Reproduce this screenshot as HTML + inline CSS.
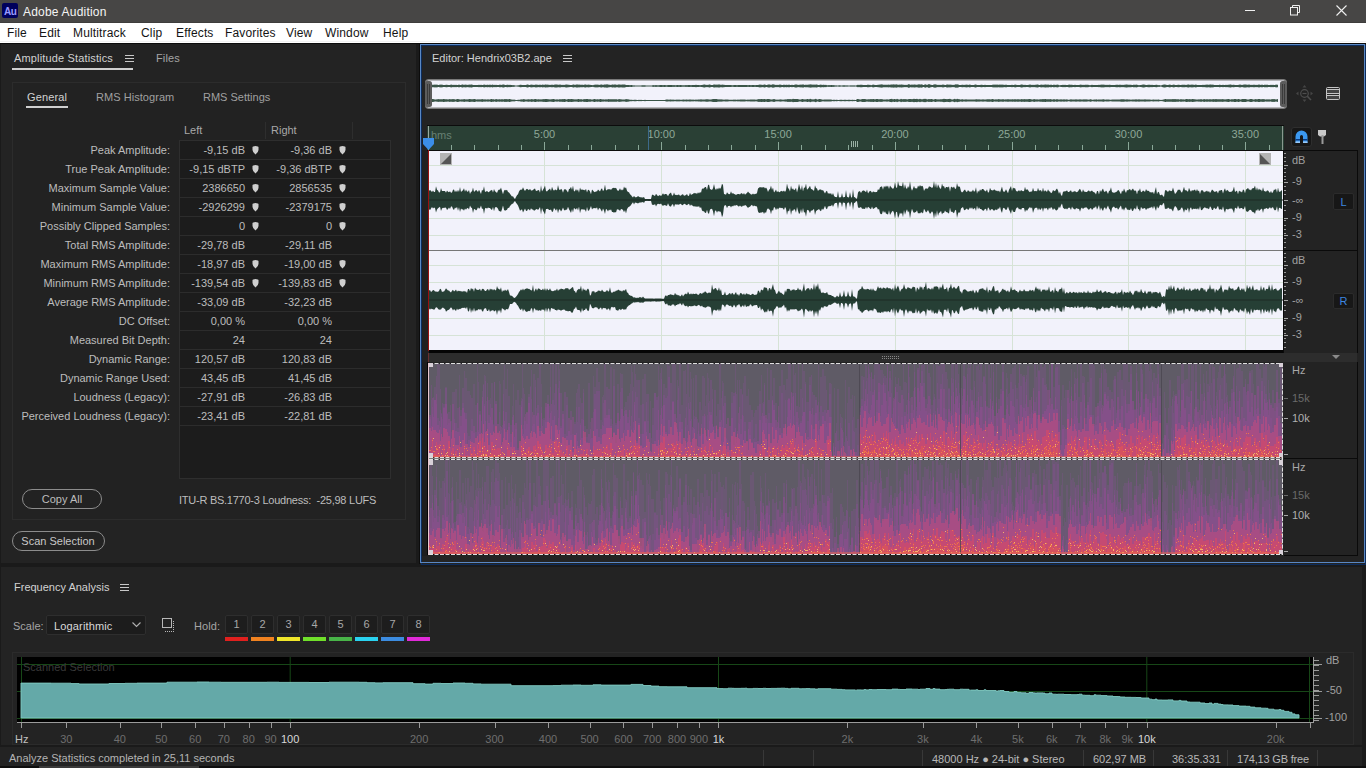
<!DOCTYPE html>
<html><head><meta charset="utf-8">
<style>
*{margin:0;padding:0;box-sizing:border-box}
html,body{width:1366px;height:768px;overflow:hidden;background:#1a1a1a;font-family:"Liberation Sans",sans-serif;position:relative}
.a{position:absolute;white-space:pre}
svg{position:absolute;display:block}
</style></head><body>
<div class="a" style="left:0px;top:0px;width:1366px;height:23px;background:#474645"></div>
<div class="a" style="left:0px;top:22px;width:1366px;height:1px;background:#3e3d3c"></div>
<div class="a" style="left:2px;top:3px;width:16px;height:15px;background:#00005b;border-radius:2px"></div>
<div class="a" style="left:4px;top:6px;font-size:10px;line-height:12px;color:#9a9aff;font-weight:bold;letter-spacing:-0.5px">Au</div>
<div class="a" style="left:23px;top:5px;font-size:12px;line-height:14px;color:#f4f4f4;letter-spacing:0.2px">Adobe Audition</div>
<div class="a" style="left:1245px;top:10px;width:10px;height:1px;background:#f0f0f0"></div>
<svg style="left:1290px;top:5px" width="11" height="11"><path d="M2.5 2.5V0.5H9.5V7.5H7.5" fill="none" stroke="#f0f0f0" stroke-width="1"/><rect x="0.5" y="2.5" width="7" height="7.5" fill="none" stroke="#f0f0f0" stroke-width="1"/></svg>
<svg style="left:1336px;top:5px" width="11" height="11"><path d="M0.5 0.5L10.5 10.5M10.5 0.5L0.5 10.5" stroke="#f0f0f0" stroke-width="1.1"/></svg>
<div class="a" style="left:0px;top:23px;width:1366px;height:20px;background:#ffffff"></div>
<div class="a" style="left:0px;top:41px;width:1366px;height:1px;background:#f2f2f2"></div>
<div class="a" style="left:7px;top:26px;font-size:12px;line-height:14px;color:#141414;letter-spacing:0.15px">File</div>
<div class="a" style="left:39px;top:26px;font-size:12px;line-height:14px;color:#141414;letter-spacing:0.15px">Edit</div>
<div class="a" style="left:73px;top:26px;font-size:12px;line-height:14px;color:#141414;letter-spacing:0.15px">Multitrack</div>
<div class="a" style="left:141px;top:26px;font-size:12px;line-height:14px;color:#141414;letter-spacing:0.15px">Clip</div>
<div class="a" style="left:176px;top:26px;font-size:12px;line-height:14px;color:#141414;letter-spacing:0.15px">Effects</div>
<div class="a" style="left:225px;top:26px;font-size:12px;line-height:14px;color:#141414;letter-spacing:0.15px">Favorites</div>
<div class="a" style="left:286px;top:26px;font-size:12px;line-height:14px;color:#141414;letter-spacing:0.15px">View</div>
<div class="a" style="left:325px;top:26px;font-size:12px;line-height:14px;color:#141414;letter-spacing:0.15px">Window</div>
<div class="a" style="left:383px;top:26px;font-size:12px;line-height:14px;color:#141414;letter-spacing:0.15px">Help</div>
<div class="a" style="left:1px;top:44px;width:415px;height:519px;background:#232323"></div>
<div class="a" style="left:14px;top:52px;font-size:11px;line-height:13px;color:#d2d2d2;letter-spacing:0.15px">Amplitude Statistics</div>
<div class="a" style="left:125px;top:55px;width:9px;height:1px;background:#c8c8c8"></div>
<div class="a" style="left:125px;top:58px;width:9px;height:1px;background:#c8c8c8"></div>
<div class="a" style="left:125px;top:61px;width:9px;height:1px;background:#c8c8c8"></div>
<div class="a" style="left:12px;top:68px;width:121px;height:2px;background:#cfcfcf"></div>
<div class="a" style="left:156px;top:52px;font-size:11px;line-height:13px;color:#a5a5a5;letter-spacing:0.15px">Files</div>
<div class="a" style="left:12px;top:82px;width:394px;height:438px;border:1px solid #2c2c2c;background:#222222"></div>
<div class="a" style="left:27px;top:91px;font-size:11px;line-height:13px;color:#d2d2d2;letter-spacing:0.15px">General</div>
<div class="a" style="left:26px;top:106px;width:42px;height:2px;background:#cfcfcf"></div>
<div class="a" style="left:96px;top:91px;font-size:11px;line-height:13px;color:#a0a0a0;letter-spacing:0.05px">RMS Histogram</div>
<div class="a" style="left:203px;top:91px;font-size:11px;line-height:13px;color:#a0a0a0;">RMS Settings</div>
<div class="a" style="left:184px;top:124px;font-size:11px;line-height:13px;color:#a8a8a8;">Left</div>
<div class="a" style="left:271px;top:124px;font-size:11px;line-height:13px;color:#a8a8a8;">Right</div>
<div class="a" style="left:265px;top:122px;width:1px;height:17px;background:#2e2e2e"></div>
<div class="a" style="left:352px;top:122px;width:1px;height:17px;background:#2e2e2e"></div>
<div class="a" style="left:179px;top:140px;width:212px;height:339px;background:#1c1c1c;border:1px solid #2e2e2e"></div>
<div class="a" style="left:-130px;width:300px;text-align:right;top:144px;font-size:11px;line-height:13px;color:#bdbdbd;">Peak Amplitude:</div>
<div class="a" style="left:-55px;width:300px;text-align:right;top:144px;font-size:11px;line-height:13px;color:#bdbdbd;">-9,15 dB</div>
<div class="a" style="left:32px;width:300px;text-align:right;top:144px;font-size:11px;line-height:13px;color:#bdbdbd;">-9,36 dB</div>
<svg style="left:252px;top:146px" width="7" height="9"><path d="M0.5 1.5Q0.5 0 3.5 0Q6.5 0 6.5 1.5L6.5 4Q6.5 6 3.5 8.5Q0.5 6 0.5 4Z" fill="#cfcfcf"/></svg>
<svg style="left:339px;top:146px" width="7" height="9"><path d="M0.5 1.5Q0.5 0 3.5 0Q6.5 0 6.5 1.5L6.5 4Q6.5 6 3.5 8.5Q0.5 6 0.5 4Z" fill="#cfcfcf"/></svg>
<div class="a" style="left:180px;top:159px;width:210px;height:1px;background:#2c2c2c"></div>
<div class="a" style="left:-130px;width:300px;text-align:right;top:163px;font-size:11px;line-height:13px;color:#bdbdbd;">True Peak Amplitude:</div>
<div class="a" style="left:-55px;width:300px;text-align:right;top:163px;font-size:11px;line-height:13px;color:#bdbdbd;">-9,15 dBTP</div>
<div class="a" style="left:32px;width:300px;text-align:right;top:163px;font-size:11px;line-height:13px;color:#bdbdbd;">-9,36 dBTP</div>
<svg style="left:252px;top:165px" width="7" height="9"><path d="M0.5 1.5Q0.5 0 3.5 0Q6.5 0 6.5 1.5L6.5 4Q6.5 6 3.5 8.5Q0.5 6 0.5 4Z" fill="#cfcfcf"/></svg>
<svg style="left:339px;top:165px" width="7" height="9"><path d="M0.5 1.5Q0.5 0 3.5 0Q6.5 0 6.5 1.5L6.5 4Q6.5 6 3.5 8.5Q0.5 6 0.5 4Z" fill="#cfcfcf"/></svg>
<div class="a" style="left:180px;top:178px;width:210px;height:1px;background:#2c2c2c"></div>
<div class="a" style="left:-130px;width:300px;text-align:right;top:182px;font-size:11px;line-height:13px;color:#bdbdbd;">Maximum Sample Value:</div>
<div class="a" style="left:-55px;width:300px;text-align:right;top:182px;font-size:11px;line-height:13px;color:#bdbdbd;">2386650</div>
<div class="a" style="left:32px;width:300px;text-align:right;top:182px;font-size:11px;line-height:13px;color:#bdbdbd;">2856535</div>
<svg style="left:252px;top:184px" width="7" height="9"><path d="M0.5 1.5Q0.5 0 3.5 0Q6.5 0 6.5 1.5L6.5 4Q6.5 6 3.5 8.5Q0.5 6 0.5 4Z" fill="#cfcfcf"/></svg>
<svg style="left:339px;top:184px" width="7" height="9"><path d="M0.5 1.5Q0.5 0 3.5 0Q6.5 0 6.5 1.5L6.5 4Q6.5 6 3.5 8.5Q0.5 6 0.5 4Z" fill="#cfcfcf"/></svg>
<div class="a" style="left:180px;top:197px;width:210px;height:1px;background:#2c2c2c"></div>
<div class="a" style="left:-130px;width:300px;text-align:right;top:201px;font-size:11px;line-height:13px;color:#bdbdbd;">Minimum Sample Value:</div>
<div class="a" style="left:-55px;width:300px;text-align:right;top:201px;font-size:11px;line-height:13px;color:#bdbdbd;">-2926299</div>
<div class="a" style="left:32px;width:300px;text-align:right;top:201px;font-size:11px;line-height:13px;color:#bdbdbd;">-2379175</div>
<svg style="left:252px;top:203px" width="7" height="9"><path d="M0.5 1.5Q0.5 0 3.5 0Q6.5 0 6.5 1.5L6.5 4Q6.5 6 3.5 8.5Q0.5 6 0.5 4Z" fill="#cfcfcf"/></svg>
<svg style="left:339px;top:203px" width="7" height="9"><path d="M0.5 1.5Q0.5 0 3.5 0Q6.5 0 6.5 1.5L6.5 4Q6.5 6 3.5 8.5Q0.5 6 0.5 4Z" fill="#cfcfcf"/></svg>
<div class="a" style="left:180px;top:216px;width:210px;height:1px;background:#2c2c2c"></div>
<div class="a" style="left:-130px;width:300px;text-align:right;top:220px;font-size:11px;line-height:13px;color:#bdbdbd;">Possibly Clipped Samples:</div>
<div class="a" style="left:-55px;width:300px;text-align:right;top:220px;font-size:11px;line-height:13px;color:#bdbdbd;">0</div>
<div class="a" style="left:32px;width:300px;text-align:right;top:220px;font-size:11px;line-height:13px;color:#bdbdbd;">0</div>
<svg style="left:252px;top:222px" width="7" height="9"><path d="M0.5 1.5Q0.5 0 3.5 0Q6.5 0 6.5 1.5L6.5 4Q6.5 6 3.5 8.5Q0.5 6 0.5 4Z" fill="#cfcfcf"/></svg>
<svg style="left:339px;top:222px" width="7" height="9"><path d="M0.5 1.5Q0.5 0 3.5 0Q6.5 0 6.5 1.5L6.5 4Q6.5 6 3.5 8.5Q0.5 6 0.5 4Z" fill="#cfcfcf"/></svg>
<div class="a" style="left:180px;top:235px;width:210px;height:1px;background:#2c2c2c"></div>
<div class="a" style="left:-130px;width:300px;text-align:right;top:239px;font-size:11px;line-height:13px;color:#bdbdbd;">Total RMS Amplitude:</div>
<div class="a" style="left:-55px;width:300px;text-align:right;top:239px;font-size:11px;line-height:13px;color:#bdbdbd;">-29,78 dB</div>
<div class="a" style="left:32px;width:300px;text-align:right;top:239px;font-size:11px;line-height:13px;color:#bdbdbd;">-29,11 dB</div>
<div class="a" style="left:180px;top:254px;width:210px;height:1px;background:#2c2c2c"></div>
<div class="a" style="left:-130px;width:300px;text-align:right;top:258px;font-size:11px;line-height:13px;color:#bdbdbd;">Maximum RMS Amplitude:</div>
<div class="a" style="left:-55px;width:300px;text-align:right;top:258px;font-size:11px;line-height:13px;color:#bdbdbd;">-18,97 dB</div>
<div class="a" style="left:32px;width:300px;text-align:right;top:258px;font-size:11px;line-height:13px;color:#bdbdbd;">-19,00 dB</div>
<svg style="left:252px;top:260px" width="7" height="9"><path d="M0.5 1.5Q0.5 0 3.5 0Q6.5 0 6.5 1.5L6.5 4Q6.5 6 3.5 8.5Q0.5 6 0.5 4Z" fill="#cfcfcf"/></svg>
<svg style="left:339px;top:260px" width="7" height="9"><path d="M0.5 1.5Q0.5 0 3.5 0Q6.5 0 6.5 1.5L6.5 4Q6.5 6 3.5 8.5Q0.5 6 0.5 4Z" fill="#cfcfcf"/></svg>
<div class="a" style="left:180px;top:273px;width:210px;height:1px;background:#2c2c2c"></div>
<div class="a" style="left:-130px;width:300px;text-align:right;top:277px;font-size:11px;line-height:13px;color:#bdbdbd;">Minimum RMS Amplitude:</div>
<div class="a" style="left:-55px;width:300px;text-align:right;top:277px;font-size:11px;line-height:13px;color:#bdbdbd;">-139,54 dB</div>
<div class="a" style="left:32px;width:300px;text-align:right;top:277px;font-size:11px;line-height:13px;color:#bdbdbd;">-139,83 dB</div>
<svg style="left:252px;top:279px" width="7" height="9"><path d="M0.5 1.5Q0.5 0 3.5 0Q6.5 0 6.5 1.5L6.5 4Q6.5 6 3.5 8.5Q0.5 6 0.5 4Z" fill="#cfcfcf"/></svg>
<svg style="left:339px;top:279px" width="7" height="9"><path d="M0.5 1.5Q0.5 0 3.5 0Q6.5 0 6.5 1.5L6.5 4Q6.5 6 3.5 8.5Q0.5 6 0.5 4Z" fill="#cfcfcf"/></svg>
<div class="a" style="left:180px;top:292px;width:210px;height:1px;background:#2c2c2c"></div>
<div class="a" style="left:-130px;width:300px;text-align:right;top:296px;font-size:11px;line-height:13px;color:#bdbdbd;">Average RMS Amplitude:</div>
<div class="a" style="left:-55px;width:300px;text-align:right;top:296px;font-size:11px;line-height:13px;color:#bdbdbd;">-33,09 dB</div>
<div class="a" style="left:32px;width:300px;text-align:right;top:296px;font-size:11px;line-height:13px;color:#bdbdbd;">-32,23 dB</div>
<div class="a" style="left:180px;top:311px;width:210px;height:1px;background:#2c2c2c"></div>
<div class="a" style="left:-130px;width:300px;text-align:right;top:315px;font-size:11px;line-height:13px;color:#bdbdbd;">DC Offset:</div>
<div class="a" style="left:-55px;width:300px;text-align:right;top:315px;font-size:11px;line-height:13px;color:#bdbdbd;">0,00 %</div>
<div class="a" style="left:32px;width:300px;text-align:right;top:315px;font-size:11px;line-height:13px;color:#bdbdbd;">0,00 %</div>
<div class="a" style="left:180px;top:330px;width:210px;height:1px;background:#2c2c2c"></div>
<div class="a" style="left:-130px;width:300px;text-align:right;top:334px;font-size:11px;line-height:13px;color:#bdbdbd;">Measured Bit Depth:</div>
<div class="a" style="left:-55px;width:300px;text-align:right;top:334px;font-size:11px;line-height:13px;color:#bdbdbd;">24</div>
<div class="a" style="left:32px;width:300px;text-align:right;top:334px;font-size:11px;line-height:13px;color:#bdbdbd;">24</div>
<div class="a" style="left:180px;top:349px;width:210px;height:1px;background:#2c2c2c"></div>
<div class="a" style="left:-130px;width:300px;text-align:right;top:353px;font-size:11px;line-height:13px;color:#bdbdbd;">Dynamic Range:</div>
<div class="a" style="left:-55px;width:300px;text-align:right;top:353px;font-size:11px;line-height:13px;color:#bdbdbd;">120,57 dB</div>
<div class="a" style="left:32px;width:300px;text-align:right;top:353px;font-size:11px;line-height:13px;color:#bdbdbd;">120,83 dB</div>
<div class="a" style="left:180px;top:368px;width:210px;height:1px;background:#2c2c2c"></div>
<div class="a" style="left:-130px;width:300px;text-align:right;top:372px;font-size:11px;line-height:13px;color:#bdbdbd;">Dynamic Range Used:</div>
<div class="a" style="left:-55px;width:300px;text-align:right;top:372px;font-size:11px;line-height:13px;color:#bdbdbd;">43,45 dB</div>
<div class="a" style="left:32px;width:300px;text-align:right;top:372px;font-size:11px;line-height:13px;color:#bdbdbd;">41,45 dB</div>
<div class="a" style="left:180px;top:387px;width:210px;height:1px;background:#2c2c2c"></div>
<div class="a" style="left:-130px;width:300px;text-align:right;top:391px;font-size:11px;line-height:13px;color:#bdbdbd;">Loudness (Legacy):</div>
<div class="a" style="left:-55px;width:300px;text-align:right;top:391px;font-size:11px;line-height:13px;color:#bdbdbd;">-27,91 dB</div>
<div class="a" style="left:32px;width:300px;text-align:right;top:391px;font-size:11px;line-height:13px;color:#bdbdbd;">-26,83 dB</div>
<div class="a" style="left:180px;top:406px;width:210px;height:1px;background:#2c2c2c"></div>
<div class="a" style="left:-130px;width:300px;text-align:right;top:410px;font-size:11px;line-height:13px;color:#bdbdbd;">Perceived Loudness (Legacy):</div>
<div class="a" style="left:-55px;width:300px;text-align:right;top:410px;font-size:11px;line-height:13px;color:#bdbdbd;">-23,41 dB</div>
<div class="a" style="left:32px;width:300px;text-align:right;top:410px;font-size:11px;line-height:13px;color:#bdbdbd;">-22,81 dB</div>
<div class="a" style="left:180px;top:425px;width:210px;height:1px;background:#2c2c2c"></div>
<div class="a" style="left:22px;top:489px;width:80px;height:20px;border:1px solid #8c8c8c;border-radius:10px"></div>
<div class="a" style="left:-88px;width:300px;text-align:center;top:493px;font-size:11px;line-height:13px;color:#bdbdbd;">Copy All</div>
<div class="a" style="left:179px;top:494px;font-size:11px;line-height:13px;color:#bdbdbd;letter-spacing:-0.25px">ITU-R BS.1770-3 Loudness:  -25,98 LUFS</div>
<div class="a" style="left:12px;top:531px;width:93px;height:20px;border:1px solid #8c8c8c;border-radius:10px"></div>
<div class="a" style="left:-92px;width:300px;text-align:center;top:535px;font-size:11px;line-height:13px;color:#c8c8c8;">Scan Selection</div>
<div class="a" style="left:420px;top:44px;width:946px;height:521px;background:#232323"></div>
<div class="a" style="left:421px;top:45px;width:945px;height:520px;border:1px solid #0c2c5c"></div>
<div class="a" style="left:420px;top:44px;width:945px;height:519px;border:1px solid #5a88c4"></div>
<div class="a" style="left:419px;top:44px;width:1px;height:520px;background:#0c0c0c"></div>
<div class="a" style="left:0px;top:43px;width:1366px;height:1px;background:#0c0c0c"></div>
<div class="a" style="left:432px;top:52px;font-size:11px;line-height:13px;color:#d2d2d2;">Editor: Hendrix03B2.ape</div>
<div class="a" style="left:563px;top:55px;width:9px;height:1px;background:#c8c8c8"></div>
<div class="a" style="left:563px;top:58px;width:9px;height:1px;background:#c8c8c8"></div>
<div class="a" style="left:563px;top:61px;width:9px;height:1px;background:#c8c8c8"></div>
<div class="a" style="left:422px;top:150px;width:6px;height:212px;background:#202020"></div>
<svg style="left:429px;top:150px" width="854" height="201">
<rect x="0" y="0" width="854" height="201" fill="#f2f2fb"/>
<rect x="0" y="15" width="854" height="1" fill="#d6e3d6"/>
<rect x="0" y="32" width="854" height="1" fill="#d6e3d6"/>
<rect x="0" y="68" width="854" height="1" fill="#d6e3d6"/>
<rect x="0" y="85" width="854" height="1" fill="#d6e3d6"/>
<rect x="0" y="115" width="854" height="1" fill="#d6e3d6"/>
<rect x="0" y="132" width="854" height="1" fill="#d6e3d6"/>
<rect x="0" y="168" width="854" height="1" fill="#d6e3d6"/>
<rect x="0" y="185" width="854" height="1" fill="#d6e3d6"/>
<rect x="115" y="0" width="1" height="201" fill="#d6e3d6"/>
<rect x="232" y="0" width="1" height="201" fill="#d6e3d6"/>
<rect x="349" y="0" width="1" height="201" fill="#d6e3d6"/>
<rect x="466" y="0" width="1" height="201" fill="#d6e3d6"/>
<rect x="583" y="0" width="1" height="201" fill="#d6e3d6"/>
<rect x="699" y="0" width="1" height="201" fill="#d6e3d6"/>
<rect x="816" y="0" width="1" height="201" fill="#d6e3d6"/>
<path d="M0 50.0 L0.0 41.1 L1.0 39.8 L2.0 41.0 L3.0 41.9 L4.0 40.6 L5.0 42.1 L6.0 42.1 L7.0 36.3 L8.0 39.7 L9.0 40.6 L10.0 42.4 L11.0 42.2 L12.0 38.0 L13.0 41.1 L14.0 40.9 L15.0 41.0 L16.0 41.1 L17.0 42.7 L18.0 40.4 L19.0 41.7 L20.0 42.2 L21.0 41.3 L22.0 42.7 L23.0 42.4 L24.0 39.8 L25.0 39.6 L26.0 42.2 L27.0 40.2 L28.0 42.2 L29.0 39.7 L30.0 42.1 L31.0 36.9 L32.0 41.9 L33.0 41.1 L34.0 40.3 L35.0 38.2 L36.0 41.8 L37.0 39.6 L38.0 41.5 L39.0 41.8 L40.0 40.0 L41.0 43.9 L42.0 41.7 L43.0 41.5 L44.0 37.6 L45.0 41.7 L46.0 41.3 L47.0 39.7 L48.0 40.8 L49.0 41.9 L50.0 39.8 L51.0 41.7 L52.0 43.9 L53.0 39.7 L54.0 40.7 L55.0 36.3 L56.0 41.7 L57.0 41.7 L58.0 40.7 L59.0 41.9 L60.0 42.2 L61.0 40.8 L62.0 40.6 L63.0 39.8 L64.0 42.4 L65.0 39.0 L66.0 41.3 L67.0 42.0 L68.0 43.1 L69.0 40.4 L70.0 39.5 L71.0 39.8 L72.0 37.4 L73.0 41.0 L74.0 44.2 L75.0 40.8 L76.0 39.8 L77.0 40.4 L78.0 39.8 L79.0 42.0 L80.0 42.6 L81.0 43.8 L82.0 45.2 L83.0 46.4 L84.0 46.2 L85.0 48.0 L86.0 49.0 L87.0 46.9 L88.0 45.3 L89.0 44.2 L90.0 41.5 L91.0 40.1 L92.0 39.4 L93.0 39.7 L94.0 37.3 L95.0 39.5 L96.0 41.1 L97.0 39.5 L98.0 38.8 L99.0 39.5 L100.0 40.2 L101.0 38.7 L102.0 40.4 L103.0 40.6 L104.0 40.0 L105.0 38.9 L106.0 38.6 L107.0 41.1 L108.0 40.7 L109.0 40.3 L110.0 40.0 L111.0 42.7 L112.0 35.2 L113.0 41.5 L114.0 39.8 L115.0 38.0 L116.0 35.4 L117.0 40.9 L118.0 41.5 L119.0 40.2 L120.0 39.5 L121.0 38.6 L122.0 41.0 L123.0 36.7 L124.0 39.4 L125.0 40.7 L126.0 39.4 L127.0 39.7 L128.0 40.4 L129.0 35.0 L130.0 39.3 L131.0 40.2 L132.0 38.7 L133.0 39.8 L134.0 42.7 L135.0 39.5 L136.0 39.3 L137.0 39.6 L138.0 40.9 L139.0 42.6 L140.0 39.1 L141.0 38.7 L142.0 36.8 L143.0 39.9 L144.0 35.5 L145.0 41.4 L146.0 41.1 L147.0 39.1 L148.0 41.1 L149.0 39.3 L150.0 42.7 L151.0 37.6 L152.0 39.9 L153.0 39.3 L154.0 40.0 L155.0 39.8 L156.0 40.4 L157.0 38.8 L158.0 42.6 L159.0 39.8 L160.0 39.9 L161.0 41.4 L162.0 44.3 L163.0 39.6 L164.0 40.5 L165.0 41.8 L166.0 42.2 L167.0 41.2 L168.0 41.6 L169.0 39.6 L170.0 40.6 L171.0 41.4 L172.0 39.2 L173.0 38.3 L174.0 41.3 L175.0 39.7 L176.0 34.4 L177.0 40.4 L178.0 39.9 L179.0 39.0 L180.0 39.5 L181.0 39.0 L182.0 40.1 L183.0 38.6 L184.0 37.9 L185.0 37.8 L186.0 38.2 L187.0 37.7 L188.0 39.7 L189.0 41.1 L190.0 40.3 L191.0 38.3 L192.0 40.5 L193.0 39.3 L194.0 40.4 L195.0 36.5 L196.0 38.4 L197.0 37.2 L198.0 40.8 L199.0 42.0 L200.0 42.2 L201.0 44.2 L202.0 45.1 L203.0 46.6 L204.0 47.6 L205.0 45.7 L206.0 47.2 L207.0 47.3 L208.0 47.1 L209.0 46.0 L210.0 46.8 L211.0 47.2 L212.0 47.2 L213.0 47.5 L214.0 47.6 L215.0 46.9 L216.0 48.9 L217.0 49.1 L218.0 49.0 L219.0 49.0 L220.0 48.9 L221.0 49.0 L222.0 49.1 L223.0 44.7 L224.0 44.8 L225.0 45.4 L226.0 45.9 L227.0 43.8 L228.0 45.0 L229.0 46.3 L230.0 45.4 L231.0 45.0 L232.0 46.3 L233.0 44.8 L234.0 43.2 L235.0 44.7 L236.0 44.0 L237.0 43.9 L238.0 44.4 L239.0 46.3 L240.0 44.3 L241.0 43.2 L242.0 42.5 L243.0 45.5 L244.0 45.5 L245.0 42.5 L246.0 45.1 L247.0 44.8 L248.0 45.3 L249.0 44.8 L250.0 44.6 L251.0 45.7 L252.0 45.6 L253.0 44.5 L254.0 44.2 L255.0 45.7 L256.0 45.6 L257.0 45.0 L258.0 44.1 L259.0 45.9 L260.0 45.8 L261.0 42.8 L262.0 44.9 L263.0 44.3 L264.0 44.1 L265.0 42.8 L266.0 43.6 L267.0 43.1 L268.0 44.1 L269.0 42.2 L270.0 43.6 L271.0 41.9 L272.0 42.8 L273.0 38.4 L274.0 38.8 L275.0 38.2 L276.0 37.0 L277.0 37.1 L278.0 39.9 L279.0 35.2 L280.0 34.6 L281.0 38.9 L282.0 39.5 L283.0 40.1 L284.0 38.2 L285.0 34.1 L286.0 38.6 L287.0 40.1 L288.0 38.0 L289.0 39.5 L290.0 37.4 L291.0 38.9 L292.0 37.6 L293.0 33.8 L294.0 35.1 L295.0 43.9 L296.0 44.2 L297.0 44.7 L298.0 42.2 L299.0 43.4 L300.0 44.2 L301.0 44.1 L302.0 41.2 L303.0 43.7 L304.0 43.0 L305.0 43.9 L306.0 44.2 L307.0 44.9 L308.0 44.3 L309.0 44.1 L310.0 44.0 L311.0 44.4 L312.0 43.2 L313.0 43.2 L314.0 44.5 L315.0 43.1 L316.0 44.8 L317.0 43.7 L318.0 42.9 L319.0 41.6 L320.0 42.7 L321.0 43.4 L322.0 44.6 L323.0 44.5 L324.0 43.5 L325.0 44.4 L326.0 43.8 L327.0 44.0 L328.0 42.9 L329.0 38.6 L330.0 37.8 L331.0 37.1 L332.0 37.4 L333.0 37.3 L334.0 37.4 L335.0 37.0 L336.0 38.5 L337.0 37.5 L338.0 38.9 L339.0 41.9 L340.0 39.8 L341.0 38.9 L342.0 35.5 L343.0 40.0 L344.0 37.6 L345.0 42.6 L346.0 41.2 L347.0 39.5 L348.0 42.2 L349.0 40.9 L350.0 42.2 L351.0 42.0 L352.0 40.8 L353.0 41.3 L354.0 41.5 L355.0 40.4 L356.0 41.9 L357.0 40.2 L358.0 33.5 L359.0 38.0 L360.0 39.0 L361.0 41.6 L362.0 35.4 L363.0 39.5 L364.0 38.2 L365.0 40.2 L366.0 39.6 L367.0 37.7 L368.0 42.4 L369.0 38.8 L370.0 33.8 L371.0 37.7 L372.0 40.3 L373.0 35.1 L374.0 41.6 L375.0 37.6 L376.0 37.8 L377.0 33.6 L378.0 39.8 L379.0 38.7 L380.0 37.6 L381.0 35.7 L382.0 38.9 L383.0 39.2 L384.0 40.1 L385.0 40.9 L386.0 35.3 L387.0 37.9 L388.0 38.4 L389.0 40.9 L390.0 39.7 L391.0 39.4 L392.0 39.4 L393.0 40.5 L394.0 40.0 L395.0 41.8 L396.0 43.6 L397.0 41.4 L398.0 40.8 L399.0 43.8 L400.0 42.9 L401.0 44.0 L402.0 42.9 L403.0 45.3 L404.0 42.9 L405.0 45.8 L406.0 47.0 L407.0 46.9 L408.0 47.3 L409.0 41.0 L410.0 47.7 L411.0 47.0 L412.0 47.6 L413.0 43.0 L414.0 47.5 L415.0 47.1 L416.0 46.9 L417.0 40.0 L418.0 46.8 L419.0 47.3 L420.0 47.5 L421.0 42.0 L422.0 47.0 L423.0 47.8 L424.0 39.0 L425.0 47.1 L426.0 47.3 L427.0 48.6 L428.0 48.7 L429.0 42.4 L430.0 41.3 L431.0 41.3 L432.0 43.1 L433.0 41.2 L434.0 40.6 L435.0 40.4 L436.0 41.3 L437.0 42.3 L438.0 39.5 L439.0 43.4 L440.0 42.0 L441.0 40.8 L442.0 41.2 L443.0 42.8 L444.0 41.5 L445.0 41.8 L446.0 42.3 L447.0 42.1 L448.0 41.9 L449.0 39.0 L450.0 40.3 L451.0 37.3 L452.0 36.7 L453.0 36.2 L454.0 39.7 L455.0 35.8 L456.0 37.5 L457.0 35.6 L458.0 37.1 L459.0 35.6 L460.0 39.0 L461.0 35.6 L462.0 36.9 L463.0 38.0 L464.0 39.0 L465.0 37.5 L466.0 32.0 L467.0 37.2 L468.0 38.1 L469.0 31.0 L470.0 35.4 L471.0 35.8 L472.0 36.1 L473.0 36.3 L474.0 31.6 L475.0 38.8 L476.0 34.2 L477.0 38.1 L478.0 39.1 L479.0 36.1 L480.0 37.9 L481.0 31.2 L482.0 38.1 L483.0 40.8 L484.0 38.5 L485.0 35.7 L486.0 38.6 L487.0 38.0 L488.0 38.7 L489.0 35.4 L490.0 36.9 L491.0 34.9 L492.0 36.5 L493.0 35.8 L494.0 36.6 L495.0 40.9 L496.0 39.1 L497.0 38.2 L498.0 38.7 L499.0 38.5 L500.0 36.3 L501.0 36.8 L502.0 37.1 L503.0 38.3 L504.0 36.8 L505.0 31.0 L506.0 37.7 L507.0 32.8 L508.0 38.4 L509.0 34.2 L510.0 36.5 L511.0 38.4 L512.0 38.8 L513.0 33.5 L514.0 36.6 L515.0 35.9 L516.0 38.8 L517.0 37.0 L518.0 37.0 L519.0 37.5 L520.0 36.2 L521.0 41.7 L522.0 36.5 L523.0 37.2 L524.0 37.8 L525.0 36.5 L526.0 38.7 L527.0 38.7 L528.0 33.0 L529.0 36.8 L530.0 36.2 L531.0 37.3 L532.0 41.3 L533.0 42.4 L534.0 41.8 L535.0 40.3 L536.0 39.6 L537.0 41.6 L538.0 41.9 L539.0 40.1 L540.0 41.2 L541.0 41.7 L542.0 41.5 L543.0 41.5 L544.0 39.5 L545.0 41.8 L546.0 40.9 L547.0 37.3 L548.0 43.7 L549.0 40.6 L550.0 41.9 L551.0 39.3 L552.0 40.8 L553.0 38.9 L554.0 39.0 L555.0 39.8 L556.0 41.2 L557.0 41.3 L558.0 39.2 L559.0 42.8 L560.0 41.9 L561.0 37.8 L562.0 39.9 L563.0 40.2 L564.0 40.6 L565.0 39.5 L566.0 39.7 L567.0 41.0 L568.0 40.4 L569.0 41.4 L570.0 40.6 L571.0 42.6 L572.0 39.4 L573.0 36.6 L574.0 40.9 L575.0 41.9 L576.0 41.2 L577.0 39.2 L578.0 41.2 L579.0 43.3 L580.0 39.7 L581.0 37.9 L582.0 35.9 L583.0 41.0 L584.0 37.6 L585.0 38.5 L586.0 37.9 L587.0 40.7 L588.0 41.6 L589.0 41.2 L590.0 40.0 L591.0 41.4 L592.0 39.9 L593.0 40.8 L594.0 41.3 L595.0 41.0 L596.0 36.8 L597.0 40.3 L598.0 39.1 L599.0 40.0 L600.0 41.4 L601.0 42.3 L602.0 41.3 L603.0 41.7 L604.0 37.7 L605.0 41.0 L606.0 41.2 L607.0 40.8 L608.0 41.5 L609.0 37.8 L610.0 40.7 L611.0 40.3 L612.0 40.3 L613.0 41.9 L614.0 37.6 L615.0 41.8 L616.0 40.2 L617.0 41.0 L618.0 41.9 L619.0 39.3 L620.0 41.2 L621.0 41.4 L622.0 43.3 L623.0 42.5 L624.0 40.1 L625.0 40.8 L626.0 41.2 L627.0 39.4 L628.0 38.5 L629.0 40.5 L630.0 43.7 L631.0 41.4 L632.0 45.0 L633.0 46.0 L634.0 41.7 L635.0 41.5 L636.0 41.3 L637.0 41.3 L638.0 40.2 L639.0 41.9 L640.0 42.0 L641.0 40.9 L642.0 40.2 L643.0 42.4 L644.0 41.5 L645.0 41.8 L646.0 40.8 L647.0 42.2 L648.0 41.9 L649.0 41.4 L650.0 39.8 L651.0 38.7 L652.0 40.7 L653.0 42.4 L654.0 39.3 L655.0 41.4 L656.0 41.7 L657.0 42.1 L658.0 41.9 L659.0 40.7 L660.0 40.6 L661.0 41.7 L662.0 41.1 L663.0 40.6 L664.0 41.8 L665.0 42.2 L666.0 42.8 L667.0 44.4 L668.0 40.9 L669.0 41.1 L670.0 44.5 L671.0 40.0 L672.0 42.0 L673.0 40.1 L674.0 38.4 L675.0 41.5 L676.0 42.0 L677.0 40.5 L678.0 41.7 L679.0 43.9 L680.0 40.9 L681.0 40.6 L682.0 37.2 L683.0 42.1 L684.0 42.5 L685.0 42.7 L686.0 42.4 L687.0 42.1 L688.0 41.5 L689.0 39.9 L690.0 40.4 L691.0 42.6 L692.0 44.2 L693.0 40.5 L694.0 41.7 L695.0 38.4 L696.0 41.0 L697.0 43.0 L698.0 40.1 L699.0 40.5 L700.0 39.6 L701.0 39.0 L702.0 40.8 L703.0 39.4 L704.0 38.4 L705.0 40.6 L706.0 40.8 L707.0 40.6 L708.0 44.4 L709.0 40.2 L710.0 40.9 L711.0 38.3 L712.0 42.2 L713.0 41.8 L714.0 40.6 L715.0 41.1 L716.0 42.0 L717.0 39.0 L718.0 40.8 L719.0 40.8 L720.0 41.0 L721.0 42.5 L722.0 41.9 L723.0 42.8 L724.0 41.7 L725.0 44.2 L726.0 40.4 L727.0 37.0 L728.0 44.2 L729.0 41.7 L730.0 42.3 L731.0 45.3 L732.0 44.9 L733.0 44.5 L734.0 46.0 L735.0 47.0 L736.0 40.6 L737.0 40.0 L738.0 41.0 L739.0 42.1 L740.0 40.4 L741.0 40.5 L742.0 41.3 L743.0 40.7 L744.0 37.5 L745.0 41.1 L746.0 44.0 L747.0 42.9 L748.0 41.5 L749.0 39.6 L750.0 39.9 L751.0 39.6 L752.0 41.7 L753.0 42.7 L754.0 40.1 L755.0 36.7 L756.0 40.4 L757.0 40.1 L758.0 40.9 L759.0 41.8 L760.0 37.7 L761.0 40.2 L762.0 41.7 L763.0 40.0 L764.0 40.8 L765.0 40.1 L766.0 39.4 L767.0 41.4 L768.0 38.9 L769.0 41.3 L770.0 40.6 L771.0 43.9 L772.0 40.6 L773.0 40.3 L774.0 40.5 L775.0 42.4 L776.0 41.5 L777.0 41.6 L778.0 40.4 L779.0 42.0 L780.0 41.1 L781.0 43.1 L782.0 41.4 L783.0 39.6 L784.0 40.3 L785.0 41.5 L786.0 42.0 L787.0 41.2 L788.0 41.2 L789.0 43.6 L790.0 40.4 L791.0 40.7 L792.0 39.9 L793.0 40.0 L794.0 43.6 L795.0 40.3 L796.0 38.2 L797.0 41.6 L798.0 39.7 L799.0 40.4 L800.0 41.7 L801.0 42.0 L802.0 41.7 L803.0 41.4 L804.0 40.0 L805.0 36.6 L806.0 42.1 L807.0 41.3 L808.0 40.5 L809.0 44.3 L810.0 40.6 L811.0 41.4 L812.0 41.5 L813.0 42.4 L814.0 39.6 L815.0 40.0 L816.0 43.3 L817.0 39.6 L818.0 38.9 L819.0 37.7 L820.0 39.8 L821.0 39.6 L822.0 40.6 L823.0 38.6 L824.0 38.3 L825.0 38.0 L826.0 35.4 L827.0 40.6 L828.0 37.3 L829.0 40.5 L830.0 38.6 L831.0 40.1 L832.0 39.4 L833.0 41.6 L834.0 37.2 L835.0 41.1 L836.0 41.3 L837.0 41.8 L838.0 40.6 L839.0 40.6 L840.0 41.7 L841.0 43.0 L842.0 40.8 L843.0 43.2 L844.0 42.0 L845.0 39.5 L846.0 39.9 L847.0 38.6 L848.0 42.7 L849.0 37.5 L850.0 41.8 L851.0 41.7 L852.0 41.0 L853.0 40.0 L853.0 59.0 L852.0 58.8 L851.0 57.8 L850.0 58.1 L849.0 62.4 L848.0 56.3 L847.0 59.7 L846.0 60.6 L845.0 59.5 L844.0 57.3 L843.0 57.4 L842.0 58.8 L841.0 57.3 L840.0 58.0 L839.0 59.3 L838.0 58.3 L837.0 58.1 L836.0 59.2 L835.0 58.6 L834.0 63.1 L833.0 58.4 L832.0 59.2 L831.0 60.1 L830.0 61.2 L829.0 58.7 L828.0 60.9 L827.0 59.8 L826.0 64.0 L825.0 62.2 L824.0 62.3 L823.0 61.5 L822.0 59.9 L821.0 59.8 L820.0 60.6 L819.0 61.7 L818.0 61.8 L817.0 60.9 L816.0 55.9 L815.0 58.8 L814.0 59.4 L813.0 58.1 L812.0 58.1 L811.0 58.6 L810.0 58.6 L809.0 55.6 L808.0 58.9 L807.0 58.1 L806.0 57.7 L805.0 63.2 L804.0 60.6 L803.0 58.6 L802.0 58.8 L801.0 58.4 L800.0 58.9 L799.0 59.6 L798.0 59.2 L797.0 58.8 L796.0 62.7 L795.0 60.3 L794.0 56.3 L793.0 60.2 L792.0 59.1 L791.0 59.6 L790.0 59.4 L789.0 55.8 L788.0 57.6 L787.0 59.2 L786.0 58.6 L785.0 57.4 L784.0 60.0 L783.0 59.9 L782.0 57.6 L781.0 56.3 L780.0 59.2 L779.0 58.4 L778.0 58.2 L777.0 58.3 L776.0 57.3 L775.0 57.8 L774.0 58.8 L773.0 60.2 L772.0 60.1 L771.0 55.9 L770.0 60.1 L769.0 58.0 L768.0 59.6 L767.0 58.5 L766.0 59.1 L765.0 58.8 L764.0 58.7 L763.0 59.9 L762.0 57.3 L761.0 58.5 L760.0 62.9 L759.0 57.5 L758.0 59.8 L757.0 60.5 L756.0 59.0 L755.0 62.8 L754.0 59.6 L753.0 57.3 L752.0 58.2 L751.0 60.2 L750.0 60.0 L749.0 61.1 L748.0 58.2 L747.0 56.7 L746.0 56.1 L745.0 58.0 L744.0 61.5 L743.0 60.0 L742.0 58.4 L741.0 59.3 L740.0 58.2 L739.0 57.5 L738.0 58.9 L737.0 58.6 L736.0 59.3 L735.0 53.0 L734.0 53.4 L733.0 55.5 L732.0 54.9 L731.0 54.7 L730.0 57.2 L729.0 58.4 L728.0 55.9 L727.0 61.1 L726.0 58.3 L725.0 55.8 L724.0 58.9 L723.0 56.6 L722.0 57.8 L721.0 57.4 L720.0 58.3 L719.0 58.6 L718.0 58.5 L717.0 60.2 L716.0 57.9 L715.0 58.2 L714.0 58.8 L713.0 58.4 L712.0 56.7 L711.0 61.5 L710.0 59.3 L709.0 59.0 L708.0 55.0 L707.0 59.7 L706.0 58.3 L705.0 58.4 L704.0 61.0 L703.0 60.7 L702.0 58.1 L701.0 60.2 L700.0 59.7 L699.0 59.8 L698.0 59.4 L697.0 57.3 L696.0 58.0 L695.0 60.8 L694.0 58.3 L693.0 60.1 L692.0 55.5 L691.0 56.7 L690.0 58.4 L689.0 59.8 L688.0 57.6 L687.0 58.2 L686.0 57.9 L685.0 56.5 L684.0 56.9 L683.0 58.2 L682.0 62.8 L681.0 59.7 L680.0 58.4 L679.0 55.4 L678.0 57.6 L677.0 59.8 L676.0 57.3 L675.0 57.9 L674.0 61.0 L673.0 59.4 L672.0 57.5 L671.0 60.7 L670.0 54.9 L669.0 57.6 L668.0 59.7 L667.0 55.9 L666.0 57.8 L665.0 57.4 L664.0 58.8 L663.0 60.0 L662.0 58.0 L661.0 58.5 L660.0 59.8 L659.0 59.3 L658.0 57.8 L657.0 57.2 L656.0 57.7 L655.0 57.7 L654.0 59.3 L653.0 57.5 L652.0 58.5 L651.0 61.7 L650.0 58.8 L649.0 59.1 L648.0 58.2 L647.0 58.3 L646.0 59.7 L645.0 58.7 L644.0 58.4 L643.0 56.5 L642.0 60.0 L641.0 58.1 L640.0 57.4 L639.0 58.2 L638.0 59.5 L637.0 58.2 L636.0 59.3 L635.0 58.5 L634.0 57.7 L633.0 53.6 L632.0 55.3 L631.0 58.2 L630.0 56.5 L629.0 58.9 L628.0 60.3 L627.0 60.4 L626.0 59.2 L625.0 58.2 L624.0 60.2 L623.0 58.0 L622.0 57.0 L621.0 58.9 L620.0 57.5 L619.0 60.6 L618.0 58.5 L617.0 57.7 L616.0 58.9 L615.0 57.4 L614.0 62.1 L613.0 57.6 L612.0 59.3 L611.0 60.0 L610.0 57.9 L609.0 60.5 L608.0 57.5 L607.0 58.1 L606.0 57.7 L605.0 59.7 L604.0 62.9 L603.0 57.2 L602.0 58.4 L601.0 57.1 L600.0 58.0 L599.0 59.3 L598.0 60.9 L597.0 59.6 L596.0 62.3 L595.0 58.1 L594.0 58.0 L593.0 58.0 L592.0 59.9 L591.0 58.7 L590.0 59.4 L589.0 57.6 L588.0 57.5 L587.0 58.7 L586.0 62.0 L585.0 61.9 L584.0 61.6 L583.0 59.3 L582.0 64.0 L581.0 61.5 L580.0 59.6 L579.0 56.5 L578.0 58.9 L577.0 60.2 L576.0 58.9 L575.0 57.7 L574.0 58.2 L573.0 63.1 L572.0 60.7 L571.0 56.4 L570.0 58.9 L569.0 58.2 L568.0 60.2 L567.0 59.6 L566.0 59.7 L565.0 61.1 L564.0 59.7 L563.0 58.9 L562.0 59.6 L561.0 60.7 L560.0 58.4 L559.0 57.2 L558.0 61.4 L557.0 59.0 L556.0 58.8 L555.0 60.4 L554.0 60.8 L553.0 59.7 L552.0 59.0 L551.0 59.1 L550.0 57.2 L549.0 59.6 L548.0 55.4 L547.0 61.1 L546.0 57.9 L545.0 58.6 L544.0 59.4 L543.0 57.3 L542.0 58.9 L541.0 57.3 L540.0 59.2 L539.0 59.9 L538.0 58.5 L537.0 59.0 L536.0 60.2 L535.0 60.0 L534.0 57.1 L533.0 57.8 L532.0 58.4 L531.0 62.9 L530.0 62.1 L529.0 63.5 L528.0 68.1 L527.0 59.8 L526.0 60.5 L525.0 63.2 L524.0 62.6 L523.0 61.6 L522.0 62.0 L521.0 57.5 L520.0 63.7 L519.0 62.8 L518.0 62.3 L517.0 62.1 L516.0 60.5 L515.0 63.1 L514.0 62.7 L513.0 64.4 L512.0 60.8 L511.0 62.5 L510.0 62.7 L509.0 66.1 L508.0 60.3 L507.0 67.4 L506.0 62.6 L505.0 69.1 L504.0 62.8 L503.0 61.3 L502.0 62.8 L501.0 63.9 L500.0 62.1 L499.0 60.0 L498.0 61.6 L497.0 62.5 L496.0 60.5 L495.0 58.7 L494.0 63.6 L493.0 62.6 L492.0 62.3 L491.0 63.5 L490.0 62.9 L489.0 63.4 L488.0 60.2 L487.0 62.1 L486.0 62.2 L485.0 63.1 L484.0 61.6 L483.0 58.7 L482.0 62.4 L481.0 68.5 L480.0 61.0 L479.0 62.5 L478.0 59.3 L477.0 61.4 L476.0 64.8 L475.0 59.9 L474.0 67.2 L473.0 62.6 L472.0 64.3 L471.0 62.5 L470.0 65.7 L469.0 68.2 L468.0 61.8 L467.0 62.3 L466.0 68.7 L465.0 63.0 L464.0 60.8 L463.0 61.5 L462.0 63.3 L461.0 65.0 L460.0 60.3 L459.0 64.7 L458.0 63.8 L457.0 63.8 L456.0 61.3 L455.0 62.9 L454.0 60.5 L453.0 63.9 L452.0 64.2 L451.0 63.3 L450.0 58.8 L449.0 59.8 L448.0 57.4 L447.0 57.1 L446.0 57.8 L445.0 58.6 L444.0 58.9 L443.0 56.6 L442.0 59.2 L441.0 58.5 L440.0 57.6 L439.0 56.7 L438.0 59.1 L437.0 56.7 L436.0 59.1 L435.0 58.8 L434.0 58.8 L433.0 58.7 L432.0 56.9 L431.0 57.4 L430.0 58.0 L429.0 57.2 L428.0 51.2 L427.0 51.2 L426.0 52.7 L425.0 53.1 L424.0 60.3 L423.0 52.1 L422.0 52.7 L421.0 57.3 L420.0 52.5 L419.0 52.4 L418.0 53.4 L417.0 60.6 L416.0 52.7 L415.0 53.0 L414.0 52.3 L413.0 57.2 L412.0 52.5 L411.0 52.7 L410.0 52.3 L409.0 59.0 L408.0 52.8 L407.0 52.9 L406.0 53.1 L405.0 54.5 L404.0 57.1 L403.0 54.5 L402.0 56.2 L401.0 55.8 L400.0 56.6 L399.0 56.3 L398.0 59.3 L397.0 58.5 L396.0 55.7 L395.0 58.2 L394.0 60.0 L393.0 58.4 L392.0 61.2 L391.0 60.6 L390.0 59.1 L389.0 59.7 L388.0 60.2 L387.0 61.2 L386.0 64.9 L385.0 59.0 L384.0 59.7 L383.0 60.8 L382.0 60.6 L381.0 63.2 L380.0 61.1 L379.0 59.8 L378.0 60.3 L377.0 66.7 L376.0 61.9 L375.0 62.7 L374.0 57.9 L373.0 63.5 L372.0 59.1 L371.0 62.9 L370.0 63.9 L369.0 60.8 L368.0 56.9 L367.0 62.7 L366.0 59.7 L365.0 59.1 L364.0 61.1 L363.0 60.3 L362.0 65.0 L361.0 57.9 L360.0 61.5 L359.0 60.5 L358.0 65.0 L357.0 58.5 L356.0 57.1 L355.0 59.9 L354.0 58.6 L353.0 57.7 L352.0 58.3 L351.0 57.5 L350.0 58.0 L349.0 59.5 L348.0 58.0 L347.0 60.3 L346.0 57.8 L345.0 56.9 L344.0 61.1 L343.0 59.7 L342.0 64.2 L341.0 60.0 L340.0 59.3 L339.0 58.3 L338.0 59.5 L337.0 62.9 L336.0 62.1 L335.0 63.9 L334.0 61.8 L333.0 62.4 L332.0 62.4 L331.0 62.8 L330.0 63.1 L329.0 61.5 L328.0 56.5 L327.0 56.3 L326.0 56.0 L325.0 55.6 L324.0 56.6 L323.0 54.7 L322.0 55.5 L321.0 56.7 L320.0 57.1 L319.0 58.1 L318.0 56.8 L317.0 55.6 L316.0 55.1 L315.0 55.9 L314.0 55.4 L313.0 56.8 L312.0 56.4 L311.0 55.5 L310.0 56.4 L309.0 56.2 L308.0 55.0 L307.0 55.2 L306.0 55.8 L305.0 55.2 L304.0 56.6 L303.0 55.7 L302.0 57.6 L301.0 55.7 L300.0 56.1 L299.0 56.1 L298.0 58.2 L297.0 55.4 L296.0 55.1 L295.0 56.4 L294.0 64.7 L293.0 67.2 L292.0 62.6 L291.0 61.3 L290.0 61.7 L289.0 60.8 L288.0 62.8 L287.0 60.4 L286.0 60.8 L285.0 66.3 L284.0 61.3 L283.0 58.7 L282.0 59.0 L281.0 59.6 L280.0 63.8 L279.0 63.2 L278.0 59.8 L277.0 63.0 L276.0 62.7 L275.0 61.2 L274.0 61.2 L273.0 60.6 L272.0 56.9 L271.0 58.3 L270.0 56.1 L269.0 56.9 L268.0 56.3 L267.0 57.0 L266.0 56.0 L265.0 56.7 L264.0 55.8 L263.0 55.6 L262.0 54.6 L261.0 56.1 L260.0 53.7 L259.0 54.2 L258.0 55.2 L257.0 54.8 L256.0 54.0 L255.0 53.8 L254.0 55.1 L253.0 55.2 L252.0 53.9 L251.0 53.7 L250.0 54.7 L249.0 54.6 L248.0 54.5 L247.0 54.5 L246.0 54.2 L245.0 57.2 L244.0 54.2 L243.0 54.5 L242.0 56.4 L241.0 56.4 L240.0 55.4 L239.0 53.2 L238.0 56.0 L237.0 55.5 L236.0 55.3 L235.0 55.0 L234.0 56.0 L233.0 55.1 L232.0 53.5 L231.0 54.3 L230.0 54.0 L229.0 53.8 L228.0 54.6 L227.0 56.4 L226.0 54.0 L225.0 54.9 L224.0 54.7 L223.0 54.8 L222.0 50.8 L221.0 51.1 L220.0 51.1 L219.0 51.0 L218.0 50.8 L217.0 50.9 L216.0 51.1 L215.0 53.1 L214.0 52.1 L213.0 52.2 L212.0 52.4 L211.0 52.5 L210.0 52.7 L209.0 53.5 L208.0 52.9 L207.0 52.8 L206.0 52.5 L205.0 54.6 L204.0 52.3 L203.0 53.5 L202.0 55.1 L201.0 56.2 L200.0 56.7 L199.0 57.4 L198.0 59.2 L197.0 63.6 L196.0 60.1 L195.0 62.3 L194.0 60.1 L193.0 59.3 L192.0 59.0 L191.0 60.9 L190.0 59.7 L189.0 59.5 L188.0 59.2 L187.0 62.6 L186.0 62.0 L185.0 62.7 L184.0 61.9 L183.0 62.1 L182.0 59.2 L181.0 60.4 L180.0 59.5 L179.0 61.4 L178.0 59.7 L177.0 58.8 L176.0 63.9 L175.0 60.5 L174.0 58.6 L173.0 61.8 L172.0 60.1 L171.0 58.2 L170.0 58.3 L169.0 60.6 L168.0 57.2 L167.0 58.4 L166.0 58.0 L165.0 58.2 L164.0 58.3 L163.0 59.4 L162.0 56.0 L161.0 58.6 L160.0 60.6 L159.0 60.7 L158.0 57.1 L157.0 61.9 L156.0 59.8 L155.0 59.4 L154.0 59.4 L153.0 59.3 L152.0 59.5 L151.0 63.2 L150.0 56.4 L149.0 60.5 L148.0 57.8 L147.0 59.5 L146.0 58.9 L145.0 57.8 L144.0 62.5 L143.0 59.0 L142.0 63.1 L141.0 61.1 L140.0 59.3 L139.0 56.7 L138.0 59.7 L137.0 59.4 L136.0 60.5 L135.0 59.9 L134.0 57.5 L133.0 60.1 L132.0 61.6 L131.0 59.6 L130.0 59.5 L129.0 63.3 L128.0 58.4 L127.0 60.7 L126.0 59.3 L125.0 57.9 L124.0 61.4 L123.0 61.9 L122.0 59.5 L121.0 59.9 L120.0 60.0 L119.0 58.8 L118.0 58.9 L117.0 59.1 L116.0 64.6 L115.0 62.4 L114.0 60.7 L113.0 57.9 L112.0 64.6 L111.0 56.9 L110.0 58.7 L109.0 60.1 L108.0 59.1 L107.0 59.3 L106.0 60.2 L105.0 60.8 L104.0 59.5 L103.0 59.6 L102.0 58.3 L101.0 60.5 L100.0 59.4 L99.0 59.1 L98.0 61.0 L97.0 60.7 L96.0 58.5 L95.0 60.5 L94.0 62.5 L93.0 59.3 L92.0 59.9 L91.0 60.7 L90.0 57.9 L89.0 55.5 L88.0 54.1 L87.0 52.8 L86.0 50.9 L85.0 52.1 L84.0 53.8 L83.0 53.7 L82.0 55.1 L81.0 56.1 L80.0 57.9 L79.0 57.8 L78.0 59.7 L77.0 60.3 L76.0 60.8 L75.0 59.8 L74.0 55.6 L73.0 59.2 L72.0 61.9 L71.0 61.0 L70.0 61.2 L69.0 58.8 L68.0 57.4 L67.0 57.1 L66.0 57.5 L65.0 61.2 L64.0 57.0 L63.0 59.9 L62.0 59.3 L61.0 57.9 L60.0 58.0 L59.0 57.4 L58.0 58.8 L57.0 57.7 L56.0 58.5 L55.0 63.9 L54.0 58.5 L53.0 59.0 L52.0 55.6 L51.0 57.9 L50.0 58.8 L49.0 57.2 L48.0 59.5 L47.0 60.4 L46.0 59.3 L45.0 58.9 L44.0 63.0 L43.0 58.0 L42.0 57.4 L41.0 55.6 L40.0 59.6 L39.0 58.0 L38.0 58.3 L37.0 59.7 L36.0 58.6 L35.0 60.8 L34.0 59.3 L33.0 59.4 L32.0 58.4 L31.0 62.0 L30.0 57.2 L29.0 60.7 L28.0 56.7 L27.0 58.6 L26.0 57.6 L25.0 60.1 L24.0 59.1 L23.0 56.5 L22.0 56.6 L21.0 59.0 L20.0 57.5 L19.0 58.9 L18.0 59.9 L17.0 57.8 L16.0 57.6 L15.0 58.1 L14.0 57.7 L13.0 58.4 L12.0 61.1 L11.0 56.7 L10.0 57.5 L9.0 58.2 L8.0 59.5 L7.0 62.4 L6.0 58.1 L5.0 57.4 L4.0 58.5 L3.0 57.0 L2.0 58.6 L1.0 60.2 L0.0 58.9 Z" fill="#263f35"/>
<path d="M0 150.0 L0.0 140.6 L1.0 140.0 L2.0 142.0 L3.0 141.2 L4.0 139.9 L5.0 140.3 L6.0 141.5 L7.0 141.5 L8.0 141.8 L9.0 141.7 L10.0 140.9 L11.0 138.7 L12.0 139.2 L13.0 142.0 L14.0 141.6 L15.0 141.5 L16.0 140.0 L17.0 138.3 L18.0 139.4 L19.0 140.6 L20.0 140.5 L21.0 141.8 L22.0 142.6 L23.0 140.8 L24.0 139.8 L25.0 141.5 L26.0 140.8 L27.0 139.4 L28.0 141.8 L29.0 140.5 L30.0 141.2 L31.0 140.7 L32.0 141.5 L33.0 141.3 L34.0 141.7 L35.0 140.8 L36.0 141.7 L37.0 141.2 L38.0 142.9 L39.0 138.9 L40.0 139.0 L41.0 141.2 L42.0 137.7 L43.0 139.4 L44.0 138.5 L45.0 141.8 L46.0 137.5 L47.0 139.3 L48.0 139.8 L49.0 140.1 L50.0 139.8 L51.0 138.8 L52.0 141.2 L53.0 139.0 L54.0 138.8 L55.0 139.6 L56.0 141.1 L57.0 140.9 L58.0 139.5 L59.0 138.9 L60.0 140.9 L61.0 138.6 L62.0 139.7 L63.0 138.7 L64.0 140.4 L65.0 138.9 L66.0 139.9 L67.0 140.5 L68.0 135.9 L69.0 138.8 L70.0 138.8 L71.0 140.0 L72.0 137.2 L73.0 142.3 L74.0 139.9 L75.0 141.2 L76.0 139.4 L77.0 140.8 L78.0 140.6 L79.0 139.1 L80.0 142.1 L81.0 145.5 L82.0 145.5 L83.0 145.9 L84.0 146.7 L85.0 148.1 L86.0 147.8 L87.0 146.7 L88.0 145.5 L89.0 144.1 L90.0 142.0 L91.0 140.7 L92.0 139.2 L93.0 140.4 L94.0 138.4 L95.0 140.4 L96.0 138.7 L97.0 139.0 L98.0 138.0 L99.0 139.0 L100.0 138.8 L101.0 139.6 L102.0 140.2 L103.0 140.5 L104.0 134.8 L105.0 142.1 L106.0 139.9 L107.0 138.2 L108.0 140.8 L109.0 138.4 L110.0 138.6 L111.0 139.2 L112.0 139.9 L113.0 139.9 L114.0 138.5 L115.0 140.5 L116.0 138.0 L117.0 141.0 L118.0 138.3 L119.0 140.0 L120.0 140.2 L121.0 138.3 L122.0 140.5 L123.0 141.1 L124.0 141.2 L125.0 140.7 L126.0 140.2 L127.0 140.6 L128.0 138.4 L129.0 140.9 L130.0 139.4 L131.0 139.5 L132.0 138.6 L133.0 139.1 L134.0 139.1 L135.0 139.8 L136.0 138.8 L137.0 138.1 L138.0 138.4 L139.0 138.0 L140.0 139.8 L141.0 139.2 L142.0 138.4 L143.0 137.6 L144.0 136.9 L145.0 140.8 L146.0 141.3 L147.0 143.3 L148.0 140.4 L149.0 139.6 L150.0 138.7 L151.0 139.4 L152.0 135.6 L153.0 141.7 L154.0 138.1 L155.0 140.2 L156.0 139.2 L157.0 141.2 L158.0 139.6 L159.0 138.5 L160.0 140.1 L161.0 145.8 L162.0 144.8 L163.0 140.9 L164.0 141.7 L165.0 140.7 L166.0 142.9 L167.0 141.7 L168.0 142.1 L169.0 140.6 L170.0 140.8 L171.0 140.8 L172.0 141.5 L173.0 139.6 L174.0 141.0 L175.0 141.9 L176.0 141.8 L177.0 141.4 L178.0 139.7 L179.0 141.5 L180.0 141.3 L181.0 137.3 L182.0 142.1 L183.0 143.0 L184.0 141.9 L185.0 141.6 L186.0 141.7 L187.0 140.6 L188.0 140.7 L189.0 139.7 L190.0 139.7 L191.0 141.1 L192.0 140.4 L193.0 141.7 L194.0 140.3 L195.0 140.5 L196.0 140.4 L197.0 138.7 L198.0 142.4 L199.0 142.8 L200.0 145.0 L201.0 145.2 L202.0 146.1 L203.0 145.8 L204.0 147.3 L205.0 147.5 L206.0 147.3 L207.0 148.2 L208.0 147.5 L209.0 148.0 L210.0 147.5 L211.0 147.1 L212.0 147.4 L213.0 147.7 L214.0 146.6 L215.0 147.8 L216.0 148.4 L217.0 148.6 L218.0 148.6 L219.0 148.6 L220.0 148.4 L221.0 148.5 L222.0 148.4 L223.0 148.6 L224.0 148.6 L225.0 148.8 L226.0 148.6 L227.0 148.4 L228.0 148.6 L229.0 148.5 L230.0 148.5 L231.0 148.4 L232.0 148.6 L233.0 148.8 L234.0 148.8 L235.0 148.7 L236.0 146.1 L237.0 145.3 L238.0 146.4 L239.0 144.9 L240.0 145.1 L241.0 144.4 L242.0 144.2 L243.0 145.0 L244.0 144.8 L245.0 145.5 L246.0 142.8 L247.0 144.8 L248.0 144.5 L249.0 145.6 L250.0 144.9 L251.0 146.5 L252.0 145.8 L253.0 144.2 L254.0 146.5 L255.0 145.1 L256.0 143.9 L257.0 143.6 L258.0 144.6 L259.0 141.6 L260.0 143.8 L261.0 144.5 L262.0 143.3 L263.0 144.4 L264.0 143.6 L265.0 144.1 L266.0 143.9 L267.0 143.5 L268.0 144.0 L269.0 144.9 L270.0 144.4 L271.0 143.1 L272.0 143.2 L273.0 144.1 L274.0 142.4 L275.0 142.7 L276.0 141.3 L277.0 142.0 L278.0 143.3 L279.0 143.2 L280.0 142.2 L281.0 143.0 L282.0 142.4 L283.0 134.3 L284.0 139.2 L285.0 139.4 L286.0 138.0 L287.0 138.2 L288.0 140.3 L289.0 140.4 L290.0 137.3 L291.0 141.5 L292.0 139.0 L293.0 145.1 L294.0 145.0 L295.0 144.4 L296.0 141.5 L297.0 145.2 L298.0 144.9 L299.0 144.8 L300.0 143.5 L301.0 143.0 L302.0 144.7 L303.0 142.7 L304.0 143.5 L305.0 145.1 L306.0 143.6 L307.0 142.0 L308.0 144.9 L309.0 143.9 L310.0 145.9 L311.0 143.5 L312.0 142.8 L313.0 143.9 L314.0 144.7 L315.0 143.2 L316.0 145.2 L317.0 143.5 L318.0 143.6 L319.0 144.5 L320.0 144.0 L321.0 145.0 L322.0 144.9 L323.0 144.0 L324.0 143.7 L325.0 144.7 L326.0 145.1 L327.0 144.6 L328.0 144.6 L329.0 140.6 L330.0 140.9 L331.0 143.3 L332.0 139.5 L333.0 140.0 L334.0 140.6 L335.0 137.0 L336.0 137.7 L337.0 137.5 L338.0 138.3 L339.0 141.5 L340.0 138.2 L341.0 137.9 L342.0 140.3 L343.0 137.2 L344.0 133.9 L345.0 139.2 L346.0 140.0 L347.0 143.4 L348.0 144.0 L349.0 142.1 L350.0 140.5 L351.0 142.8 L352.0 142.4 L353.0 143.5 L354.0 144.2 L355.0 144.9 L356.0 140.1 L357.0 142.4 L358.0 138.8 L359.0 139.1 L360.0 138.8 L361.0 139.4 L362.0 141.3 L363.0 139.6 L364.0 139.9 L365.0 138.9 L366.0 140.5 L367.0 140.1 L368.0 140.1 L369.0 137.6 L370.0 139.9 L371.0 139.2 L372.0 140.0 L373.0 141.8 L374.0 138.2 L375.0 133.3 L376.0 141.1 L377.0 139.7 L378.0 138.6 L379.0 138.3 L380.0 138.2 L381.0 140.5 L382.0 138.0 L383.0 138.6 L384.0 140.0 L385.0 133.2 L386.0 140.0 L387.0 135.0 L388.0 137.6 L389.0 132.9 L390.0 140.0 L391.0 138.1 L392.0 142.3 L393.0 143.3 L394.0 142.0 L395.0 143.2 L396.0 142.9 L397.0 143.2 L398.0 141.8 L399.0 144.4 L400.0 144.8 L401.0 145.0 L402.0 145.1 L403.0 146.0 L404.0 146.0 L405.0 147.1 L406.0 147.6 L407.0 147.1 L408.0 145.5 L409.0 146.7 L410.0 146.8 L411.0 142.0 L412.0 146.5 L413.0 146.7 L414.0 145.4 L415.0 140.0 L416.0 146.6 L417.0 146.5 L418.0 146.3 L419.0 141.0 L420.0 145.4 L421.0 146.7 L422.0 146.5 L423.0 139.0 L424.0 146.0 L425.0 146.7 L426.0 146.7 L427.0 148.6 L428.0 148.5 L429.0 140.7 L430.0 140.4 L431.0 138.7 L432.0 139.3 L433.0 135.7 L434.0 138.0 L435.0 139.6 L436.0 139.1 L437.0 139.8 L438.0 138.8 L439.0 139.0 L440.0 139.2 L441.0 140.3 L442.0 138.3 L443.0 140.8 L444.0 138.3 L445.0 140.5 L446.0 140.5 L447.0 141.2 L448.0 138.7 L449.0 136.1 L450.0 138.6 L451.0 137.7 L452.0 137.5 L453.0 139.3 L454.0 137.4 L455.0 137.8 L456.0 138.3 L457.0 138.7 L458.0 137.1 L459.0 138.1 L460.0 138.6 L461.0 137.9 L462.0 139.0 L463.0 139.8 L464.0 137.4 L465.0 141.2 L466.0 134.1 L467.0 139.4 L468.0 137.6 L469.0 135.6 L470.0 138.2 L471.0 142.0 L472.0 139.8 L473.0 138.8 L474.0 138.5 L475.0 133.9 L476.0 137.7 L477.0 139.5 L478.0 138.5 L479.0 136.8 L480.0 138.3 L481.0 137.7 L482.0 139.2 L483.0 138.0 L484.0 136.6 L485.0 137.3 L486.0 137.0 L487.0 142.2 L488.0 137.2 L489.0 138.5 L490.0 139.9 L491.0 135.9 L492.0 138.1 L493.0 136.6 L494.0 140.3 L495.0 136.9 L496.0 136.8 L497.0 131.8 L498.0 139.9 L499.0 137.8 L500.0 138.6 L501.0 138.7 L502.0 139.8 L503.0 137.4 L504.0 139.8 L505.0 136.3 L506.0 137.1 L507.0 136.1 L508.0 136.7 L509.0 136.7 L510.0 140.1 L511.0 136.3 L512.0 138.5 L513.0 136.6 L514.0 133.4 L515.0 139.5 L516.0 138.9 L517.0 139.1 L518.0 136.8 L519.0 142.2 L520.0 138.1 L521.0 137.5 L522.0 133.5 L523.0 138.7 L524.0 137.9 L525.0 136.6 L526.0 138.0 L527.0 139.0 L528.0 138.1 L529.0 136.3 L530.0 135.7 L531.0 141.4 L532.0 141.4 L533.0 143.8 L534.0 140.0 L535.0 139.5 L536.0 139.3 L537.0 140.0 L538.0 141.0 L539.0 141.7 L540.0 141.2 L541.0 141.2 L542.0 140.5 L543.0 141.8 L544.0 139.5 L545.0 141.8 L546.0 143.4 L547.0 139.8 L548.0 141.8 L549.0 143.1 L550.0 139.4 L551.0 139.3 L552.0 138.4 L553.0 138.7 L554.0 137.9 L555.0 140.1 L556.0 139.6 L557.0 140.9 L558.0 136.2 L559.0 142.9 L560.0 139.7 L561.0 140.0 L562.0 141.6 L563.0 139.3 L564.0 136.5 L565.0 136.0 L566.0 141.7 L567.0 140.5 L568.0 141.0 L569.0 139.7 L570.0 143.5 L571.0 142.1 L572.0 141.4 L573.0 139.4 L574.0 138.5 L575.0 140.2 L576.0 139.4 L577.0 141.2 L578.0 141.6 L579.0 139.9 L580.0 142.6 L581.0 141.0 L582.0 136.2 L583.0 139.9 L584.0 140.3 L585.0 139.5 L586.0 139.5 L587.0 141.0 L588.0 141.0 L589.0 142.8 L590.0 141.4 L591.0 139.5 L592.0 141.6 L593.0 140.7 L594.0 141.5 L595.0 139.1 L596.0 140.8 L597.0 141.6 L598.0 141.1 L599.0 141.6 L600.0 140.9 L601.0 139.4 L602.0 140.7 L603.0 140.5 L604.0 139.7 L605.0 142.0 L606.0 139.0 L607.0 136.2 L608.0 139.5 L609.0 137.9 L610.0 140.5 L611.0 138.2 L612.0 142.3 L613.0 140.5 L614.0 139.3 L615.0 140.1 L616.0 139.2 L617.0 141.2 L618.0 139.2 L619.0 140.8 L620.0 136.2 L621.0 141.3 L622.0 141.9 L623.0 140.6 L624.0 139.9 L625.0 143.3 L626.0 137.1 L627.0 140.9 L628.0 140.8 L629.0 142.5 L630.0 140.0 L631.0 138.8 L632.0 139.2 L633.0 137.0 L634.0 143.1 L635.0 138.0 L636.0 144.0 L637.0 142.8 L638.0 141.9 L639.0 143.4 L640.0 142.7 L641.0 141.4 L642.0 142.5 L643.0 143.3 L644.0 142.1 L645.0 141.8 L646.0 142.9 L647.0 142.3 L648.0 142.5 L649.0 143.5 L650.0 141.4 L651.0 143.1 L652.0 142.0 L653.0 142.7 L654.0 143.0 L655.0 141.1 L656.0 142.9 L657.0 142.2 L658.0 143.2 L659.0 140.3 L660.0 143.0 L661.0 142.2 L662.0 142.9 L663.0 143.3 L664.0 141.2 L665.0 142.8 L666.0 141.4 L667.0 142.3 L668.0 138.9 L669.0 141.7 L670.0 141.9 L671.0 141.1 L672.0 140.0 L673.0 142.8 L674.0 142.8 L675.0 142.0 L676.0 141.2 L677.0 141.2 L678.0 143.2 L679.0 141.9 L680.0 141.9 L681.0 142.2 L682.0 142.9 L683.0 143.3 L684.0 143.5 L685.0 143.4 L686.0 142.3 L687.0 141.6 L688.0 144.5 L689.0 142.0 L690.0 142.9 L691.0 142.6 L692.0 141.9 L693.0 139.0 L694.0 144.9 L695.0 141.4 L696.0 142.3 L697.0 143.0 L698.0 142.2 L699.0 142.3 L700.0 143.1 L701.0 140.5 L702.0 142.6 L703.0 143.4 L704.0 145.2 L705.0 142.9 L706.0 140.6 L707.0 141.6 L708.0 140.2 L709.0 142.7 L710.0 141.3 L711.0 142.8 L712.0 138.8 L713.0 141.5 L714.0 143.1 L715.0 143.0 L716.0 140.2 L717.0 143.1 L718.0 144.0 L719.0 141.6 L720.0 141.8 L721.0 141.4 L722.0 141.6 L723.0 144.0 L724.0 141.8 L725.0 142.7 L726.0 141.7 L727.0 142.3 L728.0 141.9 L729.0 143.4 L730.0 143.1 L731.0 141.4 L732.0 144.3 L733.0 147.2 L734.0 146.6 L735.0 145.7 L736.0 147.3 L737.0 139.7 L738.0 138.9 L739.0 140.3 L740.0 135.4 L741.0 139.8 L742.0 134.7 L743.0 139.4 L744.0 138.3 L745.0 135.6 L746.0 140.4 L747.0 140.9 L748.0 138.4 L749.0 137.3 L750.0 139.3 L751.0 139.9 L752.0 138.7 L753.0 138.3 L754.0 140.3 L755.0 136.0 L756.0 140.4 L757.0 139.9 L758.0 138.7 L759.0 140.7 L760.0 139.6 L761.0 138.0 L762.0 141.0 L763.0 140.5 L764.0 139.2 L765.0 139.9 L766.0 138.0 L767.0 139.9 L768.0 139.0 L769.0 138.5 L770.0 140.9 L771.0 140.1 L772.0 137.5 L773.0 138.6 L774.0 138.1 L775.0 140.7 L776.0 138.7 L777.0 142.3 L778.0 140.9 L779.0 138.3 L780.0 139.4 L781.0 134.2 L782.0 139.7 L783.0 138.3 L784.0 139.7 L785.0 137.9 L786.0 143.1 L787.0 138.9 L788.0 140.1 L789.0 140.9 L790.0 138.8 L791.0 138.4 L792.0 134.4 L793.0 138.6 L794.0 142.7 L795.0 140.6 L796.0 138.9 L797.0 140.3 L798.0 139.2 L799.0 140.7 L800.0 135.6 L801.0 138.2 L802.0 138.4 L803.0 139.0 L804.0 138.0 L805.0 140.7 L806.0 139.7 L807.0 139.7 L808.0 139.1 L809.0 136.8 L810.0 136.4 L811.0 140.6 L812.0 139.7 L813.0 138.0 L814.0 140.2 L815.0 137.9 L816.0 142.1 L817.0 141.2 L818.0 134.5 L819.0 138.7 L820.0 138.1 L821.0 136.0 L822.0 140.3 L823.0 138.0 L824.0 135.1 L825.0 140.5 L826.0 139.4 L827.0 139.9 L828.0 138.8 L829.0 140.7 L830.0 139.9 L831.0 140.7 L832.0 135.3 L833.0 140.5 L834.0 138.5 L835.0 136.7 L836.0 141.2 L837.0 138.9 L838.0 138.7 L839.0 139.2 L840.0 134.6 L841.0 138.1 L842.0 140.9 L843.0 134.1 L844.0 140.5 L845.0 139.0 L846.0 139.1 L847.0 138.2 L848.0 140.5 L849.0 140.4 L850.0 140.3 L851.0 138.7 L852.0 137.9 L853.0 138.4 L853.0 160.5 L852.0 160.6 L851.0 160.6 L850.0 158.6 L849.0 158.3 L848.0 158.9 L847.0 162.5 L846.0 161.3 L845.0 161.3 L844.0 158.5 L843.0 165.5 L842.0 158.4 L841.0 160.6 L840.0 163.5 L839.0 159.7 L838.0 162.1 L837.0 161.5 L836.0 159.1 L835.0 163.7 L834.0 160.3 L833.0 158.7 L832.0 164.7 L831.0 159.5 L830.0 160.5 L829.0 159.8 L828.0 159.7 L827.0 160.0 L826.0 160.6 L825.0 159.2 L824.0 163.3 L823.0 161.5 L822.0 158.4 L821.0 164.9 L820.0 162.5 L819.0 161.0 L818.0 164.2 L817.0 159.4 L816.0 157.7 L815.0 162.7 L814.0 160.3 L813.0 161.6 L812.0 159.7 L811.0 159.3 L810.0 162.9 L809.0 161.7 L808.0 160.0 L807.0 160.7 L806.0 158.8 L805.0 158.0 L804.0 161.9 L803.0 160.1 L802.0 161.3 L801.0 161.3 L800.0 163.4 L799.0 160.1 L798.0 159.6 L797.0 159.2 L796.0 160.0 L795.0 159.3 L794.0 156.7 L793.0 160.6 L792.0 166.0 L791.0 160.7 L790.0 160.9 L789.0 159.6 L788.0 158.6 L787.0 159.6 L786.0 156.2 L785.0 162.4 L784.0 160.2 L783.0 160.6 L782.0 159.6 L781.0 164.1 L780.0 160.1 L779.0 160.1 L778.0 159.2 L777.0 158.1 L776.0 162.1 L775.0 159.4 L774.0 162.8 L773.0 159.8 L772.0 161.5 L771.0 160.6 L770.0 159.4 L769.0 160.8 L768.0 161.8 L767.0 160.0 L766.0 162.4 L765.0 159.3 L764.0 159.7 L763.0 159.1 L762.0 158.0 L761.0 161.2 L760.0 161.2 L759.0 158.6 L758.0 159.6 L757.0 158.7 L756.0 158.5 L755.0 164.5 L754.0 159.0 L753.0 160.7 L752.0 159.9 L751.0 160.9 L750.0 160.1 L749.0 161.4 L748.0 160.0 L747.0 157.9 L746.0 158.5 L745.0 164.4 L744.0 160.3 L743.0 159.1 L742.0 164.7 L741.0 159.2 L740.0 165.7 L739.0 158.5 L738.0 160.8 L737.0 160.5 L736.0 152.6 L735.0 154.6 L734.0 153.3 L733.0 152.6 L732.0 155.4 L731.0 157.4 L730.0 156.5 L729.0 156.0 L728.0 158.5 L727.0 158.0 L726.0 158.0 L725.0 156.3 L724.0 157.5 L723.0 155.4 L722.0 157.6 L721.0 157.7 L720.0 158.6 L719.0 157.4 L718.0 155.2 L717.0 157.3 L716.0 159.6 L715.0 157.5 L714.0 156.5 L713.0 159.0 L712.0 161.2 L711.0 157.4 L710.0 158.8 L709.0 157.0 L708.0 158.5 L707.0 157.5 L706.0 159.9 L705.0 157.5 L704.0 155.1 L703.0 156.1 L702.0 157.4 L701.0 159.8 L700.0 156.9 L699.0 158.0 L698.0 157.5 L697.0 157.0 L696.0 157.8 L695.0 157.9 L694.0 155.4 L693.0 161.8 L692.0 157.1 L691.0 158.0 L690.0 157.6 L689.0 158.0 L688.0 154.7 L687.0 158.8 L686.0 156.7 L685.0 157.1 L684.0 156.5 L683.0 155.8 L682.0 156.3 L681.0 157.7 L680.0 157.9 L679.0 158.3 L678.0 157.3 L677.0 157.9 L676.0 157.4 L675.0 158.5 L674.0 156.2 L673.0 157.6 L672.0 158.7 L671.0 159.2 L670.0 158.4 L669.0 158.7 L668.0 160.8 L667.0 158.1 L666.0 157.7 L665.0 157.2 L664.0 158.1 L663.0 157.0 L662.0 157.3 L661.0 157.4 L660.0 156.8 L659.0 158.3 L658.0 155.8 L657.0 157.7 L656.0 156.9 L655.0 159.4 L654.0 157.0 L653.0 156.4 L652.0 157.5 L651.0 157.1 L650.0 158.3 L649.0 155.5 L648.0 157.8 L647.0 158.0 L646.0 156.1 L645.0 158.0 L644.0 157.4 L643.0 156.9 L642.0 156.9 L641.0 157.8 L640.0 157.0 L639.0 157.0 L638.0 157.1 L637.0 156.3 L636.0 155.9 L635.0 162.6 L634.0 156.7 L633.0 162.3 L632.0 161.3 L631.0 161.5 L630.0 158.7 L629.0 157.9 L628.0 158.3 L627.0 158.3 L626.0 163.4 L625.0 156.3 L624.0 160.5 L623.0 158.3 L622.0 158.6 L621.0 157.8 L620.0 162.2 L619.0 158.8 L618.0 160.0 L617.0 158.5 L616.0 161.4 L615.0 160.1 L614.0 159.1 L613.0 158.7 L612.0 157.5 L611.0 161.4 L610.0 159.7 L609.0 161.6 L608.0 159.1 L607.0 162.5 L606.0 161.5 L605.0 157.5 L604.0 160.6 L603.0 160.3 L602.0 159.3 L601.0 160.6 L600.0 159.0 L599.0 157.8 L598.0 159.5 L597.0 158.0 L596.0 159.7 L595.0 160.0 L594.0 159.0 L593.0 159.5 L592.0 158.4 L591.0 160.0 L590.0 157.6 L589.0 157.4 L588.0 158.4 L587.0 159.0 L586.0 159.2 L585.0 159.1 L584.0 158.6 L583.0 160.5 L582.0 162.3 L581.0 159.5 L580.0 156.9 L579.0 159.9 L578.0 157.8 L577.0 158.8 L576.0 159.2 L575.0 159.3 L574.0 162.2 L573.0 159.5 L572.0 158.6 L571.0 157.3 L570.0 156.0 L569.0 158.9 L568.0 157.7 L567.0 160.2 L566.0 158.7 L565.0 164.5 L564.0 164.0 L563.0 161.5 L562.0 157.5 L561.0 159.9 L560.0 159.9 L559.0 157.0 L558.0 164.7 L557.0 159.3 L556.0 161.1 L555.0 158.7 L554.0 162.1 L553.0 161.3 L552.0 161.8 L551.0 160.6 L550.0 161.0 L549.0 156.3 L548.0 158.7 L547.0 159.7 L546.0 156.6 L545.0 158.7 L544.0 160.6 L543.0 157.6 L542.0 158.6 L541.0 158.1 L540.0 158.8 L539.0 158.9 L538.0 159.5 L537.0 159.4 L536.0 160.0 L535.0 160.9 L534.0 159.2 L533.0 155.8 L532.0 157.3 L531.0 157.7 L530.0 163.9 L529.0 163.8 L528.0 161.8 L527.0 160.3 L526.0 162.8 L525.0 163.4 L524.0 160.7 L523.0 159.8 L522.0 167.7 L521.0 163.5 L520.0 162.6 L519.0 157.7 L518.0 162.2 L517.0 159.5 L516.0 160.1 L515.0 159.4 L514.0 167.6 L513.0 164.1 L512.0 161.8 L511.0 162.1 L510.0 159.0 L509.0 162.2 L508.0 164.2 L507.0 162.3 L506.0 163.3 L505.0 163.8 L504.0 160.0 L503.0 163.5 L502.0 159.3 L501.0 161.0 L500.0 160.1 L499.0 160.7 L498.0 158.6 L497.0 166.8 L496.0 161.6 L495.0 161.3 L494.0 160.5 L493.0 162.3 L492.0 162.6 L491.0 164.3 L490.0 160.3 L489.0 161.5 L488.0 163.7 L487.0 158.2 L486.0 163.2 L485.0 162.4 L484.0 163.5 L483.0 162.2 L482.0 160.6 L481.0 161.8 L480.0 160.4 L479.0 163.7 L478.0 161.0 L477.0 159.0 L476.0 160.9 L475.0 166.9 L474.0 160.4 L473.0 160.5 L472.0 160.3 L471.0 158.4 L470.0 161.0 L469.0 163.5 L468.0 161.7 L467.0 159.0 L466.0 166.7 L465.0 157.5 L464.0 163.5 L463.0 159.0 L462.0 159.7 L461.0 162.6 L460.0 161.8 L459.0 160.8 L458.0 162.6 L457.0 160.9 L456.0 161.9 L455.0 160.9 L454.0 163.1 L453.0 161.6 L452.0 162.7 L451.0 163.0 L450.0 162.1 L449.0 163.0 L448.0 161.8 L447.0 159.2 L446.0 159.3 L445.0 158.3 L444.0 161.6 L443.0 159.8 L442.0 160.7 L441.0 159.7 L440.0 161.4 L439.0 160.9 L438.0 159.6 L437.0 160.1 L436.0 159.9 L435.0 160.9 L434.0 162.0 L433.0 163.2 L432.0 161.3 L431.0 161.2 L430.0 158.9 L429.0 159.7 L428.0 151.6 L427.0 151.5 L426.0 153.5 L425.0 153.3 L424.0 154.0 L423.0 160.9 L422.0 153.4 L421.0 153.6 L420.0 154.3 L419.0 157.8 L418.0 153.8 L417.0 153.3 L416.0 153.3 L415.0 159.9 L414.0 154.2 L413.0 152.9 L412.0 153.0 L411.0 158.2 L410.0 153.4 L409.0 153.4 L408.0 153.9 L407.0 153.1 L406.0 152.5 L405.0 152.8 L404.0 153.4 L403.0 154.1 L402.0 154.8 L401.0 154.9 L400.0 154.5 L399.0 155.7 L398.0 157.0 L397.0 156.5 L396.0 156.3 L395.0 156.3 L394.0 158.4 L393.0 156.8 L392.0 158.0 L391.0 160.9 L390.0 159.3 L389.0 166.9 L388.0 160.6 L387.0 164.2 L386.0 160.7 L385.0 167.2 L384.0 160.5 L383.0 160.5 L382.0 162.1 L381.0 159.8 L380.0 161.9 L379.0 161.1 L378.0 160.2 L377.0 158.8 L376.0 159.4 L375.0 167.8 L374.0 160.8 L373.0 158.4 L372.0 159.4 L371.0 160.7 L370.0 160.6 L369.0 161.5 L368.0 159.8 L367.0 159.0 L366.0 159.2 L365.0 159.5 L364.0 159.2 L363.0 159.5 L362.0 159.2 L361.0 159.4 L360.0 161.5 L359.0 159.5 L358.0 162.1 L357.0 156.8 L356.0 158.6 L355.0 154.6 L354.0 156.1 L353.0 156.5 L352.0 158.0 L351.0 157.0 L350.0 158.3 L349.0 157.3 L348.0 155.7 L347.0 157.2 L346.0 158.9 L345.0 159.8 L344.0 166.8 L343.0 161.3 L342.0 160.4 L341.0 161.1 L340.0 161.6 L339.0 158.5 L338.0 162.4 L337.0 160.9 L336.0 162.8 L335.0 161.6 L334.0 159.5 L333.0 158.6 L332.0 160.8 L331.0 156.0 L330.0 158.1 L329.0 158.0 L328.0 155.0 L327.0 155.0 L326.0 155.3 L325.0 155.3 L324.0 155.9 L323.0 156.5 L322.0 154.5 L321.0 154.5 L320.0 156.4 L319.0 155.9 L318.0 156.4 L317.0 157.0 L316.0 154.2 L315.0 157.2 L314.0 155.3 L313.0 156.1 L312.0 157.5 L311.0 155.7 L310.0 153.7 L309.0 155.4 L308.0 154.9 L307.0 157.8 L306.0 156.2 L305.0 154.6 L304.0 156.7 L303.0 157.6 L302.0 155.5 L301.0 156.0 L300.0 155.7 L299.0 154.7 L298.0 154.6 L297.0 154.7 L296.0 157.6 L295.0 155.5 L294.0 154.7 L293.0 154.6 L292.0 161.2 L291.0 159.1 L290.0 161.4 L289.0 158.9 L288.0 160.4 L287.0 160.6 L286.0 160.3 L285.0 159.5 L284.0 161.2 L283.0 166.0 L282.0 158.1 L281.0 156.7 L280.0 156.7 L279.0 156.3 L278.0 156.8 L277.0 157.5 L276.0 157.7 L275.0 156.9 L274.0 157.3 L273.0 155.5 L272.0 156.5 L271.0 156.1 L270.0 154.8 L269.0 155.2 L268.0 156.1 L267.0 156.2 L266.0 155.4 L265.0 155.4 L264.0 156.2 L263.0 155.9 L262.0 156.4 L261.0 155.9 L260.0 156.0 L259.0 157.5 L258.0 155.4 L257.0 156.3 L256.0 156.0 L255.0 155.0 L254.0 153.0 L253.0 155.5 L252.0 154.3 L251.0 153.1 L250.0 154.4 L249.0 154.0 L248.0 155.0 L247.0 155.0 L246.0 156.6 L245.0 154.5 L244.0 154.6 L243.0 154.6 L242.0 155.9 L241.0 155.5 L240.0 155.3 L239.0 155.4 L238.0 153.2 L237.0 154.4 L236.0 153.8 L235.0 151.2 L234.0 151.1 L233.0 151.3 L232.0 151.2 L231.0 151.5 L230.0 151.4 L229.0 151.6 L228.0 151.4 L227.0 151.8 L226.0 151.3 L225.0 151.2 L224.0 151.4 L223.0 151.2 L222.0 151.7 L221.0 151.5 L220.0 151.4 L219.0 151.5 L218.0 151.5 L217.0 151.4 L216.0 151.5 L215.0 152.0 L214.0 152.9 L213.0 152.2 L212.0 152.7 L211.0 152.6 L210.0 152.4 L209.0 151.8 L208.0 152.5 L207.0 151.9 L206.0 152.8 L205.0 152.3 L204.0 152.5 L203.0 153.6 L202.0 153.8 L201.0 155.0 L200.0 155.2 L199.0 156.2 L198.0 157.2 L197.0 159.8 L196.0 159.1 L195.0 160.1 L194.0 158.9 L193.0 158.7 L192.0 160.3 L191.0 159.3 L190.0 159.2 L189.0 161.0 L188.0 159.9 L187.0 160.2 L186.0 157.0 L185.0 157.2 L184.0 157.4 L183.0 156.8 L182.0 157.5 L181.0 161.1 L180.0 158.7 L179.0 158.6 L178.0 160.2 L177.0 158.4 L176.0 158.0 L175.0 158.2 L174.0 157.8 L173.0 159.9 L172.0 157.5 L171.0 158.1 L170.0 159.4 L169.0 158.7 L168.0 157.3 L167.0 157.6 L166.0 157.0 L165.0 158.2 L164.0 158.2 L163.0 157.9 L162.0 155.5 L161.0 153.7 L160.0 160.2 L159.0 161.2 L158.0 159.8 L157.0 158.1 L156.0 160.1 L155.0 160.0 L154.0 161.5 L153.0 158.1 L152.0 163.1 L151.0 160.5 L150.0 160.0 L149.0 160.0 L148.0 159.6 L147.0 156.5 L146.0 158.6 L145.0 159.0 L144.0 161.7 L143.0 163.3 L142.0 161.7 L141.0 161.0 L140.0 160.9 L139.0 161.4 L138.0 160.8 L137.0 160.9 L136.0 160.3 L135.0 159.3 L134.0 160.1 L133.0 159.8 L132.0 161.0 L131.0 159.7 L130.0 159.9 L129.0 159.2 L128.0 160.7 L127.0 159.9 L126.0 160.1 L125.0 158.6 L124.0 159.2 L123.0 157.9 L122.0 158.3 L121.0 162.6 L120.0 158.4 L119.0 158.5 L118.0 162.3 L117.0 157.6 L116.0 162.0 L115.0 159.3 L114.0 160.3 L113.0 159.1 L112.0 160.9 L111.0 160.2 L110.0 160.3 L109.0 161.0 L108.0 159.4 L107.0 160.8 L106.0 158.8 L105.0 158.2 L104.0 163.3 L103.0 158.2 L102.0 158.4 L101.0 161.3 L100.0 160.7 L99.0 161.3 L98.0 161.7 L97.0 161.8 L96.0 160.5 L95.0 158.9 L94.0 161.7 L93.0 158.2 L92.0 160.1 L91.0 159.6 L90.0 157.8 L89.0 155.7 L88.0 154.8 L87.0 153.1 L86.0 152.2 L85.0 151.8 L84.0 152.9 L83.0 153.9 L82.0 154.0 L81.0 153.9 L80.0 157.3 L79.0 159.6 L78.0 159.0 L77.0 159.3 L76.0 160.8 L75.0 159.2 L74.0 159.3 L73.0 157.7 L72.0 163.5 L71.0 159.4 L70.0 161.8 L69.0 159.8 L68.0 164.9 L67.0 160.0 L66.0 160.9 L65.0 161.6 L64.0 159.8 L63.0 160.8 L62.0 160.4 L61.0 162.0 L60.0 158.9 L59.0 161.0 L58.0 161.1 L57.0 158.3 L56.0 158.3 L55.0 159.0 L54.0 161.8 L53.0 160.9 L52.0 158.8 L51.0 160.1 L50.0 159.1 L49.0 159.5 L48.0 160.7 L47.0 159.9 L46.0 161.8 L45.0 157.8 L44.0 162.0 L43.0 159.3 L42.0 162.9 L41.0 157.5 L40.0 161.2 L39.0 161.4 L38.0 156.8 L37.0 159.0 L36.0 157.6 L35.0 158.1 L34.0 157.7 L33.0 157.9 L32.0 158.6 L31.0 159.2 L30.0 158.8 L29.0 160.2 L28.0 158.5 L27.0 160.9 L26.0 159.9 L25.0 159.0 L24.0 160.4 L23.0 158.6 L22.0 157.2 L21.0 158.4 L20.0 159.8 L19.0 159.9 L18.0 160.8 L17.0 161.8 L16.0 159.1 L15.0 158.4 L14.0 157.5 L13.0 157.9 L12.0 159.6 L11.0 159.6 L10.0 159.7 L9.0 158.7 L8.0 157.6 L7.0 157.3 L6.0 158.8 L5.0 160.0 L4.0 158.9 L3.0 159.2 L2.0 158.4 L1.0 159.8 L0.0 158.6 Z" fill="#263f35"/>
<rect x="0" y="49.5" width="854" height="1" fill="#1d2a24"/>
<rect x="0" y="149.5" width="854" height="1" fill="#1d2a24"/>
<rect x="0" y="100" width="854" height="1" fill="#777"/>
</svg>
<svg style="left:440px;top:153px" width="12" height="12"><rect width="12" height="12" fill="#b4b4b4"/><path d="M1 11L11 1V11Z" fill="#555"/></svg>
<svg style="left:1259px;top:153px" width="12" height="12"><rect width="12" height="12" fill="#b4b4b4"/><path d="M1 1L11 11H1Z" fill="#555"/></svg>
<div class="a" style="left:429px;top:350px;width:855px;height:3px;background:#050505"></div>
<div class="a" style="left:1283px;top:150px;width:1px;height:203px;background:#0a0a0a"></div>
<div class="a" style="left:427px;top:125px;width:857px;height:26px;background:#2a4035;border-top:1px solid #0c0c0c;border-bottom:1px solid #0c0c0c"></div>
<svg style="left:427px;top:126px" width="857" height="24">
<rect x="1" y="16" width="1" height="8" fill="#8aa898"/>
<rect x="24" y="19" width="1" height="5" fill="#8aa898"/>
<rect x="47" y="19" width="1" height="5" fill="#8aa898"/>
<rect x="71" y="19" width="1" height="5" fill="#8aa898"/>
<rect x="94" y="19" width="1" height="5" fill="#8aa898"/>
<rect x="117" y="16" width="1" height="8" fill="#8aa898"/>
<rect x="141" y="19" width="1" height="5" fill="#8aa898"/>
<rect x="164" y="19" width="1" height="5" fill="#8aa898"/>
<rect x="188" y="19" width="1" height="5" fill="#8aa898"/>
<rect x="211" y="19" width="1" height="5" fill="#8aa898"/>
<rect x="234" y="16" width="1" height="8" fill="#8aa898"/>
<rect x="258" y="19" width="1" height="5" fill="#8aa898"/>
<rect x="281" y="19" width="1" height="5" fill="#8aa898"/>
<rect x="304" y="19" width="1" height="5" fill="#8aa898"/>
<rect x="328" y="19" width="1" height="5" fill="#8aa898"/>
<rect x="351" y="16" width="1" height="8" fill="#8aa898"/>
<rect x="374" y="19" width="1" height="5" fill="#8aa898"/>
<rect x="398" y="19" width="1" height="5" fill="#8aa898"/>
<rect x="421" y="19" width="1" height="5" fill="#8aa898"/>
<rect x="445" y="19" width="1" height="5" fill="#8aa898"/>
<rect x="468" y="16" width="1" height="8" fill="#8aa898"/>
<rect x="491" y="19" width="1" height="5" fill="#8aa898"/>
<rect x="515" y="19" width="1" height="5" fill="#8aa898"/>
<rect x="538" y="19" width="1" height="5" fill="#8aa898"/>
<rect x="561" y="19" width="1" height="5" fill="#8aa898"/>
<rect x="585" y="16" width="1" height="8" fill="#8aa898"/>
<rect x="608" y="19" width="1" height="5" fill="#8aa898"/>
<rect x="631" y="19" width="1" height="5" fill="#8aa898"/>
<rect x="655" y="19" width="1" height="5" fill="#8aa898"/>
<rect x="678" y="19" width="1" height="5" fill="#8aa898"/>
<rect x="701" y="16" width="1" height="8" fill="#8aa898"/>
<rect x="725" y="19" width="1" height="5" fill="#8aa898"/>
<rect x="748" y="19" width="1" height="5" fill="#8aa898"/>
<rect x="772" y="19" width="1" height="5" fill="#8aa898"/>
<rect x="795" y="19" width="1" height="5" fill="#8aa898"/>
<rect x="818" y="16" width="1" height="8" fill="#8aa898"/>
<rect x="842" y="19" width="1" height="5" fill="#8aa898"/>
</svg>
<div class="a" style="left:394.5px;width:300px;text-align:center;top:128px;font-size:11px;line-height:13px;color:#8ea898;">5:00</div>
<div class="a" style="left:511.29999999999995px;width:300px;text-align:center;top:128px;font-size:11px;line-height:13px;color:#8ea898;">10:00</div>
<div class="a" style="left:628.0999999999999px;width:300px;text-align:center;top:128px;font-size:11px;line-height:13px;color:#8ea898;">15:00</div>
<div class="a" style="left:744.9px;width:300px;text-align:center;top:128px;font-size:11px;line-height:13px;color:#8ea898;">20:00</div>
<div class="a" style="left:861.7px;width:300px;text-align:center;top:128px;font-size:11px;line-height:13px;color:#8ea898;">25:00</div>
<div class="a" style="left:978.5px;width:300px;text-align:center;top:128px;font-size:11px;line-height:13px;color:#8ea898;">30:00</div>
<div class="a" style="left:1095.3px;width:300px;text-align:center;top:128px;font-size:11px;line-height:13px;color:#8ea898;">35:00</div>
<div class="a" style="left:431px;top:129px;font-size:11px;line-height:13px;color:#688074;">hms</div>
<div class="a" style="left:648px;top:126px;width:1px;height:24px;background:#3d6a8a"></div>
<div class="a" style="left:851px;top:141px;width:1px;height:6px;background:#9ab0a4"></div>
<div class="a" style="left:853px;top:141px;width:1px;height:6px;background:#9ab0a4"></div>
<div class="a" style="left:855px;top:141px;width:1px;height:6px;background:#9ab0a4"></div>
<div class="a" style="left:857px;top:141px;width:1px;height:6px;background:#9ab0a4"></div>
<div class="a" style="left:428px;top:126px;width:1px;height:12px;background:#9aa8a0"></div>
<div class="a" style="left:1282px;top:126px;width:1px;height:24px;background:#8a9890"></div>
<svg style="left:423px;top:138px" width="12" height="13"><path d="M0 0H11V6L5.5 12L0 6Z" fill="#3b8ee8"/></svg>
<svg style="left:425px;top:79px" width="862" height="30">
<rect x="0.75" y="0.75" width="860.5" height="28.5" rx="3" fill="#f2f2fb" stroke="#7a7a7a" stroke-width="1.5"/>
<path d="M7 7 L7 5.8 L8 5.7 L9 5.7 L10 5.6 L11 5.7 L12 5.6 L13 6.1 L14 5.9 L15 5.6 L16 5.7 L17 5.6 L18 6.1 L19 5.9 L20 6.0 L21 5.8 L22 5.8 L23 6.1 L24 6.0 L25 6.0 L26 5.6 L27 5.7 L28 6.0 L29 5.7 L30 6.1 L31 5.8 L32 6.1 L33 6.1 L34 5.6 L35 6.0 L36 6.0 L37 5.5 L38 5.6 L39 6.0 L40 5.6 L41 5.8 L42 5.7 L43 6.0 L44 5.6 L45 5.7 L46 5.6 L47 5.6 L48 6.0 L49 5.9 L50 6.0 L51 6.1 L52 6.1 L53 6.0 L54 5.8 L55 6.1 L56 5.7 L57 5.9 L58 6.0 L59 5.6 L60 5.8 L61 5.9 L62 5.8 L63 5.7 L64 6.1 L65 5.5 L66 6.1 L67 5.7 L68 5.6 L68 6.1 L69 5.7 L70 5.9 L71 5.8 L72 6.1 L73 6.1 L74 6.0 L75 5.6 L76 6.0 L77 5.7 L78 5.6 L79 5.6 L80 5.9 L81 5.9 L82 5.8 L83 5.7 L84 6.1 L85 5.8 L86 5.9 L87 6.0 L88 6.3 L89 6.1 L90 6.4 L91 6.4 L92 6.5 L93 6.2 L94 6.2 L95 5.8 L96 5.7 L97 5.9 L98 5.9 L99 6.0 L100 6.0 L101 6.0 L102 5.6 L103 5.4 L104 6.0 L105 6.1 L106 5.4 L107 5.7 L108 5.8 L109 5.9 L110 5.7 L111 5.5 L112 5.8 L113 5.8 L114 6.1 L115 5.5 L116 6.1 L117 5.8 L118 5.5 L119 6.0 L120 5.6 L121 5.5 L122 5.7 L123 5.6 L124 6.0 L125 5.8 L126 6.0 L127 5.5 L128 5.9 L129 5.8 L130 5.4 L131 5.5 L132 5.4 L133 5.8 L134 5.8 L135 5.6 L136 5.8 L137 5.9 L138 5.8 L139 6.0 L140 5.8 L141 5.4 L142 5.5 L143 5.7 L144 5.8 L145 5.9 L146 6.0 L147 5.9 L148 5.6 L149 5.5 L150 5.9 L151 5.6 L152 5.6 L153 5.6 L154 5.7 L155 5.6 L156 5.9 L157 5.6 L158 5.9 L159 5.8 L160 5.6 L161 5.6 L162 5.9 L163 5.5 L164 5.7 L165 5.7 L166 6.1 L167 6.1 L168 6.2 L169 5.7 L170 5.8 L171 5.6 L172 5.7 L173 5.6 L174 5.9 L175 5.7 L176 5.6 L177 5.6 L178 5.9 L179 5.6 L180 5.6 L181 5.5 L182 5.3 L183 5.4 L184 5.7 L185 5.7 L186 5.9 L187 5.4 L188 5.4 L188 5.7 L189 5.5 L190 5.5 L191 5.5 L192 5.9 L193 5.5 L194 5.6 L195 5.6 L196 5.7 L197 5.6 L198 5.5 L199 5.6 L200 5.5 L201 6.0 L202 6.0 L203 5.9 L204 5.9 L205 6.2 L206 6.0 L207 6.1 L208 6.4 L209 6.3 L210 6.4 L211 6.4 L212 6.4 L213 6.4 L214 6.4 L215 6.4 L216 6.4 L217 6.3 L218 6.3 L219 6.3 L220 6.3 L221 6.5 L222 6.4 L223 6.5 L224 6.5 L225 6.5 L226 6.5 L227 6.5 L228 6.1 L229 6.2 L230 6.3 L231 6.1 L232 6.3 L233 6.2 L234 6.2 L235 6.1 L236 6.0 L237 6.1 L238 6.2 L239 6.1 L240 6.1 L241 6.2 L242 6.3 L243 6.1 L244 6.1 L245 6.0 L246 6.0 L247 6.1 L248 6.2 L249 6.0 L250 6.3 L251 6.3 L252 6.1 L253 6.1 L254 6.3 L255 6.1 L256 6.0 L257 6.2 L258 6.2 L259 6.2 L260 6.2 L261 6.0 L262 6.2 L263 6.0 L264 6.0 L265 6.1 L266 6.2 L267 6.0 L268 6.0 L269 6.1 L270 6.1 L271 5.8 L272 6.0 L273 6.1 L274 6.0 L275 6.2 L276 5.9 L277 6.0 L278 5.8 L279 5.5 L280 5.4 L281 6.0 L282 5.7 L283 5.9 L284 5.4 L285 5.5 L286 5.9 L287 5.9 L288 5.9 L289 5.3 L290 5.8 L291 5.6 L292 5.7 L293 5.6 L294 5.6 L295 5.5 L296 6.0 L297 5.5 L298 5.8 L299 5.7 L300 6.1 L301 6.1 L302 6.1 L303 6.1 L304 6.1 L305 6.0 L306 6.0 L307 6.3 L308 6.2 L309 6.1 L310 5.9 L310 5.9 L311 6.0 L312 6.3 L313 5.9 L314 6.1 L315 6.0 L316 6.0 L317 6.0 L318 6.1 L319 5.9 L320 6.1 L321 6.1 L322 5.9 L323 6.2 L324 6.1 L325 5.9 L326 6.2 L327 5.9 L328 6.0 L329 6.1 L330 6.2 L331 5.9 L332 5.9 L333 5.9 L334 5.7 L335 5.6 L336 5.7 L337 5.8 L338 5.9 L339 5.6 L340 5.4 L341 6.0 L342 5.9 L343 5.4 L344 5.4 L345 5.5 L346 6.0 L347 5.5 L348 5.3 L349 5.6 L350 5.8 L351 6.1 L352 5.7 L353 6.0 L354 5.8 L355 5.6 L356 5.8 L357 6.1 L358 6.0 L359 5.6 L360 6.1 L361 5.8 L362 5.8 L363 5.9 L364 5.6 L365 6.0 L366 6.0 L367 5.8 L368 6.0 L369 6.0 L370 5.6 L371 5.5 L372 5.4 L373 5.9 L374 5.7 L375 5.8 L376 5.6 L377 5.7 L378 5.3 L379 5.8 L380 6.0 L381 5.5 L382 5.9 L383 5.6 L384 5.7 L385 5.3 L386 5.6 L387 5.6 L388 5.8 L389 5.6 L390 5.8 L391 5.5 L392 5.6 L393 5.9 L394 5.9 L395 5.8 L396 5.6 L397 6.0 L398 5.7 L399 5.7 L400 6.1 L401 5.8 L402 6.2 L403 6.2 L404 6.0 L405 6.2 L406 6.0 L407 6.1 L408 6.2 L409 6.1 L410 6.4 L411 6.3 L412 6.4 L413 6.4 L414 6.2 L415 6.3 L416 6.4 L417 6.4 L418 6.2 L419 6.3 L420 6.3 L421 6.4 L422 6.3 L423 6.4 L424 6.4 L425 6.4 L426 6.3 L427 6.4 L428 6.3 L429 6.4 L430 6.3 L430 6.4 L431 6.4 L432 5.9 L433 5.7 L434 5.9 L435 5.8 L436 5.8 L437 5.7 L438 5.9 L439 6.1 L440 6.1 L441 6.0 L442 6.1 L443 5.6 L444 5.9 L445 5.7 L446 6.2 L447 5.9 L448 5.6 L449 5.8 L450 5.9 L451 5.9 L452 5.9 L453 5.8 L454 5.8 L455 5.6 L456 5.6 L457 5.2 L458 5.8 L459 5.8 L460 5.7 L461 5.8 L462 5.7 L463 5.8 L464 5.6 L465 5.9 L466 5.2 L467 5.7 L468 5.2 L469 5.4 L470 5.4 L471 5.6 L472 5.2 L473 5.9 L474 5.4 L475 5.7 L476 5.4 L477 5.4 L478 5.8 L479 5.8 L480 6.0 L481 5.8 L482 5.9 L483 5.6 L484 5.1 L485 5.7 L486 5.7 L487 5.6 L488 5.7 L489 5.4 L490 5.4 L491 5.8 L492 5.8 L493 5.4 L494 5.2 L495 5.4 L496 5.6 L497 5.2 L498 6.0 L499 5.9 L500 5.3 L501 5.6 L502 5.9 L503 5.5 L504 5.1 L505 5.5 L506 5.7 L507 5.9 L508 5.9 L509 5.2 L510 5.6 L511 5.2 L512 5.9 L513 5.8 L514 5.9 L515 5.7 L516 5.9 L517 5.8 L518 5.6 L519 5.7 L520 5.9 L521 6.0 L522 5.2 L523 5.8 L524 5.6 L525 5.7 L526 5.5 L527 5.9 L528 5.7 L529 5.9 L530 5.5 L531 5.2 L532 5.5 L533 5.3 L534 6.0 L535 6.1 L536 5.9 L537 5.8 L538 5.8 L539 5.9 L540 5.7 L541 5.7 L542 5.5 L543 5.9 L544 5.8 L545 5.6 L546 6.0 L547 6.0 L548 5.9 L549 6.1 L550 5.6 L551 5.6 L552 5.9 L552 6.0 L553 6.1 L554 6.0 L555 6.1 L556 5.8 L557 5.8 L558 6.0 L559 6.1 L560 5.7 L561 6.1 L562 6.0 L563 5.9 L564 5.9 L565 6.1 L566 5.9 L567 5.9 L568 5.6 L569 5.8 L570 5.5 L571 5.7 L572 5.6 L573 5.8 L574 5.8 L575 5.6 L576 5.7 L577 5.5 L578 5.7 L579 5.7 L580 5.9 L581 5.6 L582 5.9 L583 6.0 L584 6.1 L585 6.0 L586 6.0 L587 5.7 L588 5.9 L589 6.1 L590 5.6 L591 5.8 L592 6.1 L593 6.1 L594 6.0 L595 5.9 L596 5.6 L597 5.5 L598 5.7 L599 6.0 L600 5.8 L601 5.9 L602 5.9 L603 6.1 L604 5.7 L605 5.6 L606 5.7 L607 6.1 L608 5.8 L609 6.0 L610 5.7 L611 5.8 L612 5.5 L613 5.6 L614 6.0 L615 5.9 L616 5.5 L617 5.8 L618 5.8 L619 5.8 L620 5.6 L621 5.5 L622 5.8 L623 5.5 L624 5.7 L625 6.1 L626 5.6 L627 5.9 L628 6.1 L629 5.5 L630 6.1 L631 5.8 L632 5.8 L633 5.6 L634 6.2 L635 6.3 L636 6.0 L637 6.0 L638 5.8 L639 6.0 L640 5.7 L641 6.0 L642 6.0 L643 6.0 L644 5.6 L645 5.7 L646 5.7 L647 5.8 L648 5.9 L649 6.1 L650 5.7 L651 5.9 L652 6.1 L653 6.1 L654 6.1 L655 5.7 L656 5.6 L657 6.0 L658 5.7 L659 6.0 L660 5.8 L661 5.7 L662 5.8 L663 5.7 L664 5.9 L665 6.2 L666 5.9 L667 5.8 L668 6.1 L669 5.9 L670 6.0 L671 6.1 L672 6.0 L672 5.9 L673 5.9 L674 5.8 L675 5.9 L676 5.6 L677 5.7 L678 5.6 L679 5.8 L680 5.8 L681 5.9 L682 5.7 L683 6.0 L684 5.8 L685 5.8 L686 5.9 L687 6.0 L688 6.1 L689 6.1 L690 6.0 L691 5.8 L692 5.7 L693 5.8 L694 6.0 L695 5.6 L696 6.0 L697 5.7 L698 6.1 L699 5.7 L700 5.8 L701 5.6 L702 5.6 L703 5.8 L704 5.7 L705 5.7 L706 5.8 L707 6.0 L708 5.9 L709 5.6 L710 6.0 L711 5.6 L712 5.8 L713 5.9 L714 6.2 L715 5.9 L716 6.1 L717 5.8 L718 5.6 L719 5.6 L720 5.8 L721 5.9 L722 6.1 L723 5.8 L724 5.8 L725 5.8 L726 5.9 L727 5.7 L728 6.0 L729 6.0 L730 6.0 L731 5.8 L732 5.8 L733 6.2 L734 6.1 L735 6.2 L736 6.4 L737 6.1 L738 5.8 L739 5.6 L740 5.6 L741 5.7 L742 5.9 L743 5.9 L744 5.8 L745 5.6 L746 6.0 L747 6.0 L748 5.8 L749 5.6 L750 6.0 L751 6.1 L752 6.1 L753 5.8 L754 5.8 L755 6.0 L756 6.0 L757 5.8 L758 5.7 L759 5.7 L760 5.7 L761 6.1 L762 5.8 L763 5.6 L764 5.6 L765 5.9 L766 5.6 L767 5.7 L768 5.6 L769 6.0 L770 5.7 L771 5.6 L772 5.9 L773 6.1 L774 6.0 L775 6.0 L776 6.1 L777 6.1 L778 5.8 L779 6.1 L780 5.7 L781 5.7 L782 5.6 L783 5.7 L784 5.7 L785 5.6 L786 5.6 L787 5.8 L788 5.6 L789 6.1 L790 6.1 L791 6.1 L792 6.0 L793 5.9 L794 5.9 L794 5.7 L795 5.7 L796 6.1 L797 5.9 L798 5.8 L799 5.9 L800 6.1 L801 5.8 L802 5.9 L803 5.7 L804 5.8 L805 5.6 L806 5.6 L807 6.1 L808 5.7 L809 5.7 L810 6.0 L811 6.1 L812 5.9 L813 5.9 L814 5.7 L815 5.6 L816 5.8 L817 5.9 L818 5.7 L819 5.6 L820 5.5 L821 5.6 L822 5.8 L823 5.8 L824 5.4 L825 5.7 L826 6.0 L827 5.7 L828 5.9 L829 5.5 L830 6.0 L831 5.8 L832 6.0 L833 5.8 L834 5.5 L835 5.8 L836 5.9 L837 5.5 L838 6.1 L839 5.9 L840 5.6 L841 6.1 L842 5.6 L843 5.9 L844 6.1 L845 6.0 L846 5.8 L847 5.9 L848 5.8 L849 6.1 L850 6.0 L851 5.5 L852 5.8 L853 5.8 L853 8.2 L852 8.2 L851 8.5 L850 8.0 L849 7.9 L848 8.2 L847 8.1 L846 8.2 L845 8.0 L844 7.9 L843 8.1 L842 8.4 L841 7.9 L840 8.4 L839 8.1 L838 7.9 L837 8.5 L836 8.1 L835 8.2 L834 8.5 L833 8.2 L832 8.0 L831 8.2 L830 8.0 L829 8.5 L828 8.1 L827 8.3 L826 8.0 L825 8.3 L824 8.6 L823 8.2 L822 8.2 L821 8.4 L820 8.5 L819 8.4 L818 8.3 L817 8.1 L816 8.2 L815 8.4 L814 8.3 L813 8.1 L812 8.1 L811 7.9 L810 8.0 L809 8.3 L808 8.3 L807 7.9 L806 8.4 L805 8.4 L804 8.2 L803 8.3 L802 8.1 L801 8.2 L800 7.9 L799 8.1 L798 8.2 L797 8.1 L796 7.9 L795 8.3 L794 8.3 L794 8.1 L793 8.1 L792 8.0 L791 7.9 L790 7.9 L789 7.9 L788 8.4 L787 8.2 L786 8.4 L785 8.4 L784 8.3 L783 8.3 L782 8.4 L781 8.3 L780 8.3 L779 7.9 L778 8.2 L777 7.9 L776 7.9 L775 8.0 L774 8.0 L773 7.9 L772 8.1 L771 8.4 L770 8.3 L769 8.0 L768 8.4 L767 8.3 L766 8.4 L765 8.1 L764 8.4 L763 8.4 L762 8.2 L761 7.9 L760 8.3 L759 8.3 L758 8.3 L757 8.2 L756 8.0 L755 8.0 L754 8.2 L753 8.2 L752 7.9 L751 7.9 L750 8.0 L749 8.4 L748 8.2 L747 8.0 L746 8.0 L745 8.4 L744 8.2 L743 8.1 L742 8.1 L741 8.3 L740 8.4 L739 8.4 L738 8.2 L737 7.9 L736 7.6 L735 7.8 L734 7.9 L733 7.8 L732 8.2 L731 8.2 L730 8.0 L729 8.0 L728 8.0 L727 8.3 L726 8.1 L725 8.2 L724 8.2 L723 8.2 L722 7.9 L721 8.1 L720 8.2 L719 8.4 L718 8.4 L717 8.2 L716 7.9 L715 8.1 L714 7.8 L713 8.1 L712 8.2 L711 8.4 L710 8.0 L709 8.4 L708 8.1 L707 8.0 L706 8.2 L705 8.3 L704 8.3 L703 8.2 L702 8.4 L701 8.4 L700 8.2 L699 8.3 L698 7.9 L697 8.3 L696 8.0 L695 8.4 L694 8.0 L693 8.2 L692 8.3 L691 8.2 L690 8.0 L689 7.9 L688 7.9 L687 8.0 L686 8.1 L685 8.2 L684 8.2 L683 8.0 L682 8.3 L681 8.1 L680 8.2 L679 8.2 L678 8.4 L677 8.3 L676 8.4 L675 8.1 L674 8.2 L673 8.1 L672 8.1 L672 8.0 L671 7.9 L670 8.0 L669 8.1 L668 7.9 L667 8.2 L666 8.1 L665 7.8 L664 8.1 L663 8.3 L662 8.2 L661 8.3 L660 8.2 L659 8.0 L658 8.3 L657 8.0 L656 8.4 L655 8.3 L654 7.9 L653 7.9 L652 7.9 L651 8.1 L650 8.3 L649 7.9 L648 8.1 L647 8.2 L646 8.3 L645 8.3 L644 8.4 L643 8.0 L642 8.0 L641 8.0 L640 8.3 L639 8.0 L638 8.2 L637 8.0 L636 8.0 L635 7.7 L634 7.8 L633 8.4 L632 8.2 L631 8.2 L630 7.9 L629 8.5 L628 7.9 L627 8.1 L626 8.4 L625 7.9 L624 8.3 L623 8.5 L622 8.2 L621 8.5 L620 8.4 L619 8.2 L618 8.2 L617 8.2 L616 8.5 L615 8.1 L614 8.0 L613 8.4 L612 8.5 L611 8.2 L610 8.3 L609 8.0 L608 8.2 L607 7.9 L606 8.3 L605 8.4 L604 8.3 L603 7.9 L602 8.1 L601 8.1 L600 8.2 L599 8.0 L598 8.3 L597 8.5 L596 8.4 L595 8.1 L594 8.0 L593 7.9 L592 7.9 L591 8.2 L590 8.4 L589 7.9 L588 8.1 L587 8.3 L586 8.0 L585 8.0 L584 7.9 L583 8.0 L582 8.1 L581 8.4 L580 8.1 L579 8.3 L578 8.3 L577 8.5 L576 8.3 L575 8.4 L574 8.2 L573 8.2 L572 8.4 L571 8.3 L570 8.5 L569 8.2 L568 8.4 L567 8.1 L566 8.1 L565 7.9 L564 8.1 L563 8.1 L562 8.0 L561 7.9 L560 8.3 L559 7.9 L558 8.0 L557 8.2 L556 8.2 L555 7.9 L554 8.0 L553 7.9 L552 8.0 L552 8.1 L551 8.4 L550 8.4 L549 7.9 L548 8.1 L547 8.0 L546 8.0 L545 8.4 L544 8.2 L543 8.1 L542 8.5 L541 8.3 L540 8.3 L539 8.1 L538 8.2 L537 8.2 L536 8.1 L535 7.9 L534 8.0 L533 8.7 L532 8.5 L531 8.8 L530 8.5 L529 8.1 L528 8.3 L527 8.1 L526 8.5 L525 8.3 L524 8.4 L523 8.2 L522 8.8 L521 8.0 L520 8.1 L519 8.3 L518 8.4 L517 8.2 L516 8.1 L515 8.3 L514 8.1 L513 8.2 L512 8.1 L511 8.8 L510 8.4 L509 8.8 L508 8.1 L507 8.1 L506 8.3 L505 8.5 L504 8.9 L503 8.5 L502 8.1 L501 8.4 L500 8.7 L499 8.1 L498 8.0 L497 8.8 L496 8.4 L495 8.6 L494 8.8 L493 8.6 L492 8.2 L491 8.2 L490 8.6 L489 8.6 L488 8.3 L487 8.4 L486 8.3 L485 8.3 L484 8.9 L483 8.4 L482 8.1 L481 8.2 L480 8.0 L479 8.2 L478 8.2 L477 8.6 L476 8.6 L475 8.3 L474 8.6 L473 8.1 L472 8.8 L471 8.4 L470 8.6 L469 8.6 L468 8.8 L467 8.3 L466 8.8 L465 8.1 L464 8.4 L463 8.2 L462 8.3 L461 8.2 L460 8.3 L459 8.2 L458 8.2 L457 8.8 L456 8.4 L455 8.4 L454 8.2 L453 8.2 L452 8.1 L451 8.1 L450 8.1 L449 8.2 L448 8.4 L447 8.1 L446 7.8 L445 8.3 L444 8.1 L443 8.4 L442 7.9 L441 8.0 L440 7.9 L439 7.9 L438 8.1 L437 8.3 L436 8.2 L435 8.2 L434 8.1 L433 8.3 L432 8.1 L431 7.6 L430 7.6 L430 7.7 L429 7.6 L428 7.7 L427 7.6 L426 7.7 L425 7.6 L424 7.6 L423 7.6 L422 7.7 L421 7.6 L420 7.7 L419 7.7 L418 7.8 L417 7.6 L416 7.6 L415 7.7 L414 7.8 L413 7.6 L412 7.6 L411 7.7 L410 7.6 L409 7.9 L408 7.8 L407 7.9 L406 8.0 L405 7.8 L404 8.0 L403 7.8 L402 7.8 L401 8.2 L400 7.9 L399 8.3 L398 8.3 L397 8.0 L396 8.4 L395 8.2 L394 8.1 L393 8.1 L392 8.4 L391 8.5 L390 8.2 L389 8.4 L388 8.2 L387 8.4 L386 8.4 L385 8.7 L384 8.3 L383 8.4 L382 8.1 L381 8.5 L380 8.0 L379 8.2 L378 8.7 L377 8.3 L376 8.4 L375 8.2 L374 8.3 L373 8.1 L372 8.6 L371 8.5 L370 8.4 L369 8.0 L368 8.0 L367 8.2 L366 8.0 L365 8.0 L364 8.4 L363 8.1 L362 8.2 L361 8.2 L360 7.9 L359 8.4 L358 8.0 L357 7.9 L356 8.2 L355 8.4 L354 8.2 L353 8.0 L352 8.3 L351 7.9 L350 8.2 L349 8.4 L348 8.7 L347 8.5 L346 8.0 L345 8.5 L344 8.6 L343 8.6 L342 8.1 L341 8.0 L340 8.6 L339 8.4 L338 8.1 L337 8.2 L336 8.3 L335 8.4 L334 8.3 L333 8.1 L332 8.1 L331 8.1 L330 7.8 L329 7.9 L328 8.0 L327 8.1 L326 7.8 L325 8.1 L324 7.9 L323 7.8 L322 8.1 L321 7.9 L320 7.9 L319 8.1 L318 7.9 L317 8.0 L316 8.0 L315 8.0 L314 7.9 L313 8.1 L312 7.7 L311 8.0 L310 8.1 L310 8.1 L309 7.9 L308 7.8 L307 7.7 L306 8.0 L305 8.0 L304 7.9 L303 7.9 L302 7.9 L301 7.9 L300 7.9 L299 8.3 L298 8.2 L297 8.5 L296 8.0 L295 8.5 L294 8.4 L293 8.4 L292 8.3 L291 8.4 L290 8.2 L289 8.7 L288 8.1 L287 8.1 L286 8.1 L285 8.5 L284 8.6 L283 8.1 L282 8.3 L281 8.0 L280 8.6 L279 8.5 L278 8.2 L277 8.0 L276 8.1 L275 7.8 L274 8.0 L273 7.9 L272 8.0 L271 8.2 L270 7.9 L269 7.9 L268 8.0 L267 8.0 L266 7.8 L265 7.9 L264 8.0 L263 8.0 L262 7.8 L261 8.0 L260 7.8 L259 7.8 L258 7.8 L257 7.8 L256 8.0 L255 7.9 L254 7.7 L253 7.9 L252 7.9 L251 7.7 L250 7.7 L249 8.0 L248 7.8 L247 7.9 L246 8.0 L245 8.0 L244 7.9 L243 7.9 L242 7.7 L241 7.8 L240 7.9 L239 7.9 L238 7.8 L237 7.9 L236 8.0 L235 7.9 L234 7.8 L233 7.8 L232 7.7 L231 7.9 L230 7.7 L229 7.8 L228 7.9 L227 7.5 L226 7.5 L225 7.5 L224 7.5 L223 7.5 L222 7.6 L221 7.5 L220 7.7 L219 7.7 L218 7.7 L217 7.7 L216 7.6 L215 7.6 L214 7.6 L213 7.6 L212 7.6 L211 7.6 L210 7.6 L209 7.7 L208 7.6 L207 7.9 L206 8.0 L205 7.8 L204 8.1 L203 8.1 L202 8.0 L201 8.0 L200 8.5 L199 8.4 L198 8.5 L197 8.4 L196 8.3 L195 8.4 L194 8.4 L193 8.5 L192 8.1 L191 8.5 L190 8.5 L189 8.5 L188 8.3 L188 8.6 L187 8.6 L186 8.1 L185 8.3 L184 8.3 L183 8.6 L182 8.7 L181 8.5 L180 8.4 L179 8.4 L178 8.1 L177 8.4 L176 8.4 L175 8.3 L174 8.1 L173 8.4 L172 8.3 L171 8.4 L170 8.2 L169 8.3 L168 7.8 L167 7.9 L166 7.9 L165 8.3 L164 8.3 L163 8.5 L162 8.1 L161 8.4 L160 8.4 L159 8.2 L158 8.1 L157 8.4 L156 8.1 L155 8.4 L154 8.3 L153 8.4 L152 8.4 L151 8.4 L150 8.1 L149 8.5 L148 8.4 L147 8.1 L146 8.0 L145 8.1 L144 8.2 L143 8.3 L142 8.5 L141 8.6 L140 8.2 L139 8.0 L138 8.2 L137 8.1 L136 8.2 L135 8.4 L134 8.2 L133 8.2 L132 8.6 L131 8.5 L130 8.6 L129 8.2 L128 8.1 L127 8.5 L126 8.0 L125 8.2 L124 8.0 L123 8.4 L122 8.3 L121 8.5 L120 8.4 L119 8.0 L118 8.5 L117 8.2 L116 7.9 L115 8.5 L114 7.9 L113 8.2 L112 8.2 L111 8.5 L110 8.3 L109 8.1 L108 8.2 L107 8.3 L106 8.6 L105 7.9 L104 8.0 L103 8.6 L102 8.4 L101 8.0 L100 8.0 L99 8.0 L98 8.1 L97 8.1 L96 8.3 L95 8.2 L94 7.8 L93 7.8 L92 7.5 L91 7.6 L90 7.6 L89 7.9 L88 7.7 L87 8.0 L86 8.1 L85 8.2 L84 7.9 L83 8.3 L82 8.2 L81 8.1 L80 8.1 L79 8.4 L78 8.4 L77 8.3 L76 8.0 L75 8.4 L74 8.0 L73 7.9 L72 7.9 L71 8.2 L70 8.1 L69 8.3 L68 7.9 L68 8.4 L67 8.3 L66 7.9 L65 8.5 L64 7.9 L63 8.3 L62 8.2 L61 8.1 L60 8.2 L59 8.4 L58 8.0 L57 8.1 L56 8.3 L55 7.9 L54 8.2 L53 8.0 L52 7.9 L51 7.9 L50 8.0 L49 8.1 L48 8.0 L47 8.4 L46 8.4 L45 8.3 L44 8.4 L43 8.0 L42 8.3 L41 8.2 L40 8.4 L39 8.0 L38 8.4 L37 8.5 L36 8.0 L35 8.0 L34 8.4 L33 7.9 L32 7.9 L31 8.2 L30 7.9 L29 8.3 L28 8.0 L27 8.3 L26 8.4 L25 8.0 L24 8.0 L23 7.9 L22 8.2 L21 8.2 L20 8.0 L19 8.1 L18 7.9 L17 8.4 L16 8.3 L15 8.4 L14 8.1 L13 7.9 L12 8.4 L11 8.3 L10 8.4 L9 8.3 L8 8.3 L7 8.2 Z" fill="#3a5548"/>
<path d="M7 21.5 L7 20.1 L8 20.1 L9 20.3 L10 20.5 L11 20.6 L12 20.2 L13 20.3 L14 20.1 L15 20.4 L16 20.1 L17 20.4 L18 20.1 L19 20.1 L20 20.3 L21 20.3 L22 20.2 L23 20.5 L24 20.3 L25 20.1 L26 20.4 L27 20.1 L28 20.2 L29 20.1 L30 20.4 L31 20.6 L32 20.1 L33 20.1 L34 20.3 L35 20.6 L36 20.5 L37 20.2 L38 20.4 L39 20.0 L40 20.2 L41 20.5 L42 20.2 L43 20.4 L44 20.0 L45 20.0 L46 20.3 L47 20.2 L48 20.2 L49 20.1 L50 20.0 L51 20.6 L52 20.4 L53 20.2 L54 20.4 L55 20.2 L56 20.5 L57 20.0 L58 20.3 L59 20.5 L60 20.2 L61 20.4 L62 20.5 L63 20.3 L64 20.5 L65 20.5 L66 20.0 L67 20.1 L68 20.6 L68 20.1 L69 20.6 L70 20.4 L71 20.0 L72 20.2 L73 20.4 L74 20.3 L75 20.3 L76 20.5 L77 19.9 L78 20.6 L79 20.3 L80 20.1 L81 20.3 L82 19.9 L83 20.4 L84 19.9 L85 20.1 L86 20.4 L87 20.4 L88 20.7 L89 20.6 L90 20.7 L91 20.9 L92 20.9 L93 20.7 L94 20.7 L95 20.7 L96 20.3 L97 20.4 L98 20.2 L99 20.0 L100 20.5 L101 20.6 L102 20.5 L103 20.2 L104 20.3 L105 20.4 L106 20.3 L107 19.9 L108 20.4 L109 20.3 L110 20.0 L111 20.1 L112 20.4 L113 20.2 L114 20.2 L115 20.5 L116 20.3 L117 20.4 L118 20.0 L119 20.3 L120 20.1 L121 19.9 L122 19.9 L123 20.3 L124 20.2 L125 20.4 L126 20.3 L127 20.2 L128 20.0 L129 19.9 L130 20.4 L131 20.6 L132 20.3 L133 20.5 L134 20.6 L135 20.0 L136 20.5 L137 20.1 L138 20.3 L139 19.9 L140 20.0 L141 20.5 L142 20.4 L143 19.9 L144 20.1 L145 20.3 L146 20.0 L147 20.0 L148 20.2 L149 20.2 L150 20.5 L151 20.3 L152 20.5 L153 20.1 L154 20.1 L155 20.5 L156 20.1 L157 20.5 L158 20.5 L159 20.1 L160 20.3 L161 19.9 L162 20.1 L163 20.1 L164 20.5 L165 20.0 L166 20.5 L167 20.6 L168 20.4 L169 20.1 L170 20.1 L171 20.4 L172 20.2 L173 20.2 L174 20.6 L175 20.1 L176 20.1 L177 20.4 L178 20.2 L179 20.4 L180 20.5 L181 20.2 L182 20.6 L183 20.2 L184 20.0 L185 20.5 L186 20.1 L187 20.6 L188 20.1 L188 20.5 L189 20.1 L190 20.4 L191 20.1 L192 20.6 L193 20.6 L194 20.1 L195 20.3 L196 20.3 L197 20.6 L198 20.5 L199 20.4 L200 20.6 L201 20.0 L202 20.3 L203 20.3 L204 20.5 L205 20.7 L206 20.8 L207 20.7 L208 20.9 L209 20.8 L210 20.8 L211 20.8 L212 20.9 L213 20.9 L214 20.8 L215 20.9 L216 20.8 L217 20.9 L218 20.9 L219 20.9 L220 20.8 L221 20.9 L222 21.0 L223 21.0 L224 20.9 L225 20.9 L226 20.9 L227 21.0 L228 21.0 L229 21.0 L230 20.9 L231 20.9 L232 20.9 L233 21.0 L234 21.0 L235 20.9 L236 20.9 L237 20.9 L238 20.9 L239 20.9 L240 20.9 L241 20.6 L242 20.6 L243 20.5 L244 20.7 L245 20.6 L246 20.5 L247 20.8 L248 20.6 L249 20.7 L250 20.8 L251 20.8 L252 20.5 L253 20.8 L254 20.5 L255 20.8 L256 20.7 L257 20.8 L258 20.6 L259 20.5 L260 20.7 L261 20.6 L262 20.5 L263 20.7 L264 20.6 L265 20.5 L266 20.5 L267 20.7 L268 20.5 L269 20.8 L270 20.8 L271 20.4 L272 20.8 L273 20.4 L274 20.5 L275 20.5 L276 20.3 L277 20.4 L278 20.6 L279 20.5 L280 20.6 L281 20.3 L282 20.3 L283 20.3 L284 20.6 L285 20.4 L286 20.6 L287 20.3 L288 20.1 L289 19.9 L290 20.1 L291 20.1 L292 20.0 L293 20.5 L294 20.2 L295 20.6 L296 20.3 L297 20.5 L298 20.4 L299 20.8 L300 20.4 L301 20.4 L302 20.6 L303 20.5 L304 20.8 L305 20.7 L306 20.8 L307 20.8 L308 20.8 L309 20.5 L310 20.8 L310 20.6 L311 20.7 L312 20.7 L313 20.6 L314 20.7 L315 20.4 L316 20.6 L317 20.6 L318 20.6 L319 20.6 L320 20.6 L321 20.7 L322 20.7 L323 20.5 L324 20.7 L325 20.6 L326 20.5 L327 20.6 L328 20.4 L329 20.5 L330 20.6 L331 20.7 L332 20.6 L333 20.2 L334 20.0 L335 20.2 L336 20.1 L337 20.0 L338 20.2 L339 20.0 L340 19.9 L341 20.4 L342 19.9 L343 19.9 L344 19.9 L345 20.3 L346 20.4 L347 20.4 L348 20.3 L349 19.9 L350 20.3 L351 20.7 L352 20.6 L353 20.7 L354 20.5 L355 20.4 L356 20.3 L357 20.7 L358 20.6 L359 20.7 L360 20.3 L361 20.4 L362 20.2 L363 19.9 L364 20.2 L365 20.0 L366 20.2 L367 20.3 L368 19.8 L369 19.9 L370 20.1 L371 19.9 L372 20.1 L373 20.0 L374 20.5 L375 20.5 L376 20.5 L377 20.1 L378 20.0 L379 20.4 L380 20.2 L381 20.5 L382 20.0 L383 20.0 L384 20.5 L385 19.8 L386 20.0 L387 20.4 L388 20.3 L389 20.4 L390 20.0 L391 19.8 L392 20.4 L393 20.4 L394 20.1 L395 19.9 L396 20.3 L397 20.5 L398 20.7 L399 20.5 L400 20.6 L401 20.4 L402 20.5 L403 20.5 L404 20.4 L405 20.6 L406 20.5 L407 20.8 L408 20.9 L409 20.6 L410 20.9 L411 20.7 L412 20.8 L413 20.9 L414 20.9 L415 20.8 L416 20.8 L417 20.8 L418 20.9 L419 20.7 L420 20.8 L421 20.7 L422 20.9 L423 20.7 L424 20.8 L425 20.8 L426 20.9 L427 20.8 L428 20.7 L429 20.9 L430 20.8 L430 21.0 L431 20.9 L432 19.9 L433 20.1 L434 20.2 L435 20.5 L436 20.5 L437 20.1 L438 20.0 L439 19.9 L440 20.0 L441 20.3 L442 20.4 L443 20.2 L444 20.3 L445 20.2 L446 20.0 L447 20.3 L448 19.9 L449 20.1 L450 20.5 L451 20.1 L452 20.1 L453 20.1 L454 20.5 L455 19.9 L456 20.2 L457 20.1 L458 20.4 L459 20.5 L460 20.5 L461 20.4 L462 20.3 L463 20.4 L464 20.5 L465 20.0 L466 20.0 L467 19.8 L468 20.4 L469 20.0 L470 20.1 L471 20.5 L472 19.8 L473 20.2 L474 20.4 L475 20.4 L476 19.8 L477 20.3 L478 20.2 L479 20.1 L480 20.2 L481 20.0 L482 20.5 L483 20.2 L484 20.1 L485 20.0 L486 20.0 L487 20.3 L488 20.0 L489 19.7 L490 20.1 L491 20.0 L492 19.8 L493 20.3 L494 20.3 L495 19.7 L496 20.3 L497 20.2 L498 20.2 L499 19.7 L500 20.1 L501 19.8 L502 20.4 L503 20.3 L504 20.0 L505 20.2 L506 20.0 L507 20.1 L508 20.4 L509 20.4 L510 20.1 L511 20.1 L512 20.4 L513 20.3 L514 20.5 L515 20.3 L516 20.2 L517 20.2 L518 20.0 L519 19.8 L520 19.9 L521 19.9 L522 20.3 L523 20.1 L524 19.9 L525 19.8 L526 20.3 L527 20.5 L528 20.5 L529 20.1 L530 19.8 L531 20.4 L532 19.8 L533 20.0 L534 20.2 L535 20.2 L536 20.7 L537 20.1 L538 20.5 L539 20.5 L540 20.4 L541 20.3 L542 20.6 L543 20.4 L544 20.5 L545 20.5 L546 20.6 L547 20.6 L548 20.5 L549 20.4 L550 20.4 L551 20.2 L552 20.2 L552 20.3 L553 20.4 L554 20.2 L555 20.5 L556 20.5 L557 20.5 L558 20.2 L559 20.5 L560 20.5 L561 20.4 L562 20.3 L563 20.2 L564 20.2 L565 20.2 L566 20.5 L567 20.0 L568 20.1 L569 20.4 L570 20.4 L571 20.3 L572 20.5 L573 20.2 L574 20.0 L575 20.4 L576 20.3 L577 20.5 L578 20.0 L579 20.4 L580 20.4 L581 20.2 L582 20.4 L583 20.0 L584 20.4 L585 20.2 L586 20.4 L587 20.2 L588 20.3 L589 20.6 L590 20.0 L591 20.5 L592 20.3 L593 20.2 L594 20.3 L595 20.4 L596 20.3 L597 20.0 L598 20.6 L599 20.1 L600 20.2 L601 20.3 L602 20.2 L603 20.2 L604 20.1 L605 20.0 L606 20.3 L607 20.4 L608 20.4 L609 20.0 L610 20.3 L611 20.6 L612 20.2 L613 20.5 L614 20.4 L615 20.2 L616 20.2 L617 20.3 L618 20.1 L619 20.2 L620 20.0 L621 20.1 L622 20.5 L623 20.1 L624 20.4 L625 20.0 L626 20.2 L627 20.4 L628 20.5 L629 20.1 L630 20.4 L631 20.6 L632 20.1 L633 20.5 L634 20.6 L635 20.6 L636 20.3 L637 20.5 L638 20.6 L639 20.2 L640 20.5 L641 20.6 L642 20.2 L643 20.7 L644 20.7 L645 20.6 L646 20.2 L647 20.5 L648 20.5 L649 20.5 L650 20.5 L651 20.3 L652 20.4 L653 20.6 L654 20.6 L655 20.3 L656 20.4 L657 20.4 L658 20.6 L659 20.2 L660 20.4 L661 20.2 L662 20.4 L663 20.4 L664 20.7 L665 20.2 L666 20.3 L667 20.7 L668 20.7 L669 20.4 L670 20.4 L671 20.6 L672 20.2 L672 20.7 L673 20.4 L674 20.5 L675 20.5 L676 20.4 L677 20.5 L678 20.3 L679 20.3 L680 20.7 L681 20.5 L682 20.4 L683 20.6 L684 20.4 L685 20.7 L686 20.7 L687 20.4 L688 20.6 L689 20.6 L690 20.5 L691 20.4 L692 20.4 L693 20.4 L694 20.5 L695 20.5 L696 20.3 L697 20.3 L698 20.2 L699 20.2 L700 20.4 L701 20.6 L702 20.3 L703 20.6 L704 20.6 L705 20.5 L706 20.7 L707 20.5 L708 20.6 L709 20.6 L710 20.5 L711 20.3 L712 20.4 L713 20.5 L714 20.3 L715 20.5 L716 20.5 L717 20.5 L718 20.6 L719 20.6 L720 20.2 L721 20.4 L722 20.4 L723 20.4 L724 20.4 L725 20.4 L726 20.7 L727 20.7 L728 20.4 L729 20.5 L730 20.7 L731 20.6 L732 20.7 L733 20.5 L734 20.6 L735 20.9 L736 20.8 L737 20.9 L738 20.5 L739 20.4 L740 19.9 L741 19.9 L742 20.4 L743 20.0 L744 20.5 L745 20.1 L746 20.5 L747 20.1 L748 20.2 L749 19.9 L750 20.2 L751 19.9 L752 20.4 L753 20.1 L754 20.4 L755 20.5 L756 19.9 L757 20.6 L758 20.3 L759 20.4 L760 20.4 L761 20.0 L762 20.0 L763 20.3 L764 20.2 L765 20.0 L766 20.5 L767 20.1 L768 20.0 L769 20.2 L770 20.2 L771 20.4 L772 20.5 L773 20.5 L774 20.3 L775 20.4 L776 20.0 L777 20.5 L778 20.5 L779 20.0 L780 20.3 L781 20.5 L782 20.0 L783 20.6 L784 20.3 L785 20.3 L786 20.2 L787 20.4 L788 19.9 L789 20.2 L790 20.3 L791 20.1 L792 20.3 L793 20.2 L794 20.2 L794 20.4 L795 20.0 L796 20.5 L797 19.9 L798 20.3 L799 20.2 L800 20.5 L801 20.2 L802 20.3 L803 20.1 L804 20.1 L805 20.5 L806 20.5 L807 19.9 L808 20.4 L809 20.1 L810 20.1 L811 20.0 L812 20.6 L813 20.1 L814 20.0 L815 20.6 L816 20.6 L817 20.0 L818 20.1 L819 20.1 L820 20.0 L821 20.1 L822 20.4 L823 20.5 L824 20.6 L825 20.1 L826 20.1 L827 19.9 L828 20.4 L829 20.5 L830 20.3 L831 19.9 L832 20.4 L833 20.0 L834 20.1 L835 20.0 L836 20.5 L837 20.0 L838 20.3 L839 20.1 L840 20.5 L841 20.4 L842 20.2 L843 20.4 L844 20.2 L845 20.5 L846 20.4 L847 20.1 L848 20.3 L849 19.9 L850 20.3 L851 20.4 L852 20.3 L853 20.1 L853 22.9 L852 22.7 L851 22.6 L850 22.7 L849 23.1 L848 22.7 L847 22.9 L846 22.6 L845 22.5 L844 22.8 L843 22.6 L842 22.8 L841 22.6 L840 22.5 L839 22.9 L838 22.7 L837 23.0 L836 22.5 L835 23.0 L834 22.9 L833 23.0 L832 22.6 L831 23.1 L830 22.7 L829 22.5 L828 22.6 L827 23.1 L826 22.9 L825 22.9 L824 22.4 L823 22.5 L822 22.6 L821 22.9 L820 23.0 L819 22.9 L818 22.9 L817 23.0 L816 22.4 L815 22.4 L814 23.0 L813 22.9 L812 22.4 L811 23.0 L810 22.9 L809 22.9 L808 22.6 L807 23.1 L806 22.5 L805 22.5 L804 22.9 L803 22.9 L802 22.7 L801 22.8 L800 22.5 L799 22.8 L798 22.7 L797 23.1 L796 22.5 L795 23.0 L794 22.6 L794 22.8 L793 22.8 L792 22.7 L791 22.9 L790 22.7 L789 22.8 L788 23.1 L787 22.6 L786 22.8 L785 22.7 L784 22.7 L783 22.4 L782 23.0 L781 22.5 L780 22.7 L779 23.0 L778 22.5 L777 22.5 L776 23.0 L775 22.6 L774 22.7 L773 22.5 L772 22.5 L771 22.6 L770 22.8 L769 22.8 L768 23.0 L767 22.9 L766 22.5 L765 23.0 L764 22.8 L763 22.7 L762 23.0 L761 23.0 L760 22.6 L759 22.6 L758 22.7 L757 22.4 L756 23.1 L755 22.5 L754 22.6 L753 22.9 L752 22.6 L751 23.1 L750 22.8 L749 23.1 L748 22.8 L747 22.9 L746 22.5 L745 22.9 L744 22.5 L743 23.0 L742 22.6 L741 23.1 L740 23.1 L739 22.6 L738 22.5 L737 22.1 L736 22.2 L735 22.1 L734 22.4 L733 22.5 L732 22.3 L731 22.4 L730 22.3 L729 22.5 L728 22.6 L727 22.3 L726 22.3 L725 22.6 L724 22.6 L723 22.6 L722 22.6 L721 22.6 L720 22.8 L719 22.4 L718 22.4 L717 22.5 L716 22.5 L715 22.5 L714 22.7 L713 22.5 L712 22.6 L711 22.7 L710 22.5 L709 22.4 L708 22.4 L707 22.5 L706 22.3 L705 22.5 L704 22.4 L703 22.4 L702 22.7 L701 22.4 L700 22.6 L699 22.8 L698 22.8 L697 22.7 L696 22.7 L695 22.5 L694 22.5 L693 22.6 L692 22.6 L691 22.6 L690 22.5 L689 22.4 L688 22.4 L687 22.6 L686 22.3 L685 22.3 L684 22.6 L683 22.4 L682 22.6 L681 22.5 L680 22.3 L679 22.7 L678 22.7 L677 22.5 L676 22.6 L675 22.5 L674 22.5 L673 22.6 L672 22.3 L672 22.8 L671 22.4 L670 22.6 L669 22.6 L668 22.3 L667 22.3 L666 22.7 L665 22.8 L664 22.3 L663 22.6 L662 22.6 L661 22.8 L660 22.6 L659 22.8 L658 22.4 L657 22.6 L656 22.6 L655 22.7 L654 22.4 L653 22.4 L652 22.6 L651 22.7 L650 22.5 L649 22.5 L648 22.5 L647 22.5 L646 22.8 L645 22.4 L644 22.3 L643 22.3 L642 22.8 L641 22.4 L640 22.5 L639 22.8 L638 22.4 L637 22.5 L636 22.7 L635 22.4 L634 22.4 L633 22.5 L632 22.9 L631 22.4 L630 22.6 L629 22.9 L628 22.5 L627 22.6 L626 22.8 L625 23.0 L624 22.6 L623 22.9 L622 22.5 L621 22.9 L620 23.0 L619 22.8 L618 22.9 L617 22.7 L616 22.8 L615 22.8 L614 22.6 L613 22.5 L612 22.8 L611 22.4 L610 22.7 L609 23.0 L608 22.6 L607 22.6 L606 22.7 L605 23.0 L604 22.9 L603 22.8 L602 22.8 L601 22.7 L600 22.8 L599 22.9 L598 22.4 L597 23.0 L596 22.7 L595 22.6 L594 22.7 L593 22.8 L592 22.7 L591 22.5 L590 23.0 L589 22.4 L588 22.7 L587 22.8 L586 22.6 L585 22.8 L584 22.6 L583 23.0 L582 22.6 L581 22.8 L580 22.6 L579 22.6 L578 23.0 L577 22.5 L576 22.7 L575 22.6 L574 23.0 L573 22.8 L572 22.5 L571 22.7 L570 22.6 L569 22.6 L568 22.9 L567 23.0 L566 22.5 L565 22.8 L564 22.8 L563 22.8 L562 22.7 L561 22.6 L560 22.5 L559 22.5 L558 22.8 L557 22.5 L556 22.5 L555 22.5 L554 22.8 L553 22.6 L552 22.7 L552 22.8 L551 22.8 L550 22.6 L549 22.6 L548 22.5 L547 22.4 L546 22.4 L545 22.5 L544 22.5 L543 22.6 L542 22.4 L541 22.7 L540 22.6 L539 22.5 L538 22.5 L537 22.9 L536 22.3 L535 22.8 L534 22.8 L533 23.0 L532 23.2 L531 22.6 L530 23.2 L529 22.9 L528 22.5 L527 22.5 L526 22.7 L525 23.2 L524 23.1 L523 22.9 L522 22.7 L521 23.1 L520 23.1 L519 23.2 L518 23.0 L517 22.8 L516 22.8 L515 22.7 L514 22.5 L513 22.7 L512 22.6 L511 22.9 L510 22.9 L509 22.6 L508 22.6 L507 22.9 L506 23.0 L505 22.8 L504 23.0 L503 22.7 L502 22.6 L501 23.2 L500 22.9 L499 23.3 L498 22.8 L497 22.8 L496 22.7 L495 23.3 L494 22.7 L493 22.7 L492 23.2 L491 23.0 L490 22.9 L489 23.3 L488 23.0 L487 22.7 L486 23.0 L485 23.0 L484 22.9 L483 22.8 L482 22.5 L481 23.0 L480 22.8 L479 22.9 L478 22.8 L477 22.7 L476 23.2 L475 22.6 L474 22.6 L473 22.8 L472 23.2 L471 22.5 L470 22.9 L469 23.0 L468 22.6 L467 23.2 L466 23.0 L465 23.0 L464 22.5 L463 22.6 L462 22.7 L461 22.6 L460 22.5 L459 22.5 L458 22.6 L457 22.9 L456 22.8 L455 23.1 L454 22.5 L453 22.9 L452 22.9 L451 22.9 L450 22.5 L449 22.9 L448 23.1 L447 22.7 L446 23.0 L445 22.8 L444 22.7 L443 22.8 L442 22.6 L441 22.7 L440 23.0 L439 23.1 L438 23.0 L437 22.9 L436 22.5 L435 22.5 L434 22.8 L433 22.9 L432 23.1 L431 22.1 L430 22.0 L430 22.2 L429 22.1 L428 22.3 L427 22.2 L426 22.1 L425 22.2 L424 22.2 L423 22.3 L422 22.1 L421 22.3 L420 22.2 L419 22.3 L418 22.1 L417 22.2 L416 22.2 L415 22.2 L414 22.1 L413 22.1 L412 22.2 L411 22.3 L410 22.1 L409 22.4 L408 22.1 L407 22.2 L406 22.5 L405 22.4 L404 22.6 L403 22.5 L402 22.5 L401 22.6 L400 22.4 L399 22.5 L398 22.3 L397 22.5 L396 22.7 L395 23.1 L394 22.9 L393 22.6 L392 22.6 L391 23.2 L390 23.0 L389 22.6 L388 22.7 L387 22.6 L386 23.0 L385 23.2 L384 22.5 L383 23.0 L382 23.0 L381 22.5 L380 22.8 L379 22.6 L378 23.0 L377 22.9 L376 22.5 L375 22.5 L374 22.5 L373 23.0 L372 22.9 L371 23.1 L370 22.9 L369 23.1 L368 23.2 L367 22.7 L366 22.8 L365 23.0 L364 22.8 L363 23.1 L362 22.8 L361 22.6 L360 22.7 L359 22.3 L358 22.4 L357 22.3 L356 22.7 L355 22.6 L354 22.5 L353 22.3 L352 22.4 L351 22.3 L350 22.7 L349 23.1 L348 22.7 L347 22.6 L346 22.6 L345 22.7 L344 23.1 L343 23.1 L342 23.1 L341 22.6 L340 23.1 L339 23.0 L338 22.8 L337 23.0 L336 22.9 L335 22.8 L334 23.0 L333 22.8 L332 22.4 L331 22.3 L330 22.4 L329 22.5 L328 22.6 L327 22.4 L326 22.5 L325 22.4 L324 22.3 L323 22.5 L322 22.3 L321 22.3 L320 22.4 L319 22.4 L318 22.4 L317 22.4 L316 22.4 L315 22.6 L314 22.3 L313 22.4 L312 22.3 L311 22.3 L310 22.4 L310 22.2 L309 22.5 L308 22.2 L307 22.2 L306 22.2 L305 22.3 L304 22.2 L303 22.5 L302 22.4 L301 22.6 L300 22.6 L299 22.2 L298 22.6 L297 22.5 L296 22.7 L295 22.4 L294 22.8 L293 22.5 L292 23.0 L291 22.9 L290 22.9 L289 23.1 L288 22.9 L287 22.7 L286 22.4 L285 22.6 L284 22.4 L283 22.7 L282 22.7 L281 22.7 L280 22.4 L279 22.5 L278 22.4 L277 22.6 L276 22.7 L275 22.5 L274 22.5 L273 22.6 L272 22.2 L271 22.6 L270 22.2 L269 22.2 L268 22.5 L267 22.3 L266 22.5 L265 22.5 L264 22.4 L263 22.3 L262 22.5 L261 22.4 L260 22.3 L259 22.5 L258 22.4 L257 22.2 L256 22.3 L255 22.2 L254 22.5 L253 22.2 L252 22.5 L251 22.2 L250 22.2 L249 22.3 L248 22.4 L247 22.2 L246 22.5 L245 22.4 L244 22.3 L243 22.5 L242 22.4 L241 22.4 L240 22.1 L239 22.1 L238 22.1 L237 22.1 L236 22.1 L235 22.1 L234 22.0 L233 22.0 L232 22.1 L231 22.1 L230 22.1 L229 22.0 L228 22.0 L227 22.0 L226 22.1 L225 22.1 L224 22.1 L223 22.0 L222 22.0 L221 22.1 L220 22.2 L219 22.1 L218 22.1 L217 22.1 L216 22.2 L215 22.1 L214 22.2 L213 22.1 L212 22.1 L211 22.2 L210 22.2 L209 22.2 L208 22.1 L207 22.3 L206 22.2 L205 22.3 L204 22.5 L203 22.7 L202 22.7 L201 23.0 L200 22.4 L199 22.6 L198 22.5 L197 22.4 L196 22.7 L195 22.7 L194 22.9 L193 22.4 L192 22.4 L191 22.9 L190 22.6 L189 22.9 L188 22.5 L188 22.9 L187 22.4 L186 22.9 L185 22.5 L184 23.0 L183 22.8 L182 22.4 L181 22.8 L180 22.5 L179 22.6 L178 22.8 L177 22.6 L176 22.9 L175 22.9 L174 22.4 L173 22.8 L172 22.8 L171 22.6 L170 22.9 L169 22.9 L168 22.6 L167 22.4 L166 22.5 L165 23.0 L164 22.5 L163 22.9 L162 22.9 L161 23.1 L160 22.7 L159 22.9 L158 22.5 L157 22.5 L156 22.9 L155 22.5 L154 22.9 L153 22.9 L152 22.5 L151 22.7 L150 22.5 L149 22.8 L148 22.8 L147 23.0 L146 23.0 L145 22.7 L144 22.9 L143 23.1 L142 22.6 L141 22.5 L140 23.0 L139 23.1 L138 22.7 L137 22.9 L136 22.5 L135 23.0 L134 22.4 L133 22.5 L132 22.7 L131 22.4 L130 22.6 L129 23.1 L128 23.0 L127 22.8 L126 22.7 L125 22.6 L124 22.8 L123 22.7 L122 23.1 L121 23.1 L120 22.9 L119 22.7 L118 23.0 L117 22.6 L116 22.7 L115 22.5 L114 22.8 L113 22.8 L112 22.6 L111 22.9 L110 23.0 L109 22.7 L108 22.6 L107 23.1 L106 22.7 L105 22.6 L104 22.7 L103 22.8 L102 22.5 L101 22.4 L100 22.5 L99 23.0 L98 22.8 L97 22.6 L96 22.7 L95 22.3 L94 22.3 L93 22.3 L92 22.1 L91 22.1 L90 22.3 L89 22.4 L88 22.3 L87 22.6 L86 22.6 L85 22.9 L84 23.1 L83 22.6 L82 23.1 L81 22.7 L80 22.9 L79 22.7 L78 22.4 L77 23.1 L76 22.5 L75 22.7 L74 22.7 L73 22.6 L72 22.8 L71 23.0 L70 22.6 L69 22.4 L68 22.9 L68 22.4 L67 22.9 L66 23.0 L65 22.5 L64 22.5 L63 22.7 L62 22.5 L61 22.6 L60 22.8 L59 22.5 L58 22.7 L57 23.0 L56 22.5 L55 22.8 L54 22.6 L53 22.8 L52 22.6 L51 22.4 L50 23.0 L49 22.9 L48 22.8 L47 22.8 L46 22.7 L45 23.0 L44 23.0 L43 22.6 L42 22.8 L41 22.5 L40 22.8 L39 23.0 L38 22.6 L37 22.8 L36 22.5 L35 22.4 L34 22.7 L33 22.9 L32 22.9 L31 22.4 L30 22.6 L29 22.9 L28 22.8 L27 22.9 L26 22.6 L25 22.9 L24 22.7 L23 22.5 L22 22.8 L21 22.7 L20 22.7 L19 22.9 L18 22.9 L17 22.6 L16 22.9 L15 22.6 L14 22.9 L13 22.7 L12 22.8 L11 22.4 L10 22.5 L9 22.7 L8 22.9 L7 22.9 Z" fill="#3a5548"/>
<rect x="0" y="2" width="7" height="26" rx="2.5" fill="#5c5c5c"/><rect x="2" y="5" width="1" height="20" fill="#3a3a3a"/><rect x="4" y="5" width="1" height="20" fill="#3a3a3a"/>
<rect x="855" y="2" width="7" height="26" rx="2.5" fill="#5c5c5c"/><rect x="857" y="5" width="1" height="20" fill="#3a3a3a"/><rect x="859" y="5" width="1" height="20" fill="#3a3a3a"/>
</svg>
<svg style="left:1295px;top:84px" width="19" height="19"><g fill="none" stroke="#4e4e4e" stroke-width="1.2"><circle cx="9.5" cy="9.5" r="3.8"/><path d="M7.5 9.5H11.5"/><path d="M12.3 12.3L16 16" stroke-width="1.6"/></g><path d="M9.5 1L11.5 3.5H7.5Z M9.5 18L7.5 15.5H11.5Z M1 9.5L3.5 7.5V11.5Z M18 9.5L15.5 7.5V11.5Z" fill="#454545"/></svg>
<svg style="left:1326px;top:87px" width="15" height="14"><rect x="0.5" y="0.5" width="13" height="12" rx="1" fill="#2a2a2a" stroke="#c4c4c4"/><rect x="1" y="3" width="12" height="3" fill="#444"/><rect x="1" y="9" width="12" height="3" fill="#444"/><path d="M1 2.5H13M1 6.5H13M1 8.5H13" stroke="#c4c4c4" stroke-width="1"/></svg>
<div class="a" style="left:1291px;top:127px;width:21px;height:20px;background:#171717;border:1px solid #2e2e2e;border-radius:3px"></div>
<svg style="left:1295px;top:130px" width="13" height="14"><path d="M0.5 13V6.5A6 6 0 0 1 12.5 6.5V13H8V6.5A1.5 1.5 0 0 0 5 6.5V13Z" fill="#3b98f0"/><rect x="0.5" y="9" width="4.5" height="1.5" fill="#0a3a80"/><rect x="8" y="9" width="4.5" height="1.5" fill="#0a3a80"/><rect x="0.5" y="11.5" width="4.5" height="1.5" fill="#9ccaf8"/><rect x="8" y="11.5" width="4.5" height="1.5" fill="#9ccaf8"/></svg>
<svg style="left:1318px;top:130px" width="9" height="15"><path d="M0 0H8V5L6 6.5H2L0 5Z" fill="#c8c8c8"/><rect x="3.5" y="5" width="2" height="9" fill="#9a9a9a"/></svg>
<div class="a" style="left:1284px;top:150px;width:74px;height:203px;border-top:1px solid #0a0a0a;border-right:1px solid #0a0a0a;background:#232323"></div>
<div class="a" style="left:1284px;top:250px;width:73px;height:1px;background:#0a0a0a"></div>
<svg style="left:1284px;top:150px" width="8" height="100">
<rect x="0" y="3" width="2" height="1" fill="#9a9a9a"/>
<rect x="0" y="7" width="2" height="1" fill="#9a9a9a"/>
<rect x="0" y="11" width="2" height="1" fill="#9a9a9a"/>
<rect x="0" y="18" width="2" height="1" fill="#9a9a9a"/>
<rect x="0" y="22" width="2" height="1" fill="#9a9a9a"/>
<rect x="0" y="26" width="2" height="1" fill="#9a9a9a"/>
<rect x="0" y="29" width="2" height="1" fill="#9a9a9a"/>
<rect x="0" y="36" width="2" height="1" fill="#9a9a9a"/>
<rect x="0" y="40" width="2" height="1" fill="#9a9a9a"/>
<rect x="0" y="44" width="2" height="1" fill="#9a9a9a"/>
<rect x="0" y="55" width="2" height="1" fill="#9a9a9a"/>
<rect x="0" y="60" width="2" height="1" fill="#9a9a9a"/>
<rect x="0" y="70" width="2" height="1" fill="#9a9a9a"/>
<rect x="0" y="75" width="2" height="1" fill="#9a9a9a"/>
<rect x="0" y="79" width="2" height="1" fill="#9a9a9a"/>
<rect x="0" y="83" width="2" height="1" fill="#9a9a9a"/>
<rect x="0" y="88" width="2" height="1" fill="#9a9a9a"/>
<rect x="0" y="92" width="2" height="1" fill="#9a9a9a"/>
<rect x="0" y="97" width="2" height="1" fill="#9a9a9a"/>
<rect x="0" y="15" width="4" height="1" fill="#a8a8a8"/>
<rect x="0" y="32" width="4" height="1" fill="#a8a8a8"/>
<rect x="0" y="50" width="4" height="1" fill="#a8a8a8"/>
<rect x="0" y="68" width="4" height="1" fill="#a8a8a8"/>
<rect x="0" y="85" width="4" height="1" fill="#a8a8a8"/>
</svg>
<div class="a" style="left:1292px;top:154px;font-size:11px;line-height:13px;color:#a0a0a0;">dB</div>
<div class="a" style="left:1292px;top:175px;font-size:11px;line-height:13px;color:#a0a0a0;">-9</div>
<div class="a" style="left:1292px;top:194px;font-size:11px;line-height:13px;color:#a0a0a0;">-∞</div>
<div class="a" style="left:1292px;top:211px;font-size:11px;line-height:13px;color:#a0a0a0;">-9</div>
<div class="a" style="left:1292px;top:228px;font-size:11px;line-height:13px;color:#a0a0a0;">-3</div>
<svg style="left:1284px;top:250px" width="8" height="100">
<rect x="0" y="3" width="2" height="1" fill="#9a9a9a"/>
<rect x="0" y="7" width="2" height="1" fill="#9a9a9a"/>
<rect x="0" y="11" width="2" height="1" fill="#9a9a9a"/>
<rect x="0" y="18" width="2" height="1" fill="#9a9a9a"/>
<rect x="0" y="22" width="2" height="1" fill="#9a9a9a"/>
<rect x="0" y="26" width="2" height="1" fill="#9a9a9a"/>
<rect x="0" y="29" width="2" height="1" fill="#9a9a9a"/>
<rect x="0" y="36" width="2" height="1" fill="#9a9a9a"/>
<rect x="0" y="40" width="2" height="1" fill="#9a9a9a"/>
<rect x="0" y="44" width="2" height="1" fill="#9a9a9a"/>
<rect x="0" y="55" width="2" height="1" fill="#9a9a9a"/>
<rect x="0" y="60" width="2" height="1" fill="#9a9a9a"/>
<rect x="0" y="70" width="2" height="1" fill="#9a9a9a"/>
<rect x="0" y="75" width="2" height="1" fill="#9a9a9a"/>
<rect x="0" y="79" width="2" height="1" fill="#9a9a9a"/>
<rect x="0" y="83" width="2" height="1" fill="#9a9a9a"/>
<rect x="0" y="88" width="2" height="1" fill="#9a9a9a"/>
<rect x="0" y="92" width="2" height="1" fill="#9a9a9a"/>
<rect x="0" y="97" width="2" height="1" fill="#9a9a9a"/>
<rect x="0" y="15" width="4" height="1" fill="#a8a8a8"/>
<rect x="0" y="32" width="4" height="1" fill="#a8a8a8"/>
<rect x="0" y="50" width="4" height="1" fill="#a8a8a8"/>
<rect x="0" y="68" width="4" height="1" fill="#a8a8a8"/>
<rect x="0" y="85" width="4" height="1" fill="#a8a8a8"/>
</svg>
<div class="a" style="left:1292px;top:254px;font-size:11px;line-height:13px;color:#a0a0a0;">dB</div>
<div class="a" style="left:1292px;top:275px;font-size:11px;line-height:13px;color:#a0a0a0;">-9</div>
<div class="a" style="left:1292px;top:294px;font-size:11px;line-height:13px;color:#a0a0a0;">-∞</div>
<div class="a" style="left:1292px;top:311px;font-size:11px;line-height:13px;color:#a0a0a0;">-9</div>
<div class="a" style="left:1292px;top:328px;font-size:11px;line-height:13px;color:#a0a0a0;">-3</div>
<div class="a" style="left:1333px;top:193px;width:21px;height:17px;background:#171717;border:1px solid #2b2b2b;border-radius:2px"></div>
<div class="a" style="left:1193.5px;width:300px;text-align:center;top:196px;font-size:11px;line-height:13px;color:#3d86e0;">L</div>
<div class="a" style="left:1333px;top:293px;width:21px;height:16px;background:#171717;border:1px solid #2b2b2b;border-radius:2px"></div>
<div class="a" style="left:1193.5px;width:300px;text-align:center;top:295px;font-size:11px;line-height:13px;color:#3d86e0;">R</div>
<div class="a" style="left:428px;top:353px;width:929px;height:9px;background:#2d2d2d"></div>
<svg style="left:1332px;top:355px" width="9" height="5"><path d="M0 0H8L4 4Z" fill="#8a8a8a"/></svg>
<div class="a" style="left:882px;top:356px;width:1px;height:1px;background:#888"></div>
<div class="a" style="left:882px;top:358px;width:1px;height:1px;background:#888"></div>
<div class="a" style="left:884px;top:356px;width:1px;height:1px;background:#888"></div>
<div class="a" style="left:884px;top:358px;width:1px;height:1px;background:#888"></div>
<div class="a" style="left:886px;top:356px;width:1px;height:1px;background:#888"></div>
<div class="a" style="left:886px;top:358px;width:1px;height:1px;background:#888"></div>
<div class="a" style="left:888px;top:356px;width:1px;height:1px;background:#888"></div>
<div class="a" style="left:888px;top:358px;width:1px;height:1px;background:#888"></div>
<div class="a" style="left:890px;top:356px;width:1px;height:1px;background:#888"></div>
<div class="a" style="left:890px;top:358px;width:1px;height:1px;background:#888"></div>
<div class="a" style="left:892px;top:356px;width:1px;height:1px;background:#888"></div>
<div class="a" style="left:892px;top:358px;width:1px;height:1px;background:#888"></div>
<div class="a" style="left:894px;top:356px;width:1px;height:1px;background:#888"></div>
<div class="a" style="left:894px;top:358px;width:1px;height:1px;background:#888"></div>
<div class="a" style="left:896px;top:356px;width:1px;height:1px;background:#888"></div>
<div class="a" style="left:896px;top:358px;width:1px;height:1px;background:#888"></div>
<div class="a" style="left:898px;top:356px;width:1px;height:1px;background:#888"></div>
<div class="a" style="left:898px;top:358px;width:1px;height:1px;background:#888"></div>
<div class="a" style="left:1284px;top:362px;width:74px;height:194px;background:#232323;border-right:1px solid #0a0a0a;border-bottom:1px solid #0a0a0a"></div>
<div class="a" style="left:1292px;top:364px;font-size:11px;line-height:13px;color:#a8a8a8;">Hz</div>
<div class="a" style="left:1292px;top:392px;font-size:11px;line-height:13px;color:#6a6a6a;">15k</div>
<div class="a" style="left:1292px;top:412px;font-size:11px;line-height:13px;color:#b0b0b0;">10k</div>
<div class="a" style="left:1284px;top:398px;width:4px;height:1px;background:#6a6a6a"></div>
<div class="a" style="left:1284px;top:418px;width:4px;height:1px;background:#a8a8a8"></div>
<div class="a" style="left:1284px;top:454px;width:4px;height:1px;background:#a8a8a8"></div>
<div class="a" style="left:1292px;top:461px;font-size:11px;line-height:13px;color:#a8a8a8;">Hz</div>
<div class="a" style="left:1292px;top:489px;font-size:11px;line-height:13px;color:#6a6a6a;">15k</div>
<div class="a" style="left:1292px;top:509px;font-size:11px;line-height:13px;color:#b0b0b0;">10k</div>
<div class="a" style="left:1284px;top:495px;width:4px;height:1px;background:#6a6a6a"></div>
<div class="a" style="left:1284px;top:515px;width:4px;height:1px;background:#a8a8a8"></div>
<div class="a" style="left:1284px;top:551px;width:4px;height:1px;background:#a8a8a8"></div>
<div class="a" style="left:422px;top:556px;width:862px;height:6px;background:#232323"></div>
<div class="a" style="left:422px;top:362px;width:6px;height:194px;background:#1e1e1e"></div>
<div class="a" style="left:427px;top:362px;width:1px;height:193px;background:#050505"></div>
<div class="a" style="left:428px;top:363px;width:1px;height:192px;background:#e8c8d0"></div>
<div class="a" style="left:428px;top:150px;width:1px;height:201px;background:#9a1010"></div>
<div class="a" style="left:428px;top:353px;width:1px;height:9px;background:#6a3030"></div>
<div class="a" style="left:1284px;top:458px;width:73px;height:1px;background:#0a0a0a"></div>
<svg style="left:429px;top:363px" width="854" height="192">
<defs><linearGradient id="gp0" gradientUnits="userSpaceOnUse" x1="0" y1="0" x2="0" y2="95"><stop offset="0" stop-color="#70567c" stop-opacity="0.35"/><stop offset="0.5" stop-color="#84509a" stop-opacity="0.75"/><stop offset="1" stop-color="#a04a92" stop-opacity="0.95"/></linearGradient><linearGradient id="gk0" gradientUnits="userSpaceOnUse" x1="0" y1="30" x2="0" y2="95"><stop offset="0" stop-color="#b84a8a" stop-opacity="0"/><stop offset="0.45" stop-color="#c84a7c" stop-opacity="0.85"/><stop offset="1" stop-color="#dc4c62"/></linearGradient><linearGradient id="gp1" gradientUnits="userSpaceOnUse" x1="0" y1="96" x2="0" y2="191"><stop offset="0" stop-color="#70567c" stop-opacity="0.35"/><stop offset="0.5" stop-color="#84509a" stop-opacity="0.75"/><stop offset="1" stop-color="#a04a92" stop-opacity="0.95"/></linearGradient><linearGradient id="gk1" gradientUnits="userSpaceOnUse" x1="0" y1="126" x2="0" y2="191"><stop offset="0" stop-color="#b84a8a" stop-opacity="0"/><stop offset="0.45" stop-color="#c84a7c" stop-opacity="0.85"/><stop offset="1" stop-color="#dc4c62"/></linearGradient></defs>
<rect x="0" y="0" width="854" height="95" fill="#5f5b66"/>
<path d="M0 95V56H2V37H3V51H4V35H5V24H7V41H8V1H10V2H11V47H12V51H13V56H14V44H16V24H18V50H19V60H21V59H22V58H23V29H25V56H26V26H28V65H30V12H31V47H33V40H35V8H36V15H38V28H39V28H41V67H42V56H44V21H46V42H48V1H49V19H50V51H52V58H53V28H54V21H55V12H56V13H57V38H58V58H59V37H61V35H62V20H64V62H65V19H66V64H68V69H70V18H71V21H72V70H73V65H74V17H75V2H76V26H78V6H79V33H81V62H83V43H84V21H85V74H86V37H88V27H90V42H92V35H93V1H94V62H95V58H96V66H97V50H99V31H101V23H102V7H103V54H104V11H106V24H107V45H108V15H110V1H112V21H113V70H114V55H116V44H118V32H120V55H121V1H122V66H123V1H125V42H126V1H128V66H129V1H130V6H131V63H133V56H135V71H137V42H139V68H141V72H143V71H145V59H147V44H148V26H149V21H151V35H152V56H154V30H155V63H157V74H159V20H161V76H162V75H164V13H165V24H167V5H169V19H171V57H173V59H174V32H175V1H177V55H179V46H181V4H183V61H184V6H186V62H188V21H190V76H191V10H192V11H194V53H195V44H196V39H198V33H200V57H201V21H202V3H203V9H204V65H205V2H206V29H207V17H209V55H211V42H213V16H215V11H217V31H218V58H220V70H221V38H222V80H223V62H225V30H227V37H229V3H230V17H231V10H232V16H233V43H234V21H236V25H238V1H239V3H241V47H243V1H245V1H247V65H248V17H249V23H250V1H252V42H254V8H256V7H257V44H258V1H259V1H260V34H261V9H262V16H263V67H264V15H265V53H266V12H268V71H269V59H270V71H272V47H273V13H275V54H276V43H277V32H278V10H279V15H280V58H281V49H283V26H284V63H285V63H287V53H288V41H290V1H292V35H293V18H294V20H295V33H297V75H298V77H300V79H302V29H304V33H306V1H307V76H308V17H309V60H310V17H311V56H313V32H314V20H315V13H317V33H319V26H320V42H322V57H324V54H325V50H326V61H328V43H330V28H332V12H333V40H334V41H335V20H336V55H338V5H339V50H341V7H343V33H344V15H346V40H348V68H349V54H350V73H352V7H354V61H356V27H357V16H358V16H359V1H361V1H362V30H363V30H364V1H365V12H366V10H367V59H369V1H370V61H371V58H373V1H374V8H376V19H377V39H378V58H380V14H382V61H383V63H384V52H386V34H388V68H389V2H390V49H391V14H393V6H395V13H397V64H398V60H400V31H402V21H403V95H404V84H405V25H406V84H407V60H408V26H410V89H411V51H412V87H413V55H414V69H415V79H416V17H417V75H418V40H419V24H421V36H423V32H424V68H425V33H426V65H428V82H430V49H432V13H434V17H435V14H436V1H437V18H438V15H439V1H440V6H441V14H442V10H443V29H445V1H446V1H447V1H449V29H451V21H452V7H454V11H455V22H457V49H458V1H459V43H460V15H462V17H463V1H464V38H465V34H466V14H467V21H469V53H470V23H472V27H474V1H475V19H477V20H478V37H479V1H480V14H481V50H482V42H484V28H485V1H486V24H487V48H488V7H490V28H491V20H492V8H494V1H496V48H498V51H499V50H501V14H502V52H504V1H505V31H506V36H507V1H508V2H509V36H511V1H513V1H514V45H516V46H518V16H519V25H521V48H522V1H523V1H524V1H525V55H526V17H527V1H528V1H529V20H530V32H531V51H533V33H534V1H536V16H537V50H538V5H539V1H540V47H541V1H542V37H544V1H545V24H546V45H547V3H549V1H550V47H551V1H553V19H554V13H556V1H557V43H559V2H561V30H562V1H563V40H564V1H565V63H567V1H568V55H569V36H571V31H573V1H575V52H577V10H578V15H579V64H580V53H581V19H583V5H585V3H586V1H587V25H589V20H590V1H591V11H593V44H594V12H596V19H597V16H598V3H600V51H602V49H603V50H604V28H605V1H607V34H608V2H609V7H611V1H613V4H615V1H617V21H618V42H620V1H621V43H622V1H624V24H626V1H627V1H629V1H631V67H632V43H633V22H635V35H636V27H638V51H640V18H641V61H642V6H643V56H645V9H646V30H647V16H648V1H649V34H651V1H653V13H655V40H656V45H658V19H660V1H661V1H663V1H665V3H666V54H668V53H670V38H672V1H673V51H674V1H675V29H677V41H678V33H680V45H682V29H684V17H685V16H687V47H688V9H690V46H692V26H694V1H696V1H697V1H699V19H701V11H703V38H705V46H707V1H708V18H709V52H710V40H711V1H712V1H713V7H714V36H716V1H718V1H720V40H721V1H722V6H723V17H724V10H726V54H728V1H729V1H730V25H732V80H734V75H735V29H736V73H737V62H739V82H740V17H742V65H743V34H744V28H745V32H746V31H748V43H749V13H751V48H752V1H754V1H755V47H757V33H759V1H761V53H762V1H763V3H764V1H765V53H766V1H768V36H770V55H771V1H772V62H774V11H775V20H776V38H777V8H778V21H780V1H781V1H782V45H783V1H784V16H786V43H787V29H788V15H789V9H790V3H791V1H792V15H794V47H795V1H796V11H797V20H798V43H799V46H800V64H802V30H804V15H805V1H806V60H807V6H808V5H810V1H811V4H812V8H814V24H816V21H817V32H818V38H820V8H822V7H824V21H825V47H827V1H828V1H830V6H832V15H834V1H835V4H836V1H838V37H839V17H840V37H841V55H843V65H845V48H847V44H849V36H851V2H853V95Z" fill="#8a4e9a" fill-opacity="0.25"/>
<path d="M0 95V54H2V22H3V44H4V34H5V37H7V13H8V55H10V66H11V26H12V50H13V40H14V41H16V25H18V62H19V49H21V42H22V69H23V68H25V29H26V60H28V45H30V69H31V63H33V25H35V49H36V50H38V70H39V73H41V32H42V35H44V70H46V69H48V40H49V67H50V48H52V77H53V38H54V22H55V41H56V18H57V68H58V20H59V52H61V41H62V57H64V61H65V19H66V38H68V72H70V49H71V71H72V67H73V62H74V31H75V61H76V49H78V69H79V64H81V79H83V54H84V57H85V74H86V66H88V85H90V84H92V38H93V36H94V25H95V31H96V58H97V61H99V34H101V24H102V36H103V63H104V61H106V17H107V52H108V42H110V65H112V44H113V56H114V57H116V59H118V41H120V43H121V24H122V48H123V37H125V30H126V21H128V47H129V25H130V18H131V30H133V48H135V29H137V34H139V68H141V48H143V83H145V61H147V30H148V59H149V44H151V60H152V40H154V26H155V74H157V66H159V82H161V59H162V75H164V49H165V31H167V28H169V28H171V75H173V34H174V40H175V55H177V24H179V26H181V56H183V77H184V23H186V60H188V58H190V76H191V29H192V25H194V71H195V48H196V51H198V54H200V30H201V63H202V66H203V28H204V24H205V42H206V11H207V34H209V17H211V71H213V41H215V59H217V39H218V31H220V86H221V70H222V75H223V45H225V30H227V34H229V33H230V67H231V63H232V5H233V69H234V32H236V35H238V33H239V14H241V20H243V38H245V62H247V55H248V37H249V25H250V51H252V66H254V77H256V64H257V31H258V62H259V40H260V74H261V39H262V56H263V79H264V47H265V56H266V54H268V56H269V68H270V39H272V72H273V53H275V15H276V53H277V74H278V52H279V40H280V38H281V17H283V36H284V64H285V27H287V65H288V66H290V47H292V78H293V28H294V50H295V40H297V76H298V79H300V87H302V40H304V30H306V29H307V31H308V70H309V77H310V61H311V26H313V31H314V53H315V59H317V91H319V59H320V72H322V47H324V76H325V75H326V47H328V90H330V41H332V53H333V60H334V39H335V22H336V60H338V56H339V37H341V81H343V38H344V42H346V65H348V64H349V60H350V23H352V30H354V22H356V37H357V65H358V37H359V35H361V56H362V40H363V34H364V30H365V53H366V30H367V43H369V55H370V44H371V26H373V35H374V49H376V21H377V67H378V39H380V22H382V12H383V29H384V32H386V37H388V43H389V39H390V57H391V43H393V49H395V47H397V27H398V47H400V20H402V54H403V93H404V83H405V89H406V84H407V68H408V78H410V77H411V60H412V54H413V75H414V92H415V84H416V56H417V73H418V94H419V60H421V86H423V57H424V54H425V69H426V92H428V56H430V45H432V36H434V14H435V41H436V38H437V3H438V36H439V4H440V11H441V28H442V9H443V16H445V12H446V59H447V49H449V1H451V7H452V22H454V15H455V13H457V15H458V3H459V29H460V8H462V30H463V51H464V45H465V60H466V24H467V29H469V15H470V67H472V54H474V36H475V49H477V58H478V51H479V3H480V38H481V35H482V50H484V57H485V9H486V34H487V44H488V5H490V1H491V48H492V2H494V20H496V36H498V2H499V10H501V36H502V42H504V37H505V34H506V48H507V56H508V20H509V3H511V21H513V11H514V1H516V9H518V57H519V26H521V50H522V15H523V20H524V16H525V51H526V1H527V36H528V33H529V11H530V30H531V25H533V36H534V13H536V14H537V51H538V11H539V57H540V5H541V26H542V27H544V50H545V18H546V53H547V38H549V29H550V7H551V33H553V66H554V14H556V21H557V44H559V55H561V15H562V46H563V38H564V9H565V68H567V34H568V50H569V68H571V26H573V9H575V57H577V26H578V34H579V31H580V30H581V11H583V26H585V54H586V22H587V36H589V51H590V5H591V23H593V13H594V14H596V41H597V12H598V55H600V55H602V43H603V47H604V37H605V39H607V14H608V52H609V8H611V56H613V15H615V22H617V24H618V42H620V36H621V46H622V1H624V46H626V5H627V4H629V22H631V82H632V37H633V62H635V87H636V76H638V35H640V64H641V36H642V24H643V63H645V47H646V15H647V40H648V15H649V67H651V53H653V20H655V14H656V55H658V39H660V34H661V15H663V52H665V63H666V62H668V40H670V15H672V10H673V48H674V45H675V6H677V10H678V24H680V27H682V58H684V38H685V13H687V50H688V47H690V7H692V17H694V33H696V37H697V41H699V48H701V3H703V47H705V59H707V10H708V46H709V29H710V52H711V44H712V6H713V11H714V49H716V35H718V44H720V8H721V38H722V53H723V19H724V33H726V15H728V33H729V11H730V33H732V81H734V94H735V85H736V45H737V60H739V45H740V88H742V43H743V36H744V50H745V38H746V33H748V13H749V27H751V70H752V21H754V20H755V17H757V16H759V34H761V28H762V28H763V65H764V59H765V68H766V19H768V58H770V62H771V21H772V31H774V56H775V30H776V58H777V61H778V29H780V23H781V42H782V20H783V58H784V4H786V62H787V33H788V41H789V56H790V54H791V22H792V36H794V13H795V3H796V63H797V34H798V32H799V51H800V38H802V26H804V13H805V29H806V50H807V23H808V38H810V35H811V56H812V67H814V24H816V16H817V29H818V21H820V10H822V44H824V54H825V32H827V46H828V45H830V51H832V18H834V56H835V23H836V31H838V47H839V52H840V30H841V40H843V27H845V67H847V7H849V40H851V73H853V95Z" fill="#8e4c9a" fill-opacity="0.3"/>
<path d="M0 95V52H2V63H3V35H4V54H5V37H7V31H8V62H10V58H11V64H12V54H13V76H14V45H16V41H18V51H19V56H21V58H22V75H23V41H25V60H26V68H28V69H30V44H31V53H33V45H35V50H36V56H38V84H39V77H41V76H42V68H44V63H46V81H48V40H49V69H50V52H52V80H53V34H54V69H55V43H56V58H57V69H58V34H59V60H61V54H62V45H64V68H65V74H66V41H68V61H70V74H71V63H72V64H73V83H74V48H75V58H76V69H78V71H79V60H81V71H83V57H84V52H85V62H86V60H88V93H90V80H92V44H93V66H94V71H95V54H96V51H97V49H99V40H101V75H102V74H103V49H104V52H106V70H107V53H108V50H110V68H112V50H113V63H114V71H116V40H118V41H120V68H121V50H122V41H123V57H125V53H126V67H128V63H129V55H130V30H131V65H133V51H135V82H137V73H139V55H141V57H143V54H145V72H147V70H148V78H149V83H151V62H152V75H154V57H155V78H157V79H159V71H161V66H162V55H164V68H165V46H167V66H169V74H171V66H173V62H174V63H175V37H177V52H179V52H181V63H183V76H184V69H186V80H188V50H190V58H191V56H192V46H194V53H195V67H196V47H198V60H200V47H201V73H202V53H203V80H204V59H205V39H206V61H207V78H209V60H211V82H213V71H215V58H217V69H218V79H220V70H221V89H222V95H223V88H225V78H227V67H229V47H230V94H231V52H232V45H233V56H234V42H236V69H238V75H239V57H241V71H243V39H245V51H247V64H248V66H249V73H250V59H252V59H254V83H256V55H257V80H258V75H259V78H260V46H261V58H262V79H263V64H264V65H265V66H266V92H268V90H269V60H270V73H272V61H273V71H275V51H276V70H277V73H278V66H279V67H280V49H281V52H283V61H284V64H285V70H287V62H288V76H290V59H292V57H293V64H294V43H295V74H297V61H298V55H300V63H302V55H304V82H306V65H307V80H308V68H309V50H310V44H311V71H313V52H314V77H315V68H317V79H319V66H320V59H322V79H324V85H325V79H326V79H328V78H330V57H332V85H333V50H334V53H335V53H336V52H338V78H339V60H341V60H343V37H344V47H346V57H348V59H349V43H350V65H352V70H354V71H356V63H357V71H358V54H359V36H361V47H362V29H363V62H364V33H365V62H366V79H367V49H369V62H370V73H371V60H373V53H374V49H376V70H377V80H378V74H380V48H382V51H383V45H384V66H386V50H388V42H389V58H390V66H391V64H393V53H395V58H397V50H398V47H400V54H402V88H403V95H404V80H405V92H406V70H407V95H408V95H410V91H411V94H412V65H413V67H414V94H415V95H416V95H417V91H418V78H419V83H421V95H423V91H424V86H425V95H426V89H428V94H430V55H432V43H434V47H435V38H436V26H437V43H438V31H439V50H440V51H441V47H442V42H443V32H445V27H446V62H447V37H449V20H451V53H452V42H454V20H455V30H457V38H458V51H459V28H460V34H462V62H463V64H464V35H465V36H466V24H467V65H469V39H470V40H472V32H474V64H475V53H477V42H478V59H479V30H480V64H481V68H482V34H484V47H485V25H486V57H487V53H488V25H490V39H491V20H492V23H494V34H496V45H498V41H499V33H501V46H502V59H504V50H505V64H506V51H507V62H508V45H509V58H511V26H513V57H514V26H516V56H518V61H519V46H521V62H522V33H523V52H524V29H525V41H526V34H527V25H528V33H529V45H530V40H531V57H533V42H534V26H536V50H537V38H538V32H539V51H540V44H541V66H542V38H544V42H545V62H546V61H547V49H549V34H550V64H551V44H553V44H554V61H556V38H557V74H559V45H561V36H562V57H563V43H564V47H565V53H567V40H568V50H569V46H571V43H573V28H575V56H577V46H578V42H579V51H580V53H581V38H583V43H585V44H586V59H587V61H589V55H590V58H591V42H593V57H594V45H596V48H597V32H598V44H600V37H602V34H603V55H604V25H605V48H607V52H608V56H609V28H611V58H613V51H615V48H617V46H618V27H620V27H621V35H622V41H624V47H626V34H627V46H629V58H631V95H632V82H633V66H635V64H636V66H638V27H640V40H641V65H642V33H643V38H645V21H646V53H647V37H648V55H649V60H651V39H653V68H655V32H656V61H658V42H660V52H661V52H663V63H665V61H666V44H668V43H670V68H672V45H673V42H674V43H675V31H677V36H678V38H680V47H682V36H684V44H685V61H687V55H688V34H690V57H692V43H694V65H696V27H697V50H699V41H701V27H703V38H705V47H707V27H708V67H709V28H710V55H711V44H712V29H713V57H714V51H716V31H718V36H720V61H721V40H722V64H723V40H724V35H726V45H728V21H729V57H730V52H732V89H734V88H735V72H736V72H737V95H739V76H740V90H742V77H743V79H744V67H745V74H746V33H748V41H749V60H751V54H752V37H754V27H755V45H757V64H759V51H761V40H762V28H763V57H764V66H765V46H766V44H768V49H770V47H771V64H772V52H774V38H775V34H776V60H777V47H778V60H780V66H781V69H782V48H783V52H784V56H786V55H787V46H788V37H789V72H790V27H791V62H792V48H794V64H795V41H796V40H797V51H798V39H799V63H800V44H802V61H804V29H805V38H806V53H807V60H808V61H810V28H811V57H812V44H814V55H816V58H817V58H818V28H820V49H822V30H824V53H825V32H827V51H828V23H830V56H832V28H834V47H835V36H836V40H838V39H839V47H840V36H841V42H843V45H845V40H847V29H849V53H851V60H853V95Z" fill="#9a4c98" fill-opacity="0.4"/>
<path d="M0 95V65H2V68H3V64H4V67H5V67H7V69H8V70H10V67H11V78H12V71H13V74H14V65H16V66H18V69H19V73H21V84H22V76H23V67H25V75H26V82H28V82H30V73H31V84H33V77H35V70H36V81H38V81H39V84H41V78H42V79H44V80H46V75H48V73H49V79H50V71H52V70H53V71H54V61H55V79H56V69H57V68H58V66H59V82H61V70H62V72H64V69H65V70H66V63H68V70H70V68H71V71H72V82H73V79H74V75H75V66H76V77H78V67H79V81H81V84H83V69H84V84H85V84H86V87H88V87H90V78H92V62H93V73H94V75H95V77H96V76H97V73H99V76H101V70H102V68H103V74H104V69H106V71H107V75H108V63H110V73H112V68H113V70H114V71H116V65H118V59H120V60H121V76H122V63H123V78H125V77H126V62H128V67H129V71H130V67H131V80H133V74H135V75H137V77H139V82H141V77H143V89H145V72H147V86H148V83H149V85H151V77H152V82H154V68H155V69H157V80H159V80H161V86H162V89H164V68H165V73H167V79H169V78H171V81H173V72H174V71H175V71H177V65H179V65H181V65H183V74H184V70H186V72H188V66H190V76H191V79H192V75H194V70H195V78H196V73H198V67H200V74H201V74H202V67H203V69H204V70H205V67H206V58H207V80H209V62H211V83H213V85H215V84H217V73H218V76H220V79H221V88H222V89H223V81H225V81H227V83H229V77H230V82H231V72H232V61H233V73H234V63H236V71H238V73H239V71H241V64H243V72H245V59H247V60H248V69H249V78H250V69H252V81H254V75H256V78H257V84H258V79H259V68H260V72H261V79H262V82H263V76H264V75H265V70H266V76H268V83H269V84H270V84H272V65H273V81H275V65H276V67H277V77H278V78H279V67H280V74H281V70H283V69H284V67H285V76H287V63H288V74H290V64H292V82H293V83H294V79H295V65H297V86H298V83H300V87H302V73H304V69H306V74H307V74H308V71H309V75H310V76H311V82H313V84H314V77H315V80H317V78H319V87H320V76H322V80H324V85H325V85H326V90H328V81H330V82H332V83H333V69H334V67H335V71H336V76H338V87H339V71H341V80H343V64H344V76H346V67H348V80H349V77H350V72H352V75H354V65H356V61H357V73H358V64H359V63H361V60H362V65H363V63H364V61H365V62H366V75H367V69H369V64H370V69H371V73H373V73H374V80H376V70H377V76H378V77H380V76H382V62H383V76H384V77H386V61H388V78H389V72H390V77H391V63H393V61H395V80H397V77H398V73H400V60H402V89H403V95H404V94H405V92H406V94H407V95H408V88H410V88H411V95H412V85H413V94H414V83H415V89H416V90H417V94H418V95H419V95H421V87H423V95H424V86H425V89H426V95H428V95H430V52H432V64H434V55H435V48H436V48H437V65H438V61H439V55H440V54H441V55H442V54H443V63H445V53H446V60H447V58H449V50H451V59H452V63H454V61H455V61H457V55H458V54H459V51H460V69H462V55H463V59H464V61H465V63H466V65H467V66H469V68H470V71H472V62H474V66H475V70H477V61H478V65H479V59H480V56H481V67H482V61H484V55H485V57H486V59H487V65H488V55H490V52H491V55H492V60H494V59H496V62H498V52H499V64H501V51H502V63H504V57H505V65H506V52H507V65H508V67H509V51H511V54H513V57H514V58H516V69H518V64H519V59H521V61H522V53H523V60H524V64H525V71H526V49H527V50H528V68H529V63H530V52H531V60H533V61H534V61H536V52H537V65H538V52H539V63H540V55H541V63H542V62H544V60H545V66H546V72H547V54H549V55H550V62H551V65H553V68H554V67H556V58H557V64H559V61H561V61H562V59H563V61H564V63H565V73H567V69H568V63H569V77H571V73H573V55H575V60H577V77H578V66H579V74H580V62H581V67H583V73H585V65H586V70H587V71H589V53H590V61H591V58H593V54H594V69H596V55H597V63H598V53H600V66H602V61H603V65H604V51H605V50H607V65H608V67H609V52H611V60H613V54H615V56H617V56H618V60H620V50H621V59H622V58H624V50H626V57H627V50H629V69H631V87H632V91H633V95H635V86H636V82H638V56H640V66H641V63H642V55H643V68H645V61H646V66H647V68H648V74H649V67H651V69H653V66H655V55H656V68H658V68H660V56H661V54H663V61H665V72H666V68H668V71H670V60H672V63H673V71H674V68H675V59H677V65H678V67H680V69H682V63H684V57H685V67H687V66H688V64H690V60H692V64H694V67H696V65H697V72H699V66H701V61H703V60H705V65H707V55H708V66H709V60H710V53H711V52H712V58H713V60H714V54H716V67H718V57H720V66H721V50H722V70H723V59H724V58H726V58H728V58H729V72H730V60H732V95H734V86H735V95H736V95H737V90H739V90H740V92H742V78H743V81H744V78H745V89H746V61H748V68H749V66H751V66H752V62H754V63H755V66H757V69H759V59H761V68H762V66H763V64H764V61H765V68H766V64H768V76H770V62H771V60H772V70H774V61H775V65H776V65H777V67H778V58H780V75H781V62H782V63H783V55H784V66H786V74H787V60H788V65H789V73H790V54H791V55H792V70H794V60H795V54H796V67H797V77H798V62H799V65H800V59H802V74H804V63H805V63H806V65H807V71H808V54H810V58H811V67H812V68H814V63H816V62H817V68H818V63H820V67H822V63H824V59H825V57H827V60H828V53H830V70H832V61H834V53H835V69H836V54H838V67H839V61H840V63H841V70H843V69H845V62H847V55H849V73H851V73H853V95Z" fill="#c44a80" fill-opacity="0.55"/>
<path d="M0 95V90H2V86H3V75H4V91H5V88H7V79H8V82H10V81H11V95H12V88H13V92H14V82H16V90H18V86H19V78H21V93H22V88H23V85H25V93H26V88H28V93H30V84H31V92H33V93H35V86H36V94H38V92H39V95H41V87H42V90H44V84H46V92H48V82H49V86H50V78H52V90H53V75H54V83H55V83H56V85H57V88H58V75H59V87H61V90H62V79H64V86H65V84H66V86H68V85H70V85H71V86H72V90H73V91H74V95H75V90H76V95H78V83H79V87H81V93H83V86H84V95H85V89H86V95H88V95H90V95H92V83H93V84H94V81H95V88H96V89H97V86H99V84H101V88H102V88H103V92H104V83H106V82H107V86H108V78H110V81H112V86H113V88H114V91H116V82H118V85H120V81H121V85H122V85H123V90H125V79H126V78H128V83H129V79H130V81H131V87H133V90H135V92H137V83H139V95H141V87H143V95H145V86H147V91H148V94H149V92H151V91H152V91H154V86H155V91H157V86H159V95H161V95H162V95H164V83H165V87H167V87H169V88H171V86H173V95H174V87H175V85H177V82H179V87H181V80H183V94H184V94H186V94H188V88H190V88H191V90H192V87H194V83H195V93H196V87H198V89H200V87H201V85H202V87H203V86H204V82H205V83H206V77H207V83H209V82H211V95H213V92H215V95H217V90H218V95H220V95H221V95H222V95H223V95H225V94H227V95H229V85H230V95H231V80H232V79H233V80H234V74H236V87H238V89H239V85H241V85H243V80H245V82H247V78H248V92H249V84H250V80H252V92H254V91H256V88H257V88H258V94H259V87H260V85H261V87H262V94H263V91H264V94H265V85H266V92H268V91H269V95H270V90H272V86H273V87H275V84H276V83H277V91H278V95H279V90H280V80H281V90H283V84H284V91H285V89H287V88H288V88H290V87H292V92H293V88H294V82H295V83H297V95H298V89H300V95H302V87H304V89H306V88H307V90H308V91H309V85H310V86H311V95H313V89H314V95H315V95H317V95H319V94H320V94H322V92H324V95H325V95H326V95H328V95H330V88H332V95H333V84H334V84H335V84H336V94H338V95H339V84H341V93H343V86H344V83H346V86H348V93H349V83H350V90H352V83H354V85H356V82H357V82H358V83H359V85H361V77H362V79H363V80H364V77H365V84H366V82H367V90H369V81H370V86H371V88H373V77H374V92H376V88H377V94H378V92H380V86H382V86H383V89H384V84H386V77H388V87H389V87H390V90H391V86H393V89H395V94H397V93H398V77H400V76H402V95H403V95H404V95H405V95H406V95H407V95H408V95H410V95H411V95H412V95H413V95H414V95H415V95H416V95H417V95H418V95H419V95H421V95H423V95H424V95H425V95H426V95H428V95H430V71H432V77H434V76H435V72H436V67H437V80H438V76H439V75H440V78H441V75H442V71H443V78H445V69H446V72H447V80H449V77H451V78H452V78H454V70H455V74H457V68H458V76H459V70H460V84H462V80H463V76H464V82H465V78H466V74H467V81H469V84H470V77H472V81H474V79H475V83H477V74H478V80H479V74H480V79H481V76H482V77H484V75H485V75H486V73H487V71H488V80H490V72H491V78H492V71H494V75H496V81H498V71H499V77H501V70H502V81H504V74H505V81H506V78H507V85H508V75H509V78H511V72H513V79H514V68H516V82H518V75H519V75H521V78H522V68H523V77H524V76H525V82H526V69H527V78H528V79H529V86H530V77H531V87H533V84H534V72H536V68H537V80H538V73H539V86H540V72H541V81H542V82H544V75H545V76H546V79H547V81H549V72H550V81H551V80H553V84H554V80H556V77H557V87H559V81H561V81H562V83H563V78H564V77H565V89H567V84H568V82H569V85H571V87H573V81H575V83H577V89H578V81H579V78H580V81H581V79H583V86H585V82H586V78H587V83H589V81H590V72H591V81H593V70H594V84H596V79H597V82H598V71H600V74H602V70H603V74H604V76H605V68H607V76H608V79H609V78H611V82H613V74H615V73H617V67H618V67H620V74H621V77H622V70H624V75H626V70H627V71H629V78H631V95H632V95H633V95H635V95H636V95H638V80H640V79H641V84H642V73H643V78H645V75H646V73H647V87H648V85H649V78H651V86H653V83H655V74H656V74H658V86H660V74H661V83H663V76H665V81H666V82H668V86H670V77H672V79H673V85H674V86H675V72H677V83H678V78H680V80H682V79H684V81H685V86H687V77H688V76H690V69H692V79H694V81H696V79H697V84H699V81H701V73H703V80H705V83H707V73H708V81H709V72H710V72H711V79H712V74H713V73H714V77H716V75H718V78H720V72H721V78H722V86H723V75H724V72H726V81H728V70H729V82H730V77H732V95H734V95H735V95H736V95H737V95H739V95H740V95H742V95H743V91H744V95H745V89H746V78H748V82H749V74H751V82H752V75H754V74H755V72H757V83H759V81H761V85H762V73H763V78H764V78H765V84H766V72H768V80H770V76H771V80H772V77H774V77H775V82H776V77H777V81H778V79H780V84H781V88H782V85H783V73H784V78H786V81H787V85H788V73H789V79H790V81H791V76H792V80H794V86H795V77H796V83H797V81H798V80H799V84H800V83H802V88H804V79H805V76H806V84H807V81H808V83H810V73H811V83H812V84H814V79H816V75H817V73H818V74H820V74H822V83H824V83H825V75H827V81H828V79H830V84H832V70H834V77H835V78H836V72H838V85H839V80H840V80H841V83H843V83H845V81H847V74H849V78H851V87H853V95Z" fill="#d84a66" fill-opacity="0.6"/>
<path d="M0 95V95H2V94H3V91H4V92H5V91H7V92H8V92H10V92H11V95H12V95H13V95H14V95H16V95H18V93H19V95H21V95H22V95H23V93H25V95H26V95H28V95H30V95H31V95H33V95H35V95H36V95H38V95H39V95H41V95H42V94H44V95H46V95H48V92H49V93H50V95H52V94H53V90H54V92H55V94H56V92H57V95H58V94H59V95H61V93H62V91H64V95H65V92H66V93H68V95H70V95H71V95H72V95H73V95H74V95H75V95H76V95H78V95H79V95H81V95H83V95H84V95H85V95H86V95H88V95H90V95H92V94H93V94H94V95H95V95H96V95H97V95H99V91H101V95H102V95H103V95H104V95H106V92H107V95H108V90H110V95H112V95H113V95H114V95H116V92H118V95H120V95H121V95H122V95H123V95H125V95H126V95H128V95H129V94H130V87H131V95H133V95H135V95H137V95H139V95H141V95H143V95H145V95H147V95H148V95H149V95H151V95H152V95H154V95H155V95H157V95H159V95H161V95H162V95H164V95H165V95H167V95H169V95H171V95H173V95H174V95H175V94H177V95H179V93H181V95H183V95H184V95H186V95H188V92H190V95H191V95H192V93H194V95H195V95H196V95H198V91H200V95H201V95H202V95H203V95H204V95H205V90H206V93H207V93H209V93H211V95H213V95H215V95H217V95H218V95H220V95H221V95H222V95H223V95H225V95H227V95H229V95H230V95H231V95H232V91H233V94H234V89H236V93H238V95H239V93H241V92H243V92H245V93H247V93H248V94H249V95H250V93H252V95H254V95H256V95H257V95H258V94H259V95H260V95H261V95H262V95H263V95H264V95H265V95H266V95H268V95H269V95H270V95H272V95H273V95H275V95H276V95H277V92H278V95H279V94H280V95H281V95H283V95H284V95H285V95H287V95H288V95H290V93H292V95H293V95H294V94H295V93H297V95H298V95H300V95H302V95H304V95H306V95H307V95H308V95H309V95H310V94H311V95H313V95H314V95H315V95H317V95H319V95H320V95H322V95H324V95H325V95H326V95H328V95H330V95H332V95H333V95H334V95H335V94H336V95H338V95H339V95H341V95H343V91H344V92H346V94H348V95H349V95H350V95H352V95H354V95H356V90H357V94H358V95H359V93H361V95H362V92H363V94H364V91H365V94H366V95H367V95H369V91H370V95H371V95H373V92H374V95H376V94H377V95H378V95H380V95H382V89H383V93H384V94H386V93H388V94H389V94H390V94H391V90H393V93H395V95H397V95H398V94H400V95H402V95H403V95H404V95H405V95H406V95H407V95H408V95H410V95H411V95H412V95H413V95H414V95H415V95H416V95H417V95H418V95H419V95H421V95H423V95H424V95H425V95H426V95H428V95H430V90H432V91H434V85H435V87H436V87H437V87H438V89H439V83H440V89H441V92H442V87H443V87H445V84H446V93H447V91H449V86H451V92H452V92H454V85H455V91H457V85H458V85H459V91H460V93H462V88H463V91H464V93H465V95H466V84H467V89H469V92H470V93H472V89H474V90H475V95H477V89H478V91H479V86H480V91H481V93H482V86H484V89H485V90H486V90H487V85H488V89H490V87H491V86H492V83H494V90H496V93H498V85H499V93H501V87H502V89H504V85H505V92H506V84H507V94H508V93H509V85H511V85H513V86H514V86H516V89H518V93H519V87H521V90H522V85H523V89H524V89H525V88H526V88H527V84H528V90H529V90H530V90H531V95H533V90H534V86H536V84H537V90H538V91H539V88H540V90H541V91H542V93H544V89H545V92H546V94H547V91H549V89H550V89H551V92H553V91H554V90H556V92H557V93H559V91H561V93H562V91H563V92H564V87H565V93H567V88H568V89H569V95H571V95H573V89H575V91H577V95H578V89H579V93H580V92H581V90H583V92H585V91H586V91H587V91H589V85H590V86H591V89H593V90H594V90H596V86H597V90H598V89H600V90H602V85H603V90H604V86H605V83H607V92H608V93H609V89H611V91H613V91H615V84H617V83H618V87H620V82H621V85H622V89H624V83H626V88H627V85H629V94H631V95H632V95H633V95H635V95H636V95H638V88H640V93H641V94H642V93H643V92H645V84H646V91H647V89H648V91H649V95H651V94H653V95H655V94H656V88H658V89H660V90H661V89H663V91H665V95H666V94H668V95H670V90H672V91H673V92H674V94H675V86H677V92H678V93H680V90H682V86H684V91H685V95H687V92H688V87H690V84H692V83H694V88H696V90H697V92H699V93H701V86H703V95H705V95H707V87H708V91H709V86H710V89H711V91H712V86H713V89H714V89H716V92H718V90H720V89H721V86H722V90H723V89H724V86H726V93H728V85H729V90H730V89H732V95H734V95H735V95H736V95H737V95H739V95H740V95H742V95H743V95H744V95H745V95H746V91H748V92H749V88H751V95H752V92H754V87H755V90H757V90H759V95H761V92H762V89H763V92H764V90H765V95H766V85H768V95H770V90H771V92H772V91H774V88H775V93H776V88H777V94H778V90H780V92H781V92H782V92H783V90H784V87H786V94H787V90H788V89H789V95H790V86H791V92H792V95H794V93H795V91H796V91H797V95H798V95H799V95H800V93H802V95H804V90H805V87H806V93H807V94H808V91H810V90H811V93H812V95H814V94H816V89H817V87H818V89H820V90H822V89H824V94H825V90H827V87H828V86H830V90H832V87H834V92H835V89H836V88H838V95H839V90H840V91H841V90H843V93H845V95H847V91H849V92H851V95H853V95Z" fill="#e8584c" fill-opacity="0.5"/>
<path d="M1 87h1v1h-1ZM0 87h1v1h-1ZM2 84h1v1h-1ZM3 77h1v1h-1ZM3 92h1v1h-1ZM4 88h1v1h-1ZM5 88h1v1h-1ZM7 86h1v1h-1ZM7 85h1v1h-1ZM8 86h1v1h-1ZM10 92h1v1h-1ZM11 82h1v1h-1ZM13 86h1v1h-1ZM13 92h1v1h-1ZM14 82h1v1h-1ZM15 86h1v1h-1ZM20 84h1v1h-1ZM19 93h1v1h-1ZM22 90h1v1h-1ZM24 82h1v1h-1ZM26 91h1v1h-1ZM28 86h1v1h-1ZM35 85h1v1h-1ZM35 83h1v1h-1ZM37 85h1v1h-1ZM38 87h1v1h-1ZM41 84h1v1h-1ZM41 82h1v1h-1ZM42 91h1v1h-1ZM45 87h1v1h-1ZM46 91h1v1h-1ZM48 90h1v1h-1ZM49 80h1v1h-1ZM50 88h1v1h-1ZM51 88h1v1h-1ZM53 84h1v1h-1ZM53 88h1v1h-1ZM55 83h1v1h-1ZM56 91h1v1h-1ZM56 92h1v1h-1ZM57 91h1v1h-1ZM58 88h1v1h-1ZM58 71h1v1h-1ZM61 90h1v1h-1ZM63 86h1v1h-1ZM62 93h1v1h-1ZM65 86h1v1h-1ZM67 76h1v1h-1ZM66 82h1v1h-1ZM70 92h1v1h-1ZM73 89h1v1h-1ZM74 90h1v1h-1ZM78 85h1v1h-1ZM79 80h1v1h-1ZM85 88h1v1h-1ZM92 83h1v1h-1ZM92 88h1v1h-1ZM95 90h1v1h-1ZM96 79h1v1h-1ZM97 91h1v1h-1ZM99 89h1v1h-1ZM99 88h1v1h-1ZM103 89h1v1h-1ZM105 90h1v1h-1ZM106 87h1v1h-1ZM107 90h1v1h-1ZM109 84h1v1h-1ZM111 84h1v1h-1ZM111 85h1v1h-1ZM112 87h1v1h-1ZM113 89h1v1h-1ZM116 88h1v1h-1ZM118 92h1v1h-1ZM120 83h1v1h-1ZM121 91h1v1h-1ZM121 88h1v1h-1ZM122 84h1v1h-1ZM122 81h1v1h-1ZM123 92h1v1h-1ZM125 79h1v1h-1ZM127 88h1v1h-1ZM126 87h1v1h-1ZM129 91h1v1h-1ZM129 83h1v1h-1ZM130 79h1v1h-1ZM130 79h1v1h-1ZM130 88h1v1h-1ZM134 89h1v1h-1ZM136 91h1v1h-1ZM137 86h1v1h-1ZM140 91h1v1h-1ZM141 87h1v1h-1ZM144 84h1v1h-1ZM148 93h1v1h-1ZM149 88h1v1h-1ZM152 86h1v1h-1ZM154 93h1v1h-1ZM155 87h1v1h-1ZM159 92h1v1h-1ZM164 90h1v1h-1ZM168 86h1v1h-1ZM170 86h1v1h-1ZM173 89h1v1h-1ZM174 93h1v1h-1ZM174 84h1v1h-1ZM175 89h1v1h-1ZM177 84h1v1h-1ZM180 75h1v1h-1ZM181 90h1v1h-1ZM183 86h1v1h-1ZM185 92h1v1h-1ZM186 89h1v1h-1ZM189 83h1v1h-1ZM191 88h1v1h-1ZM194 82h1v1h-1ZM195 86h1v1h-1ZM197 90h1v1h-1ZM198 86h1v1h-1ZM201 84h1v1h-1ZM201 78h1v1h-1ZM202 83h1v1h-1ZM203 89h1v1h-1ZM204 88h1v1h-1ZM205 83h1v1h-1ZM206 85h1v1h-1ZM206 85h1v1h-1ZM208 88h1v1h-1ZM210 84h1v1h-1ZM215 87h1v1h-1ZM217 83h1v1h-1ZM224 93h1v1h-1ZM225 89h1v1h-1ZM229 91h1v1h-1ZM231 87h1v1h-1ZM232 87h1v1h-1ZM233 88h1v1h-1ZM234 93h1v1h-1ZM234 89h1v1h-1ZM235 89h1v1h-1ZM236 85h1v1h-1ZM238 89h1v1h-1ZM239 81h1v1h-1ZM242 88h1v1h-1ZM242 81h1v1h-1ZM244 86h1v1h-1ZM243 82h1v1h-1ZM246 88h1v1h-1ZM245 84h1v1h-1ZM247 91h1v1h-1ZM248 81h1v1h-1ZM251 91h1v1h-1ZM250 85h1v1h-1ZM252 88h1v1h-1ZM256 85h1v1h-1ZM258 88h1v1h-1ZM259 84h1v1h-1ZM259 84h1v1h-1ZM260 92h1v1h-1ZM262 83h1v1h-1ZM264 88h1v1h-1ZM269 86h1v1h-1ZM272 88h1v1h-1ZM272 85h1v1h-1ZM275 93h1v1h-1ZM275 87h1v1h-1ZM276 88h1v1h-1ZM277 89h1v1h-1ZM279 88h1v1h-1ZM280 93h1v1h-1ZM281 82h1v1h-1ZM283 88h1v1h-1ZM284 93h1v1h-1ZM287 91h1v1h-1ZM289 89h1v1h-1ZM296 91h1v1h-1ZM296 91h1v1h-1ZM298 80h1v1h-1ZM302 87h1v1h-1ZM304 89h1v1h-1ZM306 84h1v1h-1ZM307 86h1v1h-1ZM308 84h1v1h-1ZM309 84h1v1h-1ZM310 84h1v1h-1ZM310 87h1v1h-1ZM312 90h1v1h-1ZM313 83h1v1h-1ZM332 81h1v1h-1ZM333 83h1v1h-1ZM334 78h1v1h-1ZM334 83h1v1h-1ZM338 88h1v1h-1ZM340 92h1v1h-1ZM341 89h1v1h-1ZM343 88h1v1h-1ZM343 85h1v1h-1ZM344 92h1v1h-1ZM347 93h1v1h-1ZM348 85h1v1h-1ZM349 90h1v1h-1ZM351 87h1v1h-1ZM352 87h1v1h-1ZM353 82h1v1h-1ZM354 93h1v1h-1ZM357 87h1v1h-1ZM357 91h1v1h-1ZM358 80h1v1h-1ZM358 87h1v1h-1ZM359 88h1v1h-1ZM360 85h1v1h-1ZM361 78h1v1h-1ZM361 88h1v1h-1ZM362 89h1v1h-1ZM362 80h1v1h-1ZM363 78h1v1h-1ZM363 76h1v1h-1ZM365 85h1v1h-1ZM365 88h1v1h-1ZM366 87h1v1h-1ZM368 86h1v1h-1ZM368 87h1v1h-1ZM369 87h1v1h-1ZM369 84h1v1h-1ZM370 91h1v1h-1ZM370 88h1v1h-1ZM372 92h1v1h-1ZM373 86h1v1h-1ZM373 85h1v1h-1ZM376 82h1v1h-1ZM377 92h1v1h-1ZM380 87h1v1h-1ZM382 85h1v1h-1ZM382 88h1v1h-1ZM383 89h1v1h-1ZM383 84h1v1h-1ZM384 91h1v1h-1ZM386 76h1v1h-1ZM386 78h1v1h-1ZM390 85h1v1h-1ZM392 93h1v1h-1ZM393 87h1v1h-1ZM394 87h1v1h-1ZM396 89h1v1h-1ZM398 91h1v1h-1ZM399 80h1v1h-1ZM401 87h1v1h-1ZM401 78h1v1h-1ZM431 93h1v1h-1ZM430 89h1v1h-1ZM430 92h1v1h-1ZM432 93h1v1h-1ZM434 74h1v1h-1ZM434 79h1v1h-1ZM434 87h1v1h-1ZM434 89h1v1h-1ZM435 85h1v1h-1ZM435 88h1v1h-1ZM435 89h1v1h-1ZM436 88h1v1h-1ZM436 73h1v1h-1ZM436 84h1v1h-1ZM437 86h1v1h-1ZM437 89h1v1h-1ZM437 80h1v1h-1ZM437 67h1v1h-1ZM438 83h1v1h-1ZM438 90h1v1h-1ZM438 74h1v1h-1ZM439 90h1v1h-1ZM439 85h1v1h-1ZM439 88h1v1h-1ZM439 89h1v1h-1ZM440 79h1v1h-1ZM440 74h1v1h-1ZM440 73h1v1h-1ZM441 92h1v1h-1ZM441 89h1v1h-1ZM441 81h1v1h-1ZM442 91h1v1h-1ZM442 81h1v1h-1ZM443 89h1v1h-1ZM444 81h1v1h-1ZM443 72h1v1h-1ZM445 89h1v1h-1ZM445 78h1v1h-1ZM445 87h1v1h-1ZM445 88h1v1h-1ZM446 85h1v1h-1ZM446 89h1v1h-1ZM446 79h1v1h-1ZM448 82h1v1h-1ZM449 77h1v1h-1ZM450 85h1v1h-1ZM450 86h1v1h-1ZM451 88h1v1h-1ZM451 80h1v1h-1ZM453 78h1v1h-1ZM452 84h1v1h-1ZM452 75h1v1h-1ZM454 75h1v1h-1ZM454 76h1v1h-1ZM454 90h1v1h-1ZM455 85h1v1h-1ZM456 77h1v1h-1ZM457 76h1v1h-1ZM458 79h1v1h-1ZM458 93h1v1h-1ZM458 81h1v1h-1ZM459 84h1v1h-1ZM459 87h1v1h-1ZM459 89h1v1h-1ZM460 82h1v1h-1ZM460 83h1v1h-1ZM462 88h1v1h-1ZM462 81h1v1h-1ZM463 88h1v1h-1ZM463 87h1v1h-1ZM464 87h1v1h-1ZM466 91h1v1h-1ZM466 66h1v1h-1ZM466 82h1v1h-1ZM466 89h1v1h-1ZM468 89h1v1h-1ZM469 73h1v1h-1ZM469 84h1v1h-1ZM471 86h1v1h-1ZM470 86h1v1h-1ZM472 87h1v1h-1ZM472 91h1v1h-1ZM474 86h1v1h-1ZM474 89h1v1h-1ZM474 88h1v1h-1ZM477 75h1v1h-1ZM477 86h1v1h-1ZM477 86h1v1h-1ZM478 90h1v1h-1ZM479 91h1v1h-1ZM479 87h1v1h-1ZM479 81h1v1h-1ZM480 86h1v1h-1ZM480 84h1v1h-1ZM480 82h1v1h-1ZM481 85h1v1h-1ZM483 88h1v1h-1ZM482 75h1v1h-1ZM484 80h1v1h-1ZM484 77h1v1h-1ZM484 77h1v1h-1ZM485 89h1v1h-1ZM485 89h1v1h-1ZM485 84h1v1h-1ZM486 90h1v1h-1ZM486 77h1v1h-1ZM487 86h1v1h-1ZM487 79h1v1h-1ZM487 92h1v1h-1ZM488 93h1v1h-1ZM488 82h1v1h-1ZM489 80h1v1h-1ZM490 87h1v1h-1ZM490 89h1v1h-1ZM490 88h1v1h-1ZM490 79h1v1h-1ZM491 89h1v1h-1ZM493 75h1v1h-1ZM493 92h1v1h-1ZM493 90h1v1h-1ZM493 75h1v1h-1ZM495 83h1v1h-1ZM495 88h1v1h-1ZM494 85h1v1h-1ZM496 88h1v1h-1ZM497 87h1v1h-1ZM498 76h1v1h-1ZM500 91h1v1h-1ZM501 89h1v1h-1ZM501 89h1v1h-1ZM501 85h1v1h-1ZM503 93h1v1h-1ZM502 89h1v1h-1ZM504 82h1v1h-1ZM504 91h1v1h-1ZM504 83h1v1h-1ZM506 78h1v1h-1ZM506 85h1v1h-1ZM506 70h1v1h-1ZM507 77h1v1h-1ZM507 82h1v1h-1ZM508 86h1v1h-1ZM508 79h1v1h-1ZM509 91h1v1h-1ZM509 83h1v1h-1ZM510 83h1v1h-1ZM511 84h1v1h-1ZM512 89h1v1h-1ZM513 87h1v1h-1ZM513 79h1v1h-1ZM513 81h1v1h-1ZM515 84h1v1h-1ZM515 82h1v1h-1ZM517 70h1v1h-1ZM517 93h1v1h-1ZM520 87h1v1h-1ZM519 86h1v1h-1ZM519 74h1v1h-1ZM521 91h1v1h-1ZM522 85h1v1h-1ZM522 83h1v1h-1ZM523 89h1v1h-1ZM523 80h1v1h-1ZM523 83h1v1h-1ZM524 90h1v1h-1ZM524 75h1v1h-1ZM524 84h1v1h-1ZM525 81h1v1h-1ZM525 84h1v1h-1ZM526 89h1v1h-1ZM526 84h1v1h-1ZM526 89h1v1h-1ZM527 69h1v1h-1ZM527 83h1v1h-1ZM527 63h1v1h-1ZM528 89h1v1h-1ZM528 92h1v1h-1ZM529 79h1v1h-1ZM530 92h1v1h-1ZM530 78h1v1h-1ZM532 86h1v1h-1ZM533 88h1v1h-1ZM534 83h1v1h-1ZM534 83h1v1h-1ZM535 79h1v1h-1ZM536 89h1v1h-1ZM536 83h1v1h-1ZM537 77h1v1h-1ZM537 80h1v1h-1ZM537 88h1v1h-1ZM537 69h1v1h-1ZM538 76h1v1h-1ZM538 77h1v1h-1ZM538 81h1v1h-1ZM538 76h1v1h-1ZM539 75h1v1h-1ZM539 91h1v1h-1ZM540 84h1v1h-1ZM540 89h1v1h-1ZM540 89h1v1h-1ZM541 89h1v1h-1ZM541 89h1v1h-1ZM542 82h1v1h-1ZM543 87h1v1h-1ZM542 71h1v1h-1ZM544 84h1v1h-1ZM544 88h1v1h-1ZM544 86h1v1h-1ZM545 86h1v1h-1ZM545 83h1v1h-1ZM545 79h1v1h-1ZM546 83h1v1h-1ZM548 90h1v1h-1ZM548 77h1v1h-1ZM549 81h1v1h-1ZM549 89h1v1h-1ZM549 84h1v1h-1ZM550 88h1v1h-1ZM550 80h1v1h-1ZM550 88h1v1h-1ZM552 93h1v1h-1ZM553 86h1v1h-1ZM556 67h1v1h-1ZM556 89h1v1h-1ZM558 88h1v1h-1ZM558 84h1v1h-1ZM559 80h1v1h-1ZM559 87h1v1h-1ZM561 88h1v1h-1ZM561 91h1v1h-1ZM561 81h1v1h-1ZM562 88h1v1h-1ZM562 90h1v1h-1ZM562 79h1v1h-1ZM563 89h1v1h-1ZM563 84h1v1h-1ZM563 86h1v1h-1ZM564 88h1v1h-1ZM564 87h1v1h-1ZM567 86h1v1h-1ZM567 81h1v1h-1ZM568 81h1v1h-1ZM569 86h1v1h-1ZM572 84h1v1h-1ZM572 88h1v1h-1ZM573 92h1v1h-1ZM574 81h1v1h-1ZM575 87h1v1h-1ZM576 77h1v1h-1ZM577 81h1v1h-1ZM578 91h1v1h-1ZM578 87h1v1h-1ZM579 86h1v1h-1ZM580 93h1v1h-1ZM580 92h1v1h-1ZM581 85h1v1h-1ZM583 83h1v1h-1ZM585 84h1v1h-1ZM585 81h1v1h-1ZM585 77h1v1h-1ZM586 89h1v1h-1ZM588 91h1v1h-1ZM589 87h1v1h-1ZM590 88h1v1h-1ZM590 72h1v1h-1ZM590 84h1v1h-1ZM592 86h1v1h-1ZM592 84h1v1h-1ZM593 83h1v1h-1ZM593 78h1v1h-1ZM593 89h1v1h-1ZM593 88h1v1h-1ZM594 83h1v1h-1ZM594 87h1v1h-1ZM595 83h1v1h-1ZM596 86h1v1h-1ZM596 81h1v1h-1ZM596 88h1v1h-1ZM596 88h1v1h-1ZM597 87h1v1h-1ZM597 87h1v1h-1ZM598 76h1v1h-1ZM599 92h1v1h-1ZM600 76h1v1h-1ZM600 79h1v1h-1ZM600 85h1v1h-1ZM602 87h1v1h-1ZM602 88h1v1h-1ZM602 72h1v1h-1ZM603 82h1v1h-1ZM603 83h1v1h-1ZM604 89h1v1h-1ZM604 86h1v1h-1ZM604 89h1v1h-1ZM604 88h1v1h-1ZM605 92h1v1h-1ZM606 88h1v1h-1ZM607 82h1v1h-1ZM607 86h1v1h-1ZM607 87h1v1h-1ZM608 89h1v1h-1ZM608 85h1v1h-1ZM609 77h1v1h-1ZM610 86h1v1h-1ZM612 89h1v1h-1ZM612 81h1v1h-1ZM613 87h1v1h-1ZM613 93h1v1h-1ZM613 92h1v1h-1ZM615 85h1v1h-1ZM616 93h1v1h-1ZM616 84h1v1h-1ZM617 86h1v1h-1ZM617 90h1v1h-1ZM617 77h1v1h-1ZM617 83h1v1h-1ZM619 87h1v1h-1ZM619 89h1v1h-1ZM619 73h1v1h-1ZM619 81h1v1h-1ZM620 79h1v1h-1ZM620 70h1v1h-1ZM620 85h1v1h-1ZM621 90h1v1h-1ZM621 89h1v1h-1ZM621 82h1v1h-1ZM621 83h1v1h-1ZM623 77h1v1h-1ZM623 84h1v1h-1ZM622 91h1v1h-1ZM623 68h1v1h-1ZM624 91h1v1h-1ZM624 83h1v1h-1ZM624 93h1v1h-1ZM624 89h1v1h-1ZM626 82h1v1h-1ZM626 72h1v1h-1ZM628 81h1v1h-1ZM627 78h1v1h-1ZM627 93h1v1h-1ZM629 79h1v1h-1ZM638 89h1v1h-1ZM638 65h1v1h-1ZM639 81h1v1h-1ZM640 91h1v1h-1ZM640 87h1v1h-1ZM641 87h1v1h-1ZM641 81h1v1h-1ZM641 81h1v1h-1ZM642 84h1v1h-1ZM642 85h1v1h-1ZM642 83h1v1h-1ZM643 88h1v1h-1ZM645 85h1v1h-1ZM645 84h1v1h-1ZM645 77h1v1h-1ZM645 86h1v1h-1ZM646 86h1v1h-1ZM646 89h1v1h-1ZM646 81h1v1h-1ZM647 90h1v1h-1ZM647 89h1v1h-1ZM648 88h1v1h-1ZM648 91h1v1h-1ZM651 84h1v1h-1ZM651 88h1v1h-1ZM653 85h1v1h-1ZM655 78h1v1h-1ZM655 89h1v1h-1ZM657 89h1v1h-1ZM657 87h1v1h-1ZM658 87h1v1h-1ZM658 88h1v1h-1ZM660 81h1v1h-1ZM660 76h1v1h-1ZM660 91h1v1h-1ZM661 89h1v1h-1ZM664 92h1v1h-1ZM663 89h1v1h-1ZM665 83h1v1h-1ZM666 76h1v1h-1ZM666 86h1v1h-1ZM668 85h1v1h-1ZM669 92h1v1h-1ZM670 79h1v1h-1ZM672 88h1v1h-1ZM672 85h1v1h-1ZM673 82h1v1h-1ZM674 88h1v1h-1ZM676 81h1v1h-1ZM675 67h1v1h-1ZM675 93h1v1h-1ZM677 82h1v1h-1ZM677 77h1v1h-1ZM677 90h1v1h-1ZM679 89h1v1h-1ZM681 82h1v1h-1ZM683 81h1v1h-1ZM684 83h1v1h-1ZM684 87h1v1h-1ZM684 86h1v1h-1ZM686 87h1v1h-1ZM687 66h1v1h-1ZM687 93h1v1h-1ZM687 89h1v1h-1ZM688 89h1v1h-1ZM689 87h1v1h-1ZM689 84h1v1h-1ZM691 76h1v1h-1ZM690 80h1v1h-1ZM690 86h1v1h-1ZM693 71h1v1h-1ZM693 79h1v1h-1ZM692 92h1v1h-1ZM695 93h1v1h-1ZM694 88h1v1h-1ZM695 81h1v1h-1ZM696 88h1v1h-1ZM696 72h1v1h-1ZM697 79h1v1h-1ZM697 79h1v1h-1ZM699 88h1v1h-1ZM702 86h1v1h-1ZM703 84h1v1h-1ZM703 88h1v1h-1ZM706 83h1v1h-1ZM706 83h1v1h-1ZM707 85h1v1h-1ZM707 84h1v1h-1ZM707 93h1v1h-1ZM708 91h1v1h-1ZM708 75h1v1h-1ZM709 68h1v1h-1ZM710 85h1v1h-1ZM710 86h1v1h-1ZM710 87h1v1h-1ZM711 80h1v1h-1ZM711 93h1v1h-1ZM712 88h1v1h-1ZM712 88h1v1h-1ZM712 88h1v1h-1ZM712 88h1v1h-1ZM713 84h1v1h-1ZM713 68h1v1h-1ZM714 86h1v1h-1ZM715 76h1v1h-1ZM715 85h1v1h-1ZM716 88h1v1h-1ZM718 89h1v1h-1ZM719 89h1v1h-1ZM718 84h1v1h-1ZM720 80h1v1h-1ZM720 73h1v1h-1ZM720 89h1v1h-1ZM721 90h1v1h-1ZM721 91h1v1h-1ZM723 86h1v1h-1ZM723 81h1v1h-1ZM725 81h1v1h-1ZM725 83h1v1h-1ZM727 74h1v1h-1ZM728 84h1v1h-1ZM728 79h1v1h-1ZM729 82h1v1h-1ZM729 86h1v1h-1ZM731 86h1v1h-1ZM731 82h1v1h-1ZM731 89h1v1h-1ZM745 87h1v1h-1ZM747 78h1v1h-1ZM746 74h1v1h-1ZM748 83h1v1h-1ZM748 77h1v1h-1ZM750 75h1v1h-1ZM750 93h1v1h-1ZM749 84h1v1h-1ZM751 83h1v1h-1ZM753 84h1v1h-1ZM752 92h1v1h-1ZM753 85h1v1h-1ZM754 86h1v1h-1ZM754 89h1v1h-1ZM756 81h1v1h-1ZM755 84h1v1h-1ZM760 87h1v1h-1ZM760 88h1v1h-1ZM760 85h1v1h-1ZM761 87h1v1h-1ZM761 87h1v1h-1ZM762 85h1v1h-1ZM762 75h1v1h-1ZM763 78h1v1h-1ZM764 89h1v1h-1ZM764 92h1v1h-1ZM765 89h1v1h-1ZM765 89h1v1h-1ZM766 79h1v1h-1ZM766 78h1v1h-1ZM768 93h1v1h-1ZM770 90h1v1h-1ZM770 92h1v1h-1ZM771 93h1v1h-1ZM772 79h1v1h-1ZM773 88h1v1h-1ZM774 82h1v1h-1ZM774 71h1v1h-1ZM774 90h1v1h-1ZM774 83h1v1h-1ZM775 88h1v1h-1ZM775 86h1v1h-1ZM775 75h1v1h-1ZM776 86h1v1h-1ZM776 91h1v1h-1ZM776 86h1v1h-1ZM777 77h1v1h-1ZM777 84h1v1h-1ZM779 88h1v1h-1ZM779 83h1v1h-1ZM780 83h1v1h-1ZM782 78h1v1h-1ZM782 89h1v1h-1ZM783 77h1v1h-1ZM783 87h1v1h-1ZM783 83h1v1h-1ZM785 92h1v1h-1ZM785 88h1v1h-1ZM784 89h1v1h-1ZM786 84h1v1h-1ZM787 89h1v1h-1ZM787 83h1v1h-1ZM788 87h1v1h-1ZM788 85h1v1h-1ZM789 86h1v1h-1ZM789 81h1v1h-1ZM790 73h1v1h-1ZM790 91h1v1h-1ZM791 87h1v1h-1ZM791 85h1v1h-1ZM791 80h1v1h-1ZM792 87h1v1h-1ZM794 83h1v1h-1ZM795 81h1v1h-1ZM796 90h1v1h-1ZM796 88h1v1h-1ZM798 83h1v1h-1ZM799 91h1v1h-1ZM801 78h1v1h-1ZM802 88h1v1h-1ZM803 90h1v1h-1ZM804 88h1v1h-1ZM804 88h1v1h-1ZM804 87h1v1h-1ZM805 87h1v1h-1ZM805 86h1v1h-1ZM806 88h1v1h-1ZM806 86h1v1h-1ZM807 87h1v1h-1ZM807 75h1v1h-1ZM807 93h1v1h-1ZM808 78h1v1h-1ZM810 87h1v1h-1ZM810 88h1v1h-1ZM810 86h1v1h-1ZM811 75h1v1h-1ZM814 89h1v1h-1ZM816 89h1v1h-1ZM816 86h1v1h-1ZM816 92h1v1h-1ZM817 70h1v1h-1ZM817 85h1v1h-1ZM817 85h1v1h-1ZM818 81h1v1h-1ZM819 70h1v1h-1ZM820 89h1v1h-1ZM820 90h1v1h-1ZM823 72h1v1h-1ZM823 82h1v1h-1ZM825 81h1v1h-1ZM825 79h1v1h-1ZM827 83h1v1h-1ZM827 86h1v1h-1ZM831 86h1v1h-1ZM830 78h1v1h-1ZM831 87h1v1h-1ZM833 90h1v1h-1ZM832 89h1v1h-1ZM832 92h1v1h-1ZM833 92h1v1h-1ZM834 75h1v1h-1ZM834 88h1v1h-1ZM836 84h1v1h-1ZM836 86h1v1h-1ZM838 82h1v1h-1ZM838 92h1v1h-1ZM839 86h1v1h-1ZM839 82h1v1h-1ZM840 88h1v1h-1ZM840 89h1v1h-1ZM846 88h1v1h-1ZM847 84h1v1h-1ZM849 85h1v1h-1ZM849 79h1v1h-1ZM851 87h1v1h-1Z" fill="#f27848" fill-opacity="0.9"/>
<path d="M2 91h1v1h-1ZM4 75h1v1h-1ZM6 83h1v1h-1ZM9 90h1v1h-1ZM10 84h1v1h-1ZM12 90h1v1h-1ZM17 90h1v1h-1ZM16 92h1v1h-1ZM18 89h1v1h-1ZM18 92h1v1h-1ZM24 91h1v1h-1ZM25 93h1v1h-1ZM30 92h1v1h-1ZM30 90h1v1h-1ZM31 79h1v1h-1ZM33 90h1v1h-1ZM48 93h1v1h-1ZM52 92h1v1h-1ZM53 85h1v1h-1ZM54 92h1v1h-1ZM54 91h1v1h-1ZM57 92h1v1h-1ZM58 87h1v1h-1ZM60 93h1v1h-1ZM61 90h1v1h-1ZM64 83h1v1h-1ZM65 92h1v1h-1ZM69 92h1v1h-1ZM71 91h1v1h-1ZM72 84h1v1h-1ZM75 91h1v1h-1ZM83 90h1v1h-1ZM84 90h1v1h-1ZM86 90h1v1h-1ZM93 91h1v1h-1ZM94 85h1v1h-1ZM94 87h1v1h-1ZM96 90h1v1h-1ZM101 91h1v1h-1ZM102 90h1v1h-1ZM104 93h1v1h-1ZM106 92h1v1h-1ZM108 90h1v1h-1ZM112 92h1v1h-1ZM115 89h1v1h-1ZM117 93h1v1h-1ZM119 93h1v1h-1ZM120 91h1v1h-1ZM124 93h1v1h-1ZM125 85h1v1h-1ZM128 91h1v1h-1ZM128 75h1v1h-1ZM132 82h1v1h-1ZM145 92h1v1h-1ZM147 92h1v1h-1ZM151 82h1v1h-1ZM157 91h1v1h-1ZM161 87h1v1h-1ZM162 90h1v1h-1ZM166 93h1v1h-1ZM172 93h1v1h-1ZM176 90h1v1h-1ZM178 91h1v1h-1ZM180 93h1v1h-1ZM181 92h1v1h-1ZM189 88h1v1h-1ZM190 85h1v1h-1ZM192 93h1v1h-1ZM197 92h1v1h-1ZM198 93h1v1h-1ZM200 90h1v1h-1ZM200 91h1v1h-1ZM202 90h1v1h-1ZM205 90h1v1h-1ZM210 74h1v1h-1ZM214 91h1v1h-1ZM219 89h1v1h-1ZM231 88h1v1h-1ZM232 90h1v1h-1ZM232 91h1v1h-1ZM233 87h1v1h-1ZM237 90h1v1h-1ZM238 88h1v1h-1ZM239 93h1v1h-1ZM245 89h1v1h-1ZM247 90h1v1h-1ZM249 93h1v1h-1ZM250 91h1v1h-1ZM255 93h1v1h-1ZM257 91h1v1h-1ZM261 91h1v1h-1ZM263 93h1v1h-1ZM265 91h1v1h-1ZM267 91h1v1h-1ZM268 93h1v1h-1ZM274 92h1v1h-1ZM278 91h1v1h-1ZM280 76h1v1h-1ZM281 91h1v1h-1ZM283 93h1v1h-1ZM284 90h1v1h-1ZM285 90h1v1h-1ZM287 90h1v1h-1ZM290 87h1v1h-1ZM291 82h1v1h-1ZM292 92h1v1h-1ZM293 93h1v1h-1ZM294 91h1v1h-1ZM306 89h1v1h-1ZM314 93h1v1h-1ZM322 93h1v1h-1ZM331 91h1v1h-1ZM335 81h1v1h-1ZM335 85h1v1h-1ZM336 85h1v1h-1ZM344 85h1v1h-1ZM346 92h1v1h-1ZM354 92h1v1h-1ZM356 90h1v1h-1ZM356 93h1v1h-1ZM362 89h1v1h-1ZM363 90h1v1h-1ZM364 90h1v1h-1ZM364 93h1v1h-1ZM374 93h1v1h-1ZM376 92h1v1h-1ZM378 91h1v1h-1ZM380 90h1v1h-1ZM385 93h1v1h-1ZM388 93h1v1h-1ZM388 90h1v1h-1ZM389 93h1v1h-1ZM389 93h1v1h-1ZM392 91h1v1h-1ZM397 91h1v1h-1ZM431 90h1v1h-1ZM433 89h1v1h-1ZM432 81h1v1h-1ZM435 91h1v1h-1ZM436 83h1v1h-1ZM442 91h1v1h-1ZM442 91h1v1h-1ZM447 90h1v1h-1ZM448 92h1v1h-1ZM450 91h1v1h-1ZM451 91h1v1h-1ZM454 84h1v1h-1ZM456 91h1v1h-1ZM457 91h1v1h-1ZM457 85h1v1h-1ZM457 84h1v1h-1ZM459 92h1v1h-1ZM460 91h1v1h-1ZM462 93h1v1h-1ZM463 85h1v1h-1ZM464 93h1v1h-1ZM464 86h1v1h-1ZM465 91h1v1h-1ZM465 90h1v1h-1ZM467 92h1v1h-1ZM469 91h1v1h-1ZM472 92h1v1h-1ZM475 93h1v1h-1ZM475 91h1v1h-1ZM478 93h1v1h-1ZM481 82h1v1h-1ZM483 87h1v1h-1ZM486 90h1v1h-1ZM486 86h1v1h-1ZM487 69h1v1h-1ZM488 90h1v1h-1ZM491 90h1v1h-1ZM491 92h1v1h-1ZM491 92h1v1h-1ZM496 89h1v1h-1ZM498 91h1v1h-1ZM498 75h1v1h-1ZM500 84h1v1h-1ZM499 88h1v1h-1ZM501 91h1v1h-1ZM502 78h1v1h-1ZM504 90h1v1h-1ZM505 85h1v1h-1ZM505 89h1v1h-1ZM505 93h1v1h-1ZM506 92h1v1h-1ZM507 86h1v1h-1ZM508 93h1v1h-1ZM510 90h1v1h-1ZM512 93h1v1h-1ZM511 74h1v1h-1ZM514 92h1v1h-1ZM515 88h1v1h-1ZM517 91h1v1h-1ZM518 90h1v1h-1ZM518 93h1v1h-1ZM519 83h1v1h-1ZM521 90h1v1h-1ZM521 93h1v1h-1ZM522 92h1v1h-1ZM522 88h1v1h-1ZM523 89h1v1h-1ZM525 92h1v1h-1ZM526 79h1v1h-1ZM527 88h1v1h-1ZM529 92h1v1h-1ZM530 80h1v1h-1ZM530 93h1v1h-1ZM531 90h1v1h-1ZM533 92h1v1h-1ZM533 93h1v1h-1ZM534 90h1v1h-1ZM536 88h1v1h-1ZM536 91h1v1h-1ZM539 91h1v1h-1ZM541 92h1v1h-1ZM544 91h1v1h-1ZM546 91h1v1h-1ZM547 93h1v1h-1ZM549 93h1v1h-1ZM551 89h1v1h-1ZM551 93h1v1h-1ZM553 90h1v1h-1ZM555 93h1v1h-1ZM554 74h1v1h-1ZM556 91h1v1h-1ZM564 86h1v1h-1ZM565 88h1v1h-1ZM565 89h1v1h-1ZM567 93h1v1h-1ZM568 91h1v1h-1ZM568 69h1v1h-1ZM569 90h1v1h-1ZM574 85h1v1h-1ZM577 92h1v1h-1ZM578 91h1v1h-1ZM579 90h1v1h-1ZM582 92h1v1h-1ZM582 87h1v1h-1ZM584 92h1v1h-1ZM586 92h1v1h-1ZM586 85h1v1h-1ZM588 91h1v1h-1ZM589 88h1v1h-1ZM589 93h1v1h-1ZM591 90h1v1h-1ZM597 92h1v1h-1ZM598 90h1v1h-1ZM598 90h1v1h-1ZM602 90h1v1h-1ZM603 76h1v1h-1ZM606 91h1v1h-1ZM606 88h1v1h-1ZM608 86h1v1h-1ZM609 92h1v1h-1ZM612 91h1v1h-1ZM615 90h1v1h-1ZM620 91h1v1h-1ZM626 83h1v1h-1ZM626 81h1v1h-1ZM627 90h1v1h-1ZM630 90h1v1h-1ZM630 93h1v1h-1ZM643 91h1v1h-1ZM649 93h1v1h-1ZM650 76h1v1h-1ZM654 87h1v1h-1ZM655 92h1v1h-1ZM657 92h1v1h-1ZM658 91h1v1h-1ZM662 83h1v1h-1ZM662 90h1v1h-1ZM663 92h1v1h-1ZM665 85h1v1h-1ZM670 92h1v1h-1ZM672 93h1v1h-1ZM673 91h1v1h-1ZM674 93h1v1h-1ZM679 92h1v1h-1ZM681 92h1v1h-1ZM682 78h1v1h-1ZM682 90h1v1h-1ZM685 93h1v1h-1ZM688 92h1v1h-1ZM690 91h1v1h-1ZM692 93h1v1h-1ZM696 86h1v1h-1ZM700 92h1v1h-1ZM701 85h1v1h-1ZM709 93h1v1h-1ZM709 92h1v1h-1ZM711 91h1v1h-1ZM711 87h1v1h-1ZM713 91h1v1h-1ZM714 89h1v1h-1ZM716 92h1v1h-1ZM716 83h1v1h-1ZM721 92h1v1h-1ZM721 90h1v1h-1ZM722 93h1v1h-1ZM722 79h1v1h-1ZM722 90h1v1h-1ZM723 91h1v1h-1ZM724 91h1v1h-1ZM727 86h1v1h-1ZM726 90h1v1h-1ZM728 93h1v1h-1ZM728 92h1v1h-1ZM742 91h1v1h-1ZM743 93h1v1h-1ZM751 92h1v1h-1ZM754 91h1v1h-1ZM755 91h1v1h-1ZM757 93h1v1h-1ZM757 91h1v1h-1ZM761 92h1v1h-1ZM762 92h1v1h-1ZM763 93h1v1h-1ZM766 91h1v1h-1ZM768 80h1v1h-1ZM770 89h1v1h-1ZM771 90h1v1h-1ZM771 85h1v1h-1ZM779 93h1v1h-1ZM780 89h1v1h-1ZM781 91h1v1h-1ZM781 91h1v1h-1ZM786 91h1v1h-1ZM787 92h1v1h-1ZM788 93h1v1h-1ZM790 93h1v1h-1ZM792 92h1v1h-1ZM794 82h1v1h-1ZM795 90h1v1h-1ZM795 92h1v1h-1ZM797 91h1v1h-1ZM797 93h1v1h-1ZM798 93h1v1h-1ZM799 90h1v1h-1ZM801 93h1v1h-1ZM805 87h1v1h-1ZM809 90h1v1h-1ZM809 90h1v1h-1ZM811 93h1v1h-1ZM812 93h1v1h-1ZM812 85h1v1h-1ZM815 92h1v1h-1ZM816 93h1v1h-1ZM819 92h1v1h-1ZM820 93h1v1h-1ZM822 93h1v1h-1ZM824 92h1v1h-1ZM824 91h1v1h-1ZM825 90h1v1h-1ZM827 90h1v1h-1ZM829 93h1v1h-1ZM829 93h1v1h-1ZM829 88h1v1h-1ZM828 91h1v1h-1ZM834 93h1v1h-1ZM835 87h1v1h-1ZM835 90h1v1h-1ZM837 91h1v1h-1ZM839 90h1v1h-1ZM840 79h1v1h-1ZM842 93h1v1h-1ZM842 92h1v1h-1ZM843 89h1v1h-1ZM843 93h1v1h-1ZM846 91h1v1h-1ZM848 91h1v1h-1ZM848 88h1v1h-1ZM851 93h1v1h-1Z" fill="#f8b868" fill-opacity="0.95"/>
<rect x="430" y="0" width="1" height="95" fill="#4a4650" opacity="0.8"/>
<rect x="531" y="0" width="1" height="95" fill="#4a4650" opacity="0.8"/>
<rect x="732" y="0" width="1" height="95" fill="#4a4650" opacity="0.8"/>
<rect x="0" y="93" width="854" height="2" fill="#e86a50" opacity="0.5"/>
<rect x="0" y="96" width="854" height="95" fill="#5f5b66"/>
<path d="M0 191V151H1V97H3V132H4V159H5V132H7V102H8V153H10V118H11V125H13V155H15V115H16V97H17V97H19V130H20V97H21V162H22V125H23V114H24V161H25V165H27V119H28V136H30V107H32V142H33V120H35V143H36V115H37V131H38V115H40V147H41V123H43V98H44V107H45V149H46V127H47V100H48V125H49V111H50V125H52V128H53V114H54V141H55V136H57V103H59V103H60V168H61V142H62V109H63V106H65V141H66V97H68V100H70V110H71V173H72V117H74V176H76V114H77V162H78V142H79V120H81V144H82V112H83V126H84V136H85V130H86V121H87V143H89V174H90V135H92V155H93V139H95V120H96V125H97V97H99V127H100V97H102V149H104V120H106V159H107V97H109V131H111V123H112V156H114V97H116V97H117V97H119V98H120V152H121V149H123V113H125V157H127V97H128V134H129V97H131V149H132V112H133V121H135V159H136V99H137V137H139V130H140V151H142V128H144V178H146V141H147V152H148V123H150V97H151V117H153V167H154V124H155V135H156V144H158V152H159V140H160V161H162V160H163V112H164V106H166V151H167V177H169V176H170V142H172V106H173V161H174V150H175V166H176V99H177V147H178V129H179V117H180V144H181V155H183V148H184V100H185V112H187V115H189V176H191V134H192V156H194V101H196V136H197V139H198V118H200V153H202V141H203V133H204V110H205V142H206V133H208V97H209V112H210V110H211V117H213V122H215V149H217V110H218V117H219V121H220V111H221V123H222V177H223V171H225V149H227V128H229V107H231V138H232V157H234V135H236V109H237V147H238V111H239V122H241V112H242V97H243V153H244V142H245V127H247V103H249V158H250V115H252V142H254V134H256V111H258V142H259V152H260V142H261V126H263V162H264V151H266V142H268V116H270V144H271V130H273V140H274V164H275V111H277V143H279V152H281V148H282V107H283V111H284V154H285V111H287V129H289V109H291V119H292V147H294V122H295V126H296V114H298V166H300V149H301V172H303V121H304V161H305V122H306V119H307V132H308V120H309V142H310V98H312V121H313V173H315V140H316V168H317V164H318V157H320V174H321V112H323V109H324V109H325V138H326V143H327V182H328V173H329V175H331V113H332V125H333V140H334V153H335V152H336V110H337V150H339V143H340V140H341V170H343V157H345V140H347V123H348V146H350V138H352V152H354V120H356V166H357V117H358V163H360V144H361V144H362V125H363V126H364V153H366V146H368V124H369V98H370V97H371V123H372V158H373V101H375V114H376V116H377V127H378V106H379V107H380V123H381V148H382V111H384V150H385V97H386V123H388V152H389V98H390V138H392V106H393V132H394V132H396V97H398V97H400V97H401V130H403V125H404V185H405V189H407V169H408V181H410V172H411V171H413V144H414V159H415V153H417V147H418V117H419V166H420V184H421V182H422V174H424V146H426V179H427V117H429V164H430V131H431V133H432V101H434V146H435V136H436V97H438V108H439V112H440V108H441V98H442V97H443V97H445V117H446V97H448V97H450V137H451V106H452V115H453V126H455V143H457V147H459V106H460V134H461V123H463V142H464V135H465V130H467V97H469V131H470V118H471V129H472V161H474V147H475V108H477V112H479V103H480V111H481V98H482V97H483V147H484V97H485V153H487V97H488V136H490V97H491V97H492V149H493V114H494V114H495V104H497V128H499V103H500V116H501V136H502V118H503V117H504V98H505V150H507V146H509V102H511V149H512V102H514V146H516V99H517V97H518V105H519V101H520V142H521V126H523V130H525V152H526V108H527V115H529V111H530V120H531V97H532V97H533V125H534V143H535V136H537V97H538V97H539V97H540V122H541V116H543V131H545V155H547V120H548V114H550V150H551V167H552V145H553V114H554V136H555V97H556V107H558V133H559V97H561V99H562V117H563V127H565V114H567V115H568V97H569V128H570V97H572V113H574V105H575V97H577V110H578V108H579V97H580V97H582V141H583V139H584V143H585V150H586V114H587V97H588V130H589V97H590V133H591V97H592V97H593V97H594V97H596V114H597V97H598V97H599V97H601V136H603V114H605V107H606V111H608V122H610V97H611V103H612V141H614V140H616V146H617V101H619V97H621V131H623V97H624V97H626V118H628V97H630V133H632V122H633V110H634V163H635V155H636V182H637V122H639V144H640V136H641V110H642V148H643V115H645V162H646V124H647V161H649V112H650V147H651V103H652V153H654V97H656V97H657V146H658V97H659V148H660V97H661V97H662V141H663V120H664V162H665V113H667V146H668V97H670V110H671V97H673V110H675V103H677V111H678V122H680V97H682V97H684V97H685V113H686V137H687V142H688V110H689V146H691V135H692V150H694V123H695V120H697V120H699V115H700V120H701V145H703V137H705V123H707V109H708V123H710V121H712V131H713V126H715V102H716V97H717V114H718V114H719V97H721V108H723V113H724V143H725V138H726V144H728V152H729V101H730V110H732V139H734V112H735V119H737V125H738V122H739V166H740V157H742V182H743V122H744V172H746V156H748V104H749V107H750V102H751V150H752V117H753V132H754V130H755V141H757V97H759V118H761V121H762V128H763V122H764V118H765V123H766V148H767V150H768V118H770V97H771V98H772V102H773V97H774V131H776V132H777V148H778V133H780V153H781V117H783V101H784V97H786V130H788V116H789V103H791V160H792V130H793V97H794V101H796V125H797V161H798V131H800V154H802V127H803V97H804V136H806V116H807V97H809V97H811V97H813V104H814V148H816V127H818V128H819V145H821V109H822V137H823V135H824V149H825V143H826V97H828V97H830V155H831V98H833V118H835V124H837V97H838V128H840V97H841V116H842V137H843V102H845V147H847V97H849V139H850V136H852V155H853V191Z" fill="#8a4e9a" fill-opacity="0.25"/>
<path d="M0 191V133H1V165H3V113H4V153H5V127H7V114H8V143H10V154H11V165H13V118H15V120H16V136H17V108H19V152H20V131H21V140H22V138H23V124H24V137H25V159H27V153H28V163H30V140H32V139H33V160H35V141H36V143H37V137H38V164H40V129H41V144H43V145H44V158H45V155H46V141H47V164H48V134H49V128H50V164H52V166H53V124H54V169H55V119H57V170H59V161H60V131H61V144H62V119H63V137H65V119H66V115H68V118H70V128H71V177H72V168H74V146H76V165H77V142H78V157H79V166H81V138H82V171H83V135H84V180H85V140H86V182H87V155H89V150H90V149H92V176H93V132H95V146H96V171H97V155H99V174H100V120H102V151H104V142H106V134H107V144H109V113H111V132H112V158H114V138H116V149H117V123H119V145H120V158H121V115H123V157H125V141H127V154H128V153H129V134H131V133H132V132H133V142H135V140H136V136H137V143H139V136H140V145H142V144H144V172H146V158H147V145H148V166H150V146H151V154H153V158H154V174H155V132H156V172H158V174H159V182H160V141H162V138H163V174H164V167H166V175H167V144H169V157H170V152H172V116H173V125H174V145H175V168H176V157H177V119H178V127H179V140H180V119H181V163H183V152H184V133H185V129H187V146H189V155H191V138H192V145H194V166H196V149H197V137H198V159H200V155H202V128H203V161H204V109H205V156H206V128H208V113H209V116H210V155H211V185H213V156H215V155H217V172H218V183H219V132H220V175H221V188H222V136H223V136H225V150H227V152H229V176H231V146H232V172H234V162H236V122H237V109H238V173H239V131H241V139H242V114H243V159H244V145H245V150H247V148H249V156H250V116H252V169H254V139H256V122H258V164H259V123H260V165H261V150H263V160H264V134H266V155H268V139H270V151H271V158H273V130H274V134H275V148H277V127H279V133H281V145H282V118H283V148H284V154H285V158H287V163H289V173H291V154H292V124H294V153H295V172H296V150H298V172H300V135H301V179H303V152H304V182H305V166H306V160H307V152H308V143H309V169H310V126H312V178H313V138H315V148H316V185H317V186H318V144H320V157H321V167H323V167H324V182H325V147H326V189H327V151H328V163H329V181H331V166H332V129H333V161H334V140H335V169H336V151H337V142H339V126H340V138H341V163H343V136H345V176H347V139H348V168H350V165H352V150H354V150H356V140H357V121H358V150H360V177H361V157H362V146H363V126H364V125H366V169H368V150H369V158H370V157H371V118H372V120H373V127H375V127H376V126H377V132H378V142H379V114H380V150H381V114H382V145H384V146H385V116H386V136H388V142H389V156H390V162H392V152H393V132H394V140H396V143H398V133H400V161H401V160H403V166H404V156H405V180H407V154H408V188H410V191H411V141H413V167H414V149H415V158H417V147H418V148H419V165H420V154H421V182H422V148H424V191H426V146H427V141H429V155H430V140H431V136H432V119H434V152H435V115H436V128H438V103H439V145H440V137H441V119H442V131H443V127H445V152H446V117H448V159H450V143H451V108H452V118H453V145H455V125H457V114H459V147H460V140H461V132H463V145H464V163H465V163H467V136H469V162H470V130H471V116H472V128H474V154H475V111H477V142H479V105H480V131H481V102H482V150H483V141H484V97H485V101H487V109H488V118H490V143H491V144H492V148H493V127H494V117H495V133H497V106H499V131H500V122H501V108H502V130H503V98H504V115H505V144H507V97H509V128H511V100H512V117H514V126H516V113H517V132H518V115H519V128H520V123H521V110H523V117H525V150H526V111H527V133H529V106H530V141H531V148H532V120H533V120H534V122H535V149H537V137H538V112H539V123H540V129H541V152H543V137H545V155H547V117H548V144H550V136H551V138H552V135H553V124H554V117H555V138H556V130H558V107H559V152H561V141H562V128H563V124H565V159H567V158H568V155H569V115H570V158H572V122H574V160H575V133H577V102H578V140H579V126H580V115H582V117H583V147H584V159H585V147H586V135H587V100H588V139H589V131H590V109H591V105H592V130H593V126H594V149H596V124H597V124H598V124H599V112H601V126H603V110H605V158H606V122H608V140H610V134H611V121H612V132H614V106H616V116H617V156H619V117H621V149H623V150H624V101H626V99H628V101H630V137H632V186H633V179H634V184H635V191H636V159H637V177H639V149H640V156H641V133H642V117H643V144H645V119H646V125H647V122H649V122H650V145H651V168H652V133H654V125H656V162H657V142H658V140H659V129H660V156H661V97H662V119H663V127H664V130H665V135H667V131H668V125H670V116H671V134H673V109H675V103H677V156H678V127H680V102H682V100H684V161H685V127H686V113H687V127H688V128H689V139H691V135H692V150H694V146H695V154H697V157H699V118H700V151H701V119H703V159H705V147H707V100H708V161H710V143H712V161H713V153H715V112H716V130H717V151H718V107H719V148H721V158H723V129H724V156H725V154H726V153H728V142H729V132H730V155H732V159H734V168H735V148H737V152H738V185H739V160H740V191H742V162H743V140H744V148H746V123H748V158H749V171H750V117H751V127H752V163H753V132H754V127H755V128H757V136H759V109H761V119H762V127H763V157H764V142H765V134H766V149H767V114H768V117H770V101H771V132H772V122H773V140H774V144H776V115H777V143H778V160H780V154H781V135H783V136H784V154H786V116H788V137H789V149H791V139H792V130H793V144H794V135H796V122H797V114H798V133H800V136H802V145H803V116H804V143H806V157H807V120H809V148H811V142H813V156H814V108H816V128H818V129H819V101H821V135H822V112H823V147H824V162H825V139H826V117H828V148H830V119H831V151H833V117H835V138H837V136H838V137H840V118H841V161H842V134H843V156H845V133H847V116H849V137H850V170H852V147H853V191Z" fill="#8e4c9a" fill-opacity="0.3"/>
<path d="M0 191V154H1V145H3V140H4V147H5V155H7V135H8V159H10V147H11V176H13V152H15V157H16V134H17V154H19V167H20V169H21V170H22V166H23V138H24V160H25V167H27V158H28V151H30V151H32V152H33V150H35V154H36V167H37V145H38V171H40V166H41V173H43V171H44V180H45V137H46V164H47V133H48V157H49V147H50V163H52V157H53V168H54V151H55V156H57V147H59V141H60V163H61V162H62V157H63V179H65V159H66V143H68V154H70V143H71V162H72V152H74V166H76V179H77V183H78V177H79V166H81V165H82V183H83V169H84V180H85V190H86V169H87V190H89V191H90V167H92V160H93V176H95V160H96V170H97V157H99V157H100V156H102V148H104V163H106V143H107V173H109V162H111V160H112V142H114V165H116V138H117V171H119V137H120V145H121V155H123V152H125V140H127V152H128V166H129V140H131V176H132V174H133V177H135V172H136V145H137V190H139V162H140V148H142V157H144V166H146V152H147V163H148V160H150V168H151V151H153V156H154V174H155V159H156V188H158V169H159V184H160V189H162V169H163V159H164V157H166V183H167V180H169V162H170V158H172V140H173V143H174V168H175V148H176V158H177V155H178V166H179V178H180V149H181V165H183V166H184V149H185V143H187V167H189V181H191V165H192V152H194V167H196V145H197V155H198V166H200V165H202V133H203V167H204V164H205V158H206V132H208V162H209V142H210V153H211V183H213V186H215V159H217V188H218V190H219V176H220V173H221V172H222V191H223V191H225V177H227V165H229V172H231V169H232V152H234V176H236V163H237V135H238V167H239V159H241V177H242V163H243V166H244V146H245V148H247V144H249V134H250V155H252V169H254V163H256V178H258V149H259V174H260V185H261V187H263V151H264V155H266V175H268V191H270V152H271V171H273V178H274V176H275V169H277V177H279V171H281V179H282V140H283V180H284V176H285V135H287V167H289V157H291V146H292V156H294V167H295V168H296V150H298V154H300V175H301V178H303V172H304V157H305V158H306V172H307V165H308V177H309V162H310V172H312V186H313V168H315V168H316V187H317V167H318V166H320V170H321V169H323V187H324V167H325V174H326V191H327V178H328V171H329V168H331V138H332V149H333V150H334V143H335V156H336V175H337V143H339V161H340V152H341V172H343V179H345V157H347V167H348V147H350V154H352V159H354V134H356V167H357V177H358V159H360V163H361V159H362V148H363V158H364V179H366V143H368V179H369V161H370V169H371V140H372V160H373V162H375V153H376V163H377V147H378V168H379V163H380V145H381V166H382V170H384V141H385V143H386V132H388V171H389V150H390V162H392V166H393V152H394V162H396V165H398V138H400V135H401V189H403V185H404V191H405V174H407V191H408V191H410V172H411V171H413V162H414V183H415V176H417V176H418V169H419V191H420V186H421V191H422V175H424V191H426V163H427V183H429V171H430V139H431V156H432V137H434V145H435V142H436V122H438V137H439V142H440V148H441V140H442V119H443V136H445V121H446V155H448V140H450V120H451V130H452V160H453V158H455V145H457V150H459V149H460V140H461V155H463V145H464V173H465V143H467V134H469V170H470V142H471V124H472V153H474V141H475V130H477V143H479V158H480V139H481V135H482V128H483V151H484V140H485V131H487V133H488V117H490V137H491V158H492V155H493V159H494V153H495V133H497V155H499V141H500V138H501V154H502V136H503V134H504V114H505V141H507V119H509V140H511V148H512V150H514V130H516V158H517V159H518V131H519V161H520V140H521V129H523V148H525V148H526V137H527V117H529V159H530V131H531V157H532V151H533V136H534V158H535V125H537V143H538V133H539V144H540V156H541V170H543V131H545V142H547V138H548V155H550V169H551V151H552V162H553V147H554V164H555V138H556V141H558V147H559V137H561V166H562V153H563V160H565V154H567V149H568V131H569V156H570V150H572V141H574V126H575V144H577V142H578V153H579V123H580V155H582V148H583V147H584V157H585V148H586V144H587V135H588V129H589V141H590V153H591V133H592V153H593V127H594V154H596V132H597V155H598V147H599V137H601V127H603V141H605V138H606V149H608V149H610V138H611V158H612V147H614V122H616V140H617V148H619V153H621V121H623V156H624V127H626V148H628V134H630V159H632V188H633V177H634V173H635V191H636V191H637V189H639V164H640V161H641V135H642V162H643V142H645V149H646V136H647V153H649V138H650V159H651V161H652V152H654V139H656V142H657V159H658V167H659V144H660V138H661V126H662V138H663V132H664V169H665V131H667V139H668V125H670V144H671V141H673V146H675V125H677V160H678V131H680V137H682V140H684V139H685V132H686V154H687V144H688V151H689V152H691V141H692V148H694V159H695V149H697V146H699V141H700V153H701V153H703V152H705V132H707V139H708V142H710V141H712V165H713V130H715V135H716V121H717V158H718V151H719V153H721V163H723V135H724V141H725V149H726V136H728V147H729V134H730V127H732V176H734V182H735V191H737V182H738V167H739V191H740V191H742V191H743V191H744V174H746V150H748V156H749V148H750V155H751V131H752V136H753V147H754V126H755V157H757V150H759V145H761V158H762V125H763V123H764V137H765V131H766V131H767V135H768V144H770V130H771V167H772V129H773V144H774V152H776V133H777V150H778V152H780V131H781V143H783V146H784V142H786V146H788V150H789V147H791V155H792V136H793V138H794V164H796V143H797V167H798V150H800V142H802V133H803V129H804V154H806V127H807V144H809V156H811V140H813V165H814V153H816V136H818V136H819V125H821V156H822V134H823V158H824V146H825V132H826V140H828V131H830V171H831V160H833V144H835V164H837V161H838V174H840V141H841V146H842V160H843V166H845V153H847V166H849V132H850V142H852V149H853V191Z" fill="#9a4c98" fill-opacity="0.4"/>
<path d="M0 191V170H1V172H3V168H4V166H5V174H7V167H8V165H10V165H11V175H13V166H15V168H16V165H17V158H19V170H20V160H21V176H22V165H23V166H24V170H25V168H27V177H28V162H30V172H32V176H33V173H35V174H36V163H37V174H38V181H40V182H41V170H43V180H44V171H45V163H46V170H47V166H48V180H49V173H50V164H52V160H53V165H54V163H55V161H57V165H59V172H60V176H61V168H62V161H63V172H65V173H66V167H68V169H70V162H71V185H72V166H74V179H76V175H77V172H78V188H79V182H81V184H82V177H83V181H84V175H85V186H86V178H87V186H89V184H90V186H92V170H93V174H95V158H96V161H97V172H99V177H100V174H102V160H104V166H106V165H107V173H109V160H111V173H112V174H114V161H116V171H117V167H119V163H120V157H121V168H123V156H125V170H127V173H128V171H129V162H131V177H132V181H133V170H135V174H136V172H137V178H139V176H140V176H142V182H144V187H146V173H147V167H148V179H150V167H151V168H153V178H154V181H155V169H156V186H158V186H159V183H160V182H162V183H163V174H164V180H166V182H167V182H169V175H170V180H172V170H173V168H174V175H175V175H176V174H177V166H178V165H179V178H180V169H181V182H183V170H184V170H185V162H187V167H189V173H191V181H192V163H194V173H196V172H197V173H198V170H200V170H202V164H203V172H204V162H205V163H206V164H208V156H209V160H210V175H211V175H213V175H215V189H217V183H218V178H219V181H220V189H221V190H222V187H223V189H225V187H227V186H229V184H231V162H232V170H234V165H236V171H237V158H238V168H239V175H241V166H242V165H243V160H244V170H245V168H247V165H249V169H250V166H252V178H254V179H256V174H258V173H259V166H260V183H261V189H263V181H264V181H266V181H268V177H270V176H271V172H273V180H274V175H275V161H277V182H279V172H281V181H282V168H283V173H284V171H285V170H287V175H289V175H291V174H292V170H294V169H295V163H296V173H298V169H300V185H301V183H303V179H304V174H305V176H306V183H307V179H308V165H309V180H310V164H312V177H313V174H315V186H316V187H317V191H318V190H320V179H321V187H323V178H324V173H325V182H326V184H327V181H328V183H329V175H331V158H332V181H333V166H334V178H335V168H336V178H337V174H339V162H340V170H341V174H343V170H345V181H347V171H348V172H350V166H352V174H354V168H356V171H357V164H358V162H360V170H361V168H362V176H363V163H364V173H366V170H368V182H369V168H370V176H371V166H372V170H373V173H375V166H376V168H377V171H378V178H379V161H380V160H381V168H382V162H384V174H385V163H386V165H388V163H389V167H390V159H392V164H393V167H394V169H396V167H398V173H400V163H401V191H403V191H404V189H405V190H407V191H408V185H410V191H411V184H413V190H414V185H415V191H417V191H418V191H419V191H420V191H421V191H422V189H424V188H426V182H427V191H429V189H430V152H431V168H432V151H434V163H435V156H436V156H438V163H439V156H440V155H441V160H442V162H443V171H445V154H446V155H448V157H450V152H451V160H452V164H453V156H455V156H457V156H459V151H460V164H461V162H463V158H464V168H465V173H467V167H469V171H470V168H471V162H472V161H474V161H475V161H477V163H479V166H480V160H481V157H482V160H483V159H484V146H485V162H487V150H488V146H490V152H491V159H492V166H493V168H494V151H495V159H497V156H499V151H500V163H501V161H502V155H503V156H504V150H505V160H507V154H509V152H511V148H512V160H514V160H516V156H517V157H518V152H519V165H520V161H521V150H523V148H525V152H526V151H527V145H529V158H530V155H531V159H532V161H533V147H534V153H535V156H537V166H538V166H539V162H540V160H541V163H543V162H545V167H547V171H548V169H550V168H551V166H552V167H553V154H554V173H555V158H556V171H558V163H559V165H561V170H562V175H563V163H565V174H567V161H568V159H569V168H570V158H572V160H574V161H575V161H577V153H578V168H579V154H580V159H582V157H583V152H584V166H585V157H586V160H587V149H588V147H589V160H590V155H591V155H592V160H593V156H594V151H596V162H597V161H598V155H599V162H601V153H603V158H605V161H606V159H608V148H610V152H611V151H612V156H614V152H616V150H617V165H619V158H621V153H623V151H624V162H626V151H628V151H630V153H632V191H633V183H634V186H635V189H636V188H637V189H639V165H640V161H641V157H642V161H643V164H645V164H646V163H647V171H649V167H650V161H651V174H652V163H654V163H656V171H657V164H658V162H659V161H660V158H661V150H662V162H663V162H664V165H665V163H667V163H668V153H670V159H671V154H673V163H675V152H677V167H678V166H680V152H682V154H684V166H685V151H686V161H687V160H688V165H689V165H691V162H692V161H694V160H695V154H697V172H699V170H700V167H701V164H703V161H705V168H707V158H708V163H710V167H712V161H713V163H715V159H716V150H717V160H718V162H719V156H721V155H723V167H724V168H725V165H726V164H728V152H729V158H730V166H732V191H734V187H735V191H737V190H738V187H739V191H740V190H742V184H743V183H744V190H746V165H748V175H749V174H750V164H751V166H752V160H753V167H754V153H755V172H757V163H759V159H761V161H762V162H763V161H764V169H765V160H766V160H767V169H768V158H770V153H771V170H772V153H773V154H774V173H776V167H777V158H778V160H780V164H781V169H783V161H784V169H786V169H788V168H789V154H791V168H792V166H793V165H794V161H796V161H797V166H798V169H800V167H802V162H803V161H804V158H806V154H807V152H809V158H811V158H813V166H814V157H816V167H818V150H819V157H821V170H822V169H823V162H824V160H825V167H826V159H828V166H830V161H831V170H833V156H835V170H837V160H838V175H840V165H841V171H842V170H843V166H845V156H847V158H849V158H850V166H852V168H853V191Z" fill="#c44a80" fill-opacity="0.55"/>
<path d="M0 191V180H1V186H3V182H4V182H5V185H7V179H8V183H10V180H11V188H13V181H15V184H16V178H17V174H19V185H20V185H21V183H22V184H23V181H24V184H25V178H27V186H28V187H30V186H32V190H33V189H35V191H36V181H37V181H38V188H40V186H41V187H43V186H44V183H45V184H46V177H47V179H48V189H49V183H50V189H52V179H53V174H54V178H55V184H57V180H59V185H60V181H61V190H62V180H63V183H65V181H66V185H68V181H70V183H71V191H72V191H74V191H76V191H77V185H78V191H79V191H81V191H82V191H83V191H84V191H85V191H86V191H87V191H89V191H90V191H92V189H93V185H95V184H96V177H97V185H99V189H100V186H102V179H104V182H106V178H107V188H109V184H111V184H112V183H114V175H116V177H117V185H119V182H120V178H121V181H123V179H125V183H127V183H128V181H129V186H131V191H132V190H133V189H135V191H136V182H137V191H139V191H140V189H142V184H144V190H146V182H147V190H148V191H150V186H151V189H153V191H154V187H155V188H156V188H158V186H159V191H160V189H162V191H163V191H164V185H166V191H167V191H169V191H170V183H172V179H173V177H174V182H175V181H176V176H177V180H178V189H179V187H180V181H181V185H183V183H184V191H185V187H187V190H189V191H191V182H192V179H194V180H196V187H197V185H198V180H200V187H202V179H203V179H204V183H205V180H206V183H208V181H209V182H210V178H211V191H213V189H215V191H217V191H218V188H219V191H220V191H221V191H222V191H223V191H225V191H227V191H229V191H231V175H232V184H234V184H236V190H237V180H238V190H239V190H241V188H242V177H243V182H244V189H245V188H247V183H249V175H250V172H252V186H254V191H256V184H258V186H259V191H260V189H261V191H263V191H264V190H266V190H268V190H270V186H271V178H273V182H274V180H275V185H277V191H279V187H281V190H282V186H283V191H284V189H285V183H287V179H289V191H291V191H292V191H294V180H295V184H296V191H298V186H300V185H301V191H303V186H304V191H305V188H306V189H307V188H308V185H309V187H310V182H312V188H313V187H315V191H316V191H317V191H318V190H320V191H321V188H323V189H324V188H325V189H326V191H327V191H328V191H329V191H331V179H332V191H333V180H334V182H335V187H336V191H337V189H339V182H340V179H341V190H343V182H345V188H347V186H348V186H350V182H352V189H354V174H356V191H357V186H358V179H360V186H361V186H362V177H363V183H364V191H366V188H368V189H369V188H370V179H371V187H372V183H373V191H375V191H376V181H377V189H378V183H379V180H380V179H381V185H382V180H384V184H385V179H386V182H388V183H389V178H390V183H392V187H393V179H394V184H396V176H398V179H400V178H401V191H403V191H404V191H405V191H407V191H408V191H410V191H411V191H413V191H414V191H415V191H417V191H418V191H419V191H420V191H421V191H422V191H424V191H426V191H427V191H429V191H430V171H431V174H432V174H434V176H435V168H436V168H438V171H439V170H440V167H441V172H442V175H443V181H445V171H446V177H448V176H450V171H451V178H452V180H453V175H455V170H457V177H459V170H460V182H461V184H463V173H464V185H465V183H467V180H469V177H470V183H471V170H472V178H474V178H475V180H477V179H479V180H480V171H481V167H482V173H483V176H484V166H485V179H487V175H488V167H490V176H491V177H492V172H493V178H494V168H495V177H497V174H499V169H500V177H501V178H502V180H503V171H504V166H505V172H507V165H509V174H511V171H512V168H514V169H516V176H517V180H518V168H519V179H520V177H521V167H523V167H525V175H526V171H527V174H529V173H530V173H531V175H532V168H533V166H534V175H535V178H537V182H538V177H539V172H540V175H541V178H543V172H545V185H547V184H548V179H550V176H551V186H552V175H553V173H554V181H555V174H556V180H558V171H559V175H561V183H562V182H563V170H565V186H567V183H568V175H569V176H570V177H572V180H574V176H575V179H577V178H578V175H579V169H580V182H582V181H583V173H584V173H585V175H586V176H587V172H588V169H589V172H590V172H591V168H592V180H593V175H594V173H596V173H597V173H598V182H599V177H601V174H603V166H605V184H606V170H608V176H610V173H611V179H612V167H614V170H616V169H617V175H619V175H621V167H623V169H624V170H626V164H628V170H630V171H632V191H633V191H634V191H635V191H636V191H637V191H639V181H640V175H641V171H642V177H643V178H645V178H646V181H647V181H649V180H650V173H651V178H652V175H654V179H656V184H657V170H658V179H659V180H660V171H661V167H662V178H663V181H664V177H665V174H667V175H668V180H670V183H671V170H673V169H675V171H677V176H678V182H680V171H682V174H684V180H685V173H686V179H687V182H688V174H689V173H691V177H692V175H694V176H695V178H697V182H699V180H700V182H701V174H703V181H705V178H707V174H708V178H710V178H712V182H713V174H715V174H716V176H717V175H718V173H719V170H721V174H723V183H724V185H725V170H726V178H728V175H729V180H730V182H732V191H734V191H735V191H737V191H738V190H739V191H740V191H742V191H743V191H744V191H746V184H748V182H749V183H750V182H751V179H752V185H753V178H754V172H755V188H757V183H759V177H761V182H762V181H763V180H764V175H765V175H766V175H767V178H768V178H770V176H771V176H772V175H773V173H774V178H776V178H777V177H778V177H780V182H781V177H783V180H784V183H786V175H788V183H789V180H791V176H792V179H793V178H794V180H796V168H797V186H798V187H800V181H802V177H803V177H804V172H806V178H807V169H809V177H811V180H813V179H814V173H816V176H818V171H819V174H821V183H822V176H823V180H824V187H825V179H826V178H828V178H830V184H831V180H833V180H835V180H837V172H838V188H840V180H841V186H842V181H843V178H845V178H847V173H849V178H850V179H852V183H853V191Z" fill="#d84a66" fill-opacity="0.6"/>
<path d="M0 191V191H1V189H3V191H4V188H5V191H7V191H8V191H10V189H11V191H13V191H15V191H16V187H17V188H19V191H20V189H21V191H22V191H23V191H24V191H25V190H27V191H28V191H30V191H32V191H33V191H35V191H36V191H37V191H38V191H40V191H41V191H43V191H44V191H45V191H46V190H47V191H48V191H49V190H50V191H52V191H53V191H54V191H55V191H57V191H59V191H60V191H61V191H62V189H63V191H65V191H66V188H68V191H70V188H71V191H72V191H74V191H76V191H77V191H78V191H79V191H81V191H82V191H83V191H84V191H85V191H86V191H87V191H89V191H90V191H92V191H93V191H95V191H96V191H97V190H99V191H100V191H102V190H104V190H106V190H107V191H109V187H111V189H112V191H114V190H116V191H117V191H119V188H120V191H121V189H123V191H125V191H127V191H128V189H129V189H131V191H132V191H133V191H135V191H136V191H137V191H139V191H140V191H142V191H144V191H146V191H147V191H148V191H150V191H151V191H153V191H154V191H155V191H156V191H158V191H159V191H160V191H162V191H163V191H164V191H166V191H167V191H169V191H170V191H172V189H173V191H174V191H175V191H176V190H177V191H178V191H179V191H180V191H181V191H183V191H184V191H185V191H187V191H189V191H191V191H192V191H194V191H196V191H197V191H198V189H200V190H202V190H203V191H204V189H205V191H206V191H208V190H209V189H210V189H211V191H213V191H215V191H217V191H218V191H219V191H220V191H221V191H222V191H223V191H225V191H227V191H229V191H231V190H232V189H234V191H236V191H237V191H238V191H239V191H241V191H242V191H243V190H244V191H245V189H247V188H249V187H250V187H252V191H254V191H256V191H258V190H259V191H260V191H261V191H263V191H264V191H266V191H268V191H270V191H271V188H273V191H274V191H275V191H277V191H279V190H281V191H282V191H283V191H284V191H285V188H287V191H289V191H291V191H292V191H294V191H295V191H296V191H298V191H300V191H301V191H303V191H304V191H305V191H306V191H307V191H308V191H309V191H310V191H312V191H313V191H315V191H316V191H317V191H318V191H320V191H321V191H323V191H324V191H325V191H326V191H327V191H328V191H329V191H331V191H332V191H333V191H334V191H335V191H336V191H337V191H339V191H340V191H341V191H343V191H345V191H347V191H348V191H350V191H352V191H354V191H356V191H357V190H358V191H360V191H361V191H362V190H363V191H364V191H366V191H368V191H369V191H370V190H371V190H372V190H373V191H375V191H376V191H377V191H378V191H379V191H380V189H381V191H382V189H384V191H385V186H386V190H388V189H389V187H390V188H392V189H393V191H394V191H396V191H398V187H400V187H401V191H403V191H404V191H405V191H407V191H408V191H410V191H411V191H413V191H414V191H415V191H417V191H418V191H419V191H420V191H421V191H422V191H424V191H426V191H427V191H429V191H430V185H431V186H432V188H434V184H435V182H436V185H438V184H439V185H440V182H441V191H442V186H443V190H445V187H446V187H448V191H450V185H451V181H452V186H453V183H455V182H457V183H459V188H460V191H461V191H463V190H464V191H465V190H467V191H469V191H470V189H471V187H472V189H474V188H475V184H477V188H479V185H480V184H481V184H482V190H483V186H484V180H485V188H487V187H488V186H490V184H491V185H492V188H493V190H494V187H495V186H497V186H499V184H500V190H501V183H502V189H503V184H504V186H505V185H507V185H509V185H511V180H512V183H514V187H516V191H517V189H518V183H519V187H520V189H521V187H523V187H525V185H526V186H527V179H529V189H530V180H531V186H532V184H533V183H534V181H535V188H537V188H538V188H539V191H540V185H541V191H543V185H545V191H547V187H548V189H550V190H551V191H552V188H553V189H554V191H555V190H556V191H558V188H559V186H561V191H562V191H563V189H565V191H567V185H568V185H569V186H570V189H572V190H574V189H575V187H577V185H578V186H579V183H580V188H582V186H583V188H584V188H585V186H586V182H587V186H588V183H589V187H590V186H591V183H592V190H593V187H594V185H596V186H597V187H598V191H599V187H601V183H603V182H605V191H606V181H608V187H610V189H611V186H612V183H614V181H616V187H617V189H619V183H621V180H623V183H624V186H626V181H628V185H630V189H632V191H633V191H634V191H635V191H636V191H637V191H639V187H640V189H641V185H642V191H643V191H645V189H646V191H647V190H649V191H650V188H651V191H652V186H654V191H656V189H657V186H658V189H659V186H660V187H661V182H662V189H663V191H664V188H665V188H667V188H668V189H670V191H671V182H673V186H675V187H677V189H678V186H680V184H682V185H684V187H685V184H686V189H687V187H688V190H689V185H691V190H692V187H694V185H695V183H697V191H699V190H700V184H701V188H703V186H705V188H707V185H708V191H710V187H712V191H713V184H715V187H716V189H717V185H718V188H719V181H721V187H723V191H724V191H725V184H726V190H728V187H729V189H730V186H732V191H734V191H735V191H737V191H738V191H739V191H740V191H742V191H743V191H744V191H746V190H748V191H749V191H750V191H751V188H752V191H753V190H754V189H755V191H757V191H759V186H761V191H762V191H763V189H764V185H765V188H766V185H767V188H768V187H770V189H771V191H772V183H773V189H774V191H776V191H777V186H778V190H780V191H781V191H783V190H784V191H786V186H788V187H789V188H791V191H792V185H793V189H794V190H796V182H797V190H798V189H800V185H802V187H803V183H804V191H806V184H807V185H809V191H811V187H813V185H814V180H816V191H818V187H819V185H821V191H822V191H823V190H824V191H825V188H826V190H828V187H830V187H831V190H833V188H835V191H837V188H838V191H840V190H841V191H842V191H843V191H845V189H847V190H849V189H850V191H852V186H853V191Z" fill="#e8584c" fill-opacity="0.5"/>
<path d="M0 183h1v1h-1ZM1 184h1v1h-1ZM3 184h1v1h-1ZM3 183h1v1h-1ZM6 176h1v1h-1ZM7 186h1v1h-1ZM7 178h1v1h-1ZM9 189h1v1h-1ZM10 180h1v1h-1ZM12 185h1v1h-1ZM14 185h1v1h-1ZM15 182h1v1h-1ZM16 178h1v1h-1ZM16 188h1v1h-1ZM17 187h1v1h-1ZM18 172h1v1h-1ZM19 180h1v1h-1ZM21 181h1v1h-1ZM22 186h1v1h-1ZM23 179h1v1h-1ZM23 180h1v1h-1ZM24 181h1v1h-1ZM26 187h1v1h-1ZM28 180h1v1h-1ZM32 185h1v1h-1ZM36 174h1v1h-1ZM43 174h1v1h-1ZM45 178h1v1h-1ZM46 182h1v1h-1ZM46 183h1v1h-1ZM47 182h1v1h-1ZM48 185h1v1h-1ZM51 183h1v1h-1ZM52 175h1v1h-1ZM53 184h1v1h-1ZM53 181h1v1h-1ZM55 185h1v1h-1ZM57 185h1v1h-1ZM58 179h1v1h-1ZM59 180h1v1h-1ZM59 182h1v1h-1ZM60 185h1v1h-1ZM61 182h1v1h-1ZM62 187h1v1h-1ZM62 182h1v1h-1ZM63 179h1v1h-1ZM65 179h1v1h-1ZM66 185h1v1h-1ZM67 184h1v1h-1ZM70 183h1v1h-1ZM70 177h1v1h-1ZM71 185h1v1h-1ZM73 185h1v1h-1ZM77 181h1v1h-1ZM92 189h1v1h-1ZM95 179h1v1h-1ZM95 189h1v1h-1ZM96 178h1v1h-1ZM98 185h1v1h-1ZM98 180h1v1h-1ZM99 182h1v1h-1ZM102 171h1v1h-1ZM105 185h1v1h-1ZM106 176h1v1h-1ZM107 182h1v1h-1ZM110 184h1v1h-1ZM111 171h1v1h-1ZM112 167h1v1h-1ZM114 180h1v1h-1ZM114 172h1v1h-1ZM116 180h1v1h-1ZM117 182h1v1h-1ZM119 188h1v1h-1ZM120 187h1v1h-1ZM121 184h1v1h-1ZM124 188h1v1h-1ZM128 183h1v1h-1ZM130 179h1v1h-1ZM130 180h1v1h-1ZM135 184h1v1h-1ZM136 183h1v1h-1ZM140 184h1v1h-1ZM142 188h1v1h-1ZM146 189h1v1h-1ZM151 185h1v1h-1ZM153 187h1v1h-1ZM154 187h1v1h-1ZM162 189h1v1h-1ZM169 186h1v1h-1ZM170 185h1v1h-1ZM172 177h1v1h-1ZM173 178h1v1h-1ZM174 183h1v1h-1ZM175 185h1v1h-1ZM176 188h1v1h-1ZM176 184h1v1h-1ZM177 181h1v1h-1ZM178 188h1v1h-1ZM179 182h1v1h-1ZM182 187h1v1h-1ZM183 183h1v1h-1ZM193 188h1v1h-1ZM196 180h1v1h-1ZM197 175h1v1h-1ZM199 170h1v1h-1ZM199 183h1v1h-1ZM200 174h1v1h-1ZM202 185h1v1h-1ZM202 176h1v1h-1ZM203 184h1v1h-1ZM204 182h1v1h-1ZM205 184h1v1h-1ZM207 171h1v1h-1ZM208 184h1v1h-1ZM208 183h1v1h-1ZM209 169h1v1h-1ZM210 185h1v1h-1ZM231 184h1v1h-1ZM233 184h1v1h-1ZM234 181h1v1h-1ZM236 184h1v1h-1ZM237 189h1v1h-1ZM238 186h1v1h-1ZM239 177h1v1h-1ZM241 183h1v1h-1ZM242 185h1v1h-1ZM243 183h1v1h-1ZM244 185h1v1h-1ZM247 179h1v1h-1ZM247 185h1v1h-1ZM250 189h1v1h-1ZM253 186h1v1h-1ZM258 189h1v1h-1ZM259 187h1v1h-1ZM270 181h1v1h-1ZM272 182h1v1h-1ZM272 177h1v1h-1ZM273 183h1v1h-1ZM274 186h1v1h-1ZM276 185h1v1h-1ZM282 183h1v1h-1ZM282 179h1v1h-1ZM283 179h1v1h-1ZM284 188h1v1h-1ZM286 181h1v1h-1ZM286 181h1v1h-1ZM287 179h1v1h-1ZM291 178h1v1h-1ZM293 187h1v1h-1ZM294 184h1v1h-1ZM295 187h1v1h-1ZM296 185h1v1h-1ZM304 186h1v1h-1ZM305 177h1v1h-1ZM308 183h1v1h-1ZM309 185h1v1h-1ZM311 181h1v1h-1ZM332 183h1v1h-1ZM333 183h1v1h-1ZM336 185h1v1h-1ZM338 189h1v1h-1ZM342 188h1v1h-1ZM343 184h1v1h-1ZM351 184h1v1h-1ZM351 187h1v1h-1ZM353 185h1v1h-1ZM355 183h1v1h-1ZM355 180h1v1h-1ZM358 185h1v1h-1ZM362 184h1v1h-1ZM363 182h1v1h-1ZM364 185h1v1h-1ZM366 174h1v1h-1ZM368 182h1v1h-1ZM369 189h1v1h-1ZM370 181h1v1h-1ZM371 179h1v1h-1ZM372 178h1v1h-1ZM379 180h1v1h-1ZM379 184h1v1h-1ZM380 177h1v1h-1ZM381 183h1v1h-1ZM381 180h1v1h-1ZM383 170h1v1h-1ZM384 189h1v1h-1ZM385 174h1v1h-1ZM385 189h1v1h-1ZM386 183h1v1h-1ZM387 174h1v1h-1ZM389 175h1v1h-1ZM389 184h1v1h-1ZM390 179h1v1h-1ZM392 181h1v1h-1ZM393 181h1v1h-1ZM396 178h1v1h-1ZM396 171h1v1h-1ZM399 182h1v1h-1ZM398 181h1v1h-1ZM430 181h1v1h-1ZM430 185h1v1h-1ZM430 180h1v1h-1ZM430 168h1v1h-1ZM431 189h1v1h-1ZM432 184h1v1h-1ZM432 180h1v1h-1ZM433 176h1v1h-1ZM434 185h1v1h-1ZM434 181h1v1h-1ZM434 183h1v1h-1ZM435 161h1v1h-1ZM435 186h1v1h-1ZM435 176h1v1h-1ZM436 180h1v1h-1ZM437 175h1v1h-1ZM437 180h1v1h-1ZM438 180h1v1h-1ZM438 181h1v1h-1ZM438 175h1v1h-1ZM439 185h1v1h-1ZM439 183h1v1h-1ZM439 184h1v1h-1ZM440 189h1v1h-1ZM440 187h1v1h-1ZM440 181h1v1h-1ZM441 184h1v1h-1ZM442 184h1v1h-1ZM442 179h1v1h-1ZM443 179h1v1h-1ZM443 179h1v1h-1ZM445 185h1v1h-1ZM445 176h1v1h-1ZM447 185h1v1h-1ZM446 182h1v1h-1ZM446 179h1v1h-1ZM449 188h1v1h-1ZM448 184h1v1h-1ZM450 183h1v1h-1ZM450 187h1v1h-1ZM450 179h1v1h-1ZM451 187h1v1h-1ZM454 187h1v1h-1ZM453 185h1v1h-1ZM455 176h1v1h-1ZM456 181h1v1h-1ZM455 173h1v1h-1ZM458 177h1v1h-1ZM458 189h1v1h-1ZM458 187h1v1h-1ZM459 178h1v1h-1ZM459 180h1v1h-1ZM459 181h1v1h-1ZM460 176h1v1h-1ZM462 186h1v1h-1ZM461 175h1v1h-1ZM463 189h1v1h-1ZM463 187h1v1h-1ZM464 189h1v1h-1ZM464 181h1v1h-1ZM465 186h1v1h-1ZM467 182h1v1h-1ZM469 178h1v1h-1ZM469 182h1v1h-1ZM470 189h1v1h-1ZM470 171h1v1h-1ZM471 189h1v1h-1ZM471 184h1v1h-1ZM472 178h1v1h-1ZM473 177h1v1h-1ZM474 175h1v1h-1ZM475 188h1v1h-1ZM475 188h1v1h-1ZM476 188h1v1h-1ZM477 177h1v1h-1ZM479 174h1v1h-1ZM480 185h1v1h-1ZM480 175h1v1h-1ZM481 180h1v1h-1ZM482 176h1v1h-1ZM483 184h1v1h-1ZM483 171h1v1h-1ZM484 184h1v1h-1ZM484 186h1v1h-1ZM484 181h1v1h-1ZM486 185h1v1h-1ZM485 189h1v1h-1ZM487 177h1v1h-1ZM488 188h1v1h-1ZM488 175h1v1h-1ZM490 168h1v1h-1ZM490 166h1v1h-1ZM491 188h1v1h-1ZM492 179h1v1h-1ZM492 183h1v1h-1ZM493 183h1v1h-1ZM493 167h1v1h-1ZM494 173h1v1h-1ZM494 189h1v1h-1ZM494 182h1v1h-1ZM495 175h1v1h-1ZM495 184h1v1h-1ZM496 182h1v1h-1ZM498 176h1v1h-1ZM499 176h1v1h-1ZM499 179h1v1h-1ZM500 182h1v1h-1ZM500 183h1v1h-1ZM501 189h1v1h-1ZM501 173h1v1h-1ZM501 186h1v1h-1ZM502 176h1v1h-1ZM503 186h1v1h-1ZM503 177h1v1h-1ZM504 178h1v1h-1ZM504 179h1v1h-1ZM504 166h1v1h-1ZM504 180h1v1h-1ZM506 173h1v1h-1ZM506 174h1v1h-1ZM508 188h1v1h-1ZM508 176h1v1h-1ZM507 181h1v1h-1ZM507 182h1v1h-1ZM510 177h1v1h-1ZM509 176h1v1h-1ZM509 183h1v1h-1ZM511 182h1v1h-1ZM512 177h1v1h-1ZM513 177h1v1h-1ZM515 183h1v1h-1ZM515 185h1v1h-1ZM516 183h1v1h-1ZM517 183h1v1h-1ZM517 178h1v1h-1ZM518 181h1v1h-1ZM518 169h1v1h-1ZM518 167h1v1h-1ZM519 188h1v1h-1ZM519 186h1v1h-1ZM520 176h1v1h-1ZM520 177h1v1h-1ZM521 181h1v1h-1ZM522 183h1v1h-1ZM523 181h1v1h-1ZM524 185h1v1h-1ZM523 167h1v1h-1ZM525 183h1v1h-1ZM525 180h1v1h-1ZM525 172h1v1h-1ZM526 184h1v1h-1ZM526 181h1v1h-1ZM526 177h1v1h-1ZM528 180h1v1h-1ZM527 175h1v1h-1ZM529 179h1v1h-1ZM529 183h1v1h-1ZM529 175h1v1h-1ZM530 183h1v1h-1ZM530 186h1v1h-1ZM530 185h1v1h-1ZM531 182h1v1h-1ZM531 179h1v1h-1ZM532 166h1v1h-1ZM532 185h1v1h-1ZM532 182h1v1h-1ZM533 182h1v1h-1ZM533 174h1v1h-1ZM533 187h1v1h-1ZM534 185h1v1h-1ZM534 187h1v1h-1ZM535 184h1v1h-1ZM535 181h1v1h-1ZM535 179h1v1h-1ZM537 184h1v1h-1ZM538 180h1v1h-1ZM538 181h1v1h-1ZM538 172h1v1h-1ZM539 176h1v1h-1ZM539 189h1v1h-1ZM540 169h1v1h-1ZM540 188h1v1h-1ZM542 188h1v1h-1ZM541 184h1v1h-1ZM543 172h1v1h-1ZM544 189h1v1h-1ZM547 187h1v1h-1ZM548 178h1v1h-1ZM549 176h1v1h-1ZM550 176h1v1h-1ZM551 178h1v1h-1ZM552 189h1v1h-1ZM552 189h1v1h-1ZM554 186h1v1h-1ZM555 189h1v1h-1ZM555 187h1v1h-1ZM557 188h1v1h-1ZM558 184h1v1h-1ZM558 185h1v1h-1ZM560 184h1v1h-1ZM559 184h1v1h-1ZM561 183h1v1h-1ZM561 182h1v1h-1ZM563 173h1v1h-1ZM564 185h1v1h-1ZM566 189h1v1h-1ZM565 189h1v1h-1ZM567 186h1v1h-1ZM567 183h1v1h-1ZM568 187h1v1h-1ZM568 180h1v1h-1ZM569 179h1v1h-1ZM572 179h1v1h-1ZM573 177h1v1h-1ZM572 176h1v1h-1ZM574 174h1v1h-1ZM574 164h1v1h-1ZM576 186h1v1h-1ZM577 174h1v1h-1ZM577 175h1v1h-1ZM578 188h1v1h-1ZM578 186h1v1h-1ZM579 182h1v1h-1ZM579 186h1v1h-1ZM579 174h1v1h-1ZM579 176h1v1h-1ZM581 179h1v1h-1ZM582 185h1v1h-1ZM582 183h1v1h-1ZM582 178h1v1h-1ZM583 185h1v1h-1ZM583 187h1v1h-1ZM584 180h1v1h-1ZM585 180h1v1h-1ZM586 169h1v1h-1ZM586 182h1v1h-1ZM587 182h1v1h-1ZM587 188h1v1h-1ZM587 158h1v1h-1ZM588 174h1v1h-1ZM588 184h1v1h-1ZM588 188h1v1h-1ZM588 171h1v1h-1ZM589 180h1v1h-1ZM590 184h1v1h-1ZM590 182h1v1h-1ZM590 166h1v1h-1ZM591 179h1v1h-1ZM591 168h1v1h-1ZM591 178h1v1h-1ZM592 185h1v1h-1ZM592 182h1v1h-1ZM592 176h1v1h-1ZM593 178h1v1h-1ZM593 185h1v1h-1ZM593 174h1v1h-1ZM594 176h1v1h-1ZM595 175h1v1h-1ZM594 178h1v1h-1ZM596 168h1v1h-1ZM596 187h1v1h-1ZM597 181h1v1h-1ZM598 162h1v1h-1ZM599 185h1v1h-1ZM600 182h1v1h-1ZM601 185h1v1h-1ZM601 180h1v1h-1ZM605 177h1v1h-1ZM605 188h1v1h-1ZM606 188h1v1h-1ZM607 180h1v1h-1ZM607 169h1v1h-1ZM608 173h1v1h-1ZM609 170h1v1h-1ZM610 189h1v1h-1ZM611 189h1v1h-1ZM611 179h1v1h-1ZM612 178h1v1h-1ZM614 181h1v1h-1ZM615 186h1v1h-1ZM616 185h1v1h-1ZM616 174h1v1h-1ZM617 180h1v1h-1ZM620 184h1v1h-1ZM619 186h1v1h-1ZM620 188h1v1h-1ZM621 182h1v1h-1ZM622 182h1v1h-1ZM623 189h1v1h-1ZM623 175h1v1h-1ZM625 183h1v1h-1ZM625 179h1v1h-1ZM624 185h1v1h-1ZM627 170h1v1h-1ZM626 175h1v1h-1ZM629 189h1v1h-1ZM628 172h1v1h-1ZM630 185h1v1h-1ZM631 187h1v1h-1ZM630 189h1v1h-1ZM639 180h1v1h-1ZM640 176h1v1h-1ZM640 179h1v1h-1ZM641 182h1v1h-1ZM641 184h1v1h-1ZM642 189h1v1h-1ZM642 182h1v1h-1ZM644 179h1v1h-1ZM646 188h1v1h-1ZM646 178h1v1h-1ZM648 182h1v1h-1ZM650 187h1v1h-1ZM650 183h1v1h-1ZM650 182h1v1h-1ZM651 180h1v1h-1ZM652 173h1v1h-1ZM655 185h1v1h-1ZM655 188h1v1h-1ZM656 180h1v1h-1ZM656 188h1v1h-1ZM657 183h1v1h-1ZM658 189h1v1h-1ZM658 186h1v1h-1ZM659 183h1v1h-1ZM659 182h1v1h-1ZM660 186h1v1h-1ZM660 187h1v1h-1ZM661 172h1v1h-1ZM662 184h1v1h-1ZM662 185h1v1h-1ZM663 186h1v1h-1ZM664 187h1v1h-1ZM664 179h1v1h-1ZM666 173h1v1h-1ZM666 175h1v1h-1ZM665 172h1v1h-1ZM667 185h1v1h-1ZM667 174h1v1h-1ZM669 181h1v1h-1ZM669 182h1v1h-1ZM670 169h1v1h-1ZM672 186h1v1h-1ZM672 187h1v1h-1ZM673 183h1v1h-1ZM674 183h1v1h-1ZM676 185h1v1h-1ZM675 183h1v1h-1ZM676 183h1v1h-1ZM677 172h1v1h-1ZM679 182h1v1h-1ZM679 182h1v1h-1ZM680 180h1v1h-1ZM681 182h1v1h-1ZM681 179h1v1h-1ZM682 185h1v1h-1ZM685 174h1v1h-1ZM685 177h1v1h-1ZM685 178h1v1h-1ZM686 179h1v1h-1ZM686 177h1v1h-1ZM687 183h1v1h-1ZM688 184h1v1h-1ZM690 186h1v1h-1ZM689 172h1v1h-1ZM691 189h1v1h-1ZM691 185h1v1h-1ZM693 179h1v1h-1ZM693 185h1v1h-1ZM694 174h1v1h-1ZM696 172h1v1h-1ZM696 178h1v1h-1ZM698 181h1v1h-1ZM699 185h1v1h-1ZM700 176h1v1h-1ZM700 183h1v1h-1ZM701 185h1v1h-1ZM702 189h1v1h-1ZM704 174h1v1h-1ZM705 172h1v1h-1ZM706 184h1v1h-1ZM707 182h1v1h-1ZM707 182h1v1h-1ZM707 177h1v1h-1ZM709 184h1v1h-1ZM712 187h1v1h-1ZM714 179h1v1h-1ZM713 188h1v1h-1ZM714 182h1v1h-1ZM715 181h1v1h-1ZM715 184h1v1h-1ZM716 175h1v1h-1ZM716 176h1v1h-1ZM716 182h1v1h-1ZM717 174h1v1h-1ZM717 185h1v1h-1ZM718 185h1v1h-1ZM718 174h1v1h-1ZM718 187h1v1h-1ZM719 189h1v1h-1ZM719 180h1v1h-1ZM719 177h1v1h-1ZM721 174h1v1h-1ZM722 188h1v1h-1ZM722 183h1v1h-1ZM723 183h1v1h-1ZM725 183h1v1h-1ZM725 185h1v1h-1ZM726 181h1v1h-1ZM727 185h1v1h-1ZM728 180h1v1h-1ZM728 185h1v1h-1ZM728 178h1v1h-1ZM729 174h1v1h-1ZM729 170h1v1h-1ZM730 185h1v1h-1ZM731 167h1v1h-1ZM731 178h1v1h-1ZM747 179h1v1h-1ZM748 176h1v1h-1ZM749 178h1v1h-1ZM750 189h1v1h-1ZM751 168h1v1h-1ZM751 182h1v1h-1ZM751 178h1v1h-1ZM752 182h1v1h-1ZM752 183h1v1h-1ZM753 188h1v1h-1ZM754 172h1v1h-1ZM754 184h1v1h-1ZM754 183h1v1h-1ZM755 187h1v1h-1ZM757 185h1v1h-1ZM757 184h1v1h-1ZM760 185h1v1h-1ZM759 180h1v1h-1ZM761 173h1v1h-1ZM762 183h1v1h-1ZM762 183h1v1h-1ZM762 185h1v1h-1ZM763 174h1v1h-1ZM764 181h1v1h-1ZM765 183h1v1h-1ZM765 175h1v1h-1ZM766 167h1v1h-1ZM766 161h1v1h-1ZM767 177h1v1h-1ZM768 173h1v1h-1ZM770 181h1v1h-1ZM770 184h1v1h-1ZM771 185h1v1h-1ZM772 182h1v1h-1ZM772 185h1v1h-1ZM773 183h1v1h-1ZM775 172h1v1h-1ZM774 182h1v1h-1ZM777 185h1v1h-1ZM777 188h1v1h-1ZM778 187h1v1h-1ZM780 184h1v1h-1ZM781 185h1v1h-1ZM783 183h1v1h-1ZM783 187h1v1h-1ZM784 178h1v1h-1ZM786 185h1v1h-1ZM788 183h1v1h-1ZM788 184h1v1h-1ZM789 165h1v1h-1ZM790 181h1v1h-1ZM790 184h1v1h-1ZM791 182h1v1h-1ZM792 181h1v1h-1ZM792 166h1v1h-1ZM793 181h1v1h-1ZM793 185h1v1h-1ZM794 185h1v1h-1ZM796 177h1v1h-1ZM796 184h1v1h-1ZM797 186h1v1h-1ZM798 182h1v1h-1ZM800 181h1v1h-1ZM801 174h1v1h-1ZM802 181h1v1h-1ZM802 179h1v1h-1ZM803 182h1v1h-1ZM803 178h1v1h-1ZM804 167h1v1h-1ZM805 187h1v1h-1ZM806 187h1v1h-1ZM806 180h1v1h-1ZM807 181h1v1h-1ZM807 182h1v1h-1ZM809 186h1v1h-1ZM809 184h1v1h-1ZM812 172h1v1h-1ZM813 187h1v1h-1ZM815 187h1v1h-1ZM814 180h1v1h-1ZM816 179h1v1h-1ZM817 179h1v1h-1ZM818 181h1v1h-1ZM818 171h1v1h-1ZM820 181h1v1h-1ZM819 181h1v1h-1ZM819 185h1v1h-1ZM821 171h1v1h-1ZM822 188h1v1h-1ZM822 184h1v1h-1ZM823 186h1v1h-1ZM823 188h1v1h-1ZM825 179h1v1h-1ZM829 177h1v1h-1ZM829 186h1v1h-1ZM830 184h1v1h-1ZM831 188h1v1h-1ZM834 171h1v1h-1ZM836 173h1v1h-1ZM836 189h1v1h-1ZM837 180h1v1h-1ZM838 181h1v1h-1ZM840 181h1v1h-1ZM840 185h1v1h-1ZM841 187h1v1h-1ZM842 181h1v1h-1ZM842 178h1v1h-1ZM844 177h1v1h-1ZM844 176h1v1h-1ZM845 184h1v1h-1ZM847 171h1v1h-1ZM847 182h1v1h-1ZM849 179h1v1h-1ZM851 184h1v1h-1ZM852 180h1v1h-1ZM852 171h1v1h-1Z" fill="#f27848" fill-opacity="0.9"/>
<path d="M0 188h1v1h-1ZM1 188h1v1h-1ZM4 184h1v1h-1ZM4 182h1v1h-1ZM10 189h1v1h-1ZM20 188h1v1h-1ZM20 184h1v1h-1ZM27 188h1v1h-1ZM30 183h1v1h-1ZM33 188h1v1h-1ZM35 189h1v1h-1ZM37 186h1v1h-1ZM39 189h1v1h-1ZM40 177h1v1h-1ZM41 189h1v1h-1ZM44 186h1v1h-1ZM45 187h1v1h-1ZM47 186h1v1h-1ZM49 189h1v1h-1ZM49 189h1v1h-1ZM52 186h1v1h-1ZM54 187h1v1h-1ZM55 187h1v1h-1ZM68 187h1v1h-1ZM76 186h1v1h-1ZM93 189h1v1h-1ZM100 187h1v1h-1ZM102 186h1v1h-1ZM110 186h1v1h-1ZM116 180h1v1h-1ZM119 188h1v1h-1ZM120 187h1v1h-1ZM122 188h1v1h-1ZM124 186h1v1h-1ZM126 189h1v1h-1ZM126 183h1v1h-1ZM127 184h1v1h-1ZM127 187h1v1h-1ZM128 189h1v1h-1ZM134 181h1v1h-1ZM147 189h1v1h-1ZM148 188h1v1h-1ZM150 189h1v1h-1ZM155 188h1v1h-1ZM159 187h1v1h-1ZM165 181h1v1h-1ZM173 187h1v1h-1ZM180 186h1v1h-1ZM184 186h1v1h-1ZM186 183h1v1h-1ZM188 189h1v1h-1ZM189 188h1v1h-1ZM191 188h1v1h-1ZM195 188h1v1h-1ZM204 186h1v1h-1ZM205 187h1v1h-1ZM206 186h1v1h-1ZM209 187h1v1h-1ZM210 179h1v1h-1ZM229 189h1v1h-1ZM231 188h1v1h-1ZM237 181h1v1h-1ZM242 184h1v1h-1ZM243 182h1v1h-1ZM245 189h1v1h-1ZM246 176h1v1h-1ZM249 188h1v1h-1ZM249 182h1v1h-1ZM250 187h1v1h-1ZM257 185h1v1h-1ZM265 189h1v1h-1ZM275 187h1v1h-1ZM277 189h1v1h-1ZM280 183h1v1h-1ZM281 186h1v1h-1ZM290 189h1v1h-1ZM299 189h1v1h-1ZM331 187h1v1h-1ZM331 187h1v1h-1ZM334 187h1v1h-1ZM335 187h1v1h-1ZM335 189h1v1h-1ZM339 188h1v1h-1ZM340 188h1v1h-1ZM346 188h1v1h-1ZM347 187h1v1h-1ZM349 189h1v1h-1ZM356 186h1v1h-1ZM357 180h1v1h-1ZM358 189h1v1h-1ZM360 186h1v1h-1ZM361 189h1v1h-1ZM363 186h1v1h-1ZM371 187h1v1h-1ZM373 188h1v1h-1ZM375 186h1v1h-1ZM376 187h1v1h-1ZM377 187h1v1h-1ZM378 187h1v1h-1ZM380 186h1v1h-1ZM382 188h1v1h-1ZM388 188h1v1h-1ZM388 186h1v1h-1ZM391 181h1v1h-1ZM394 189h1v1h-1ZM400 176h1v1h-1ZM400 186h1v1h-1ZM431 189h1v1h-1ZM437 184h1v1h-1ZM439 177h1v1h-1ZM441 186h1v1h-1ZM442 183h1v1h-1ZM445 187h1v1h-1ZM451 189h1v1h-1ZM451 187h1v1h-1ZM452 189h1v1h-1ZM452 188h1v1h-1ZM454 186h1v1h-1ZM460 187h1v1h-1ZM466 186h1v1h-1ZM467 186h1v1h-1ZM471 189h1v1h-1ZM474 188h1v1h-1ZM477 187h1v1h-1ZM479 187h1v1h-1ZM479 188h1v1h-1ZM480 187h1v1h-1ZM481 170h1v1h-1ZM481 187h1v1h-1ZM482 184h1v1h-1ZM482 173h1v1h-1ZM484 188h1v1h-1ZM486 188h1v1h-1ZM487 188h1v1h-1ZM487 184h1v1h-1ZM489 187h1v1h-1ZM488 188h1v1h-1ZM490 186h1v1h-1ZM491 189h1v1h-1ZM492 185h1v1h-1ZM498 187h1v1h-1ZM497 188h1v1h-1ZM499 187h1v1h-1ZM502 186h1v1h-1ZM502 182h1v1h-1ZM503 177h1v1h-1ZM505 186h1v1h-1ZM511 174h1v1h-1ZM511 186h1v1h-1ZM513 186h1v1h-1ZM514 187h1v1h-1ZM516 168h1v1h-1ZM518 187h1v1h-1ZM520 187h1v1h-1ZM522 189h1v1h-1ZM526 186h1v1h-1ZM527 188h1v1h-1ZM528 176h1v1h-1ZM530 189h1v1h-1ZM531 189h1v1h-1ZM532 177h1v1h-1ZM534 186h1v1h-1ZM537 186h1v1h-1ZM540 187h1v1h-1ZM544 182h1v1h-1ZM546 184h1v1h-1ZM546 186h1v1h-1ZM547 187h1v1h-1ZM550 188h1v1h-1ZM553 189h1v1h-1ZM553 185h1v1h-1ZM557 188h1v1h-1ZM558 189h1v1h-1ZM562 188h1v1h-1ZM562 179h1v1h-1ZM564 189h1v1h-1ZM569 189h1v1h-1ZM570 189h1v1h-1ZM570 187h1v1h-1ZM574 169h1v1h-1ZM575 189h1v1h-1ZM576 186h1v1h-1ZM577 188h1v1h-1ZM581 189h1v1h-1ZM583 188h1v1h-1ZM584 184h1v1h-1ZM585 186h1v1h-1ZM585 179h1v1h-1ZM586 173h1v1h-1ZM586 186h1v1h-1ZM587 188h1v1h-1ZM589 188h1v1h-1ZM596 188h1v1h-1ZM597 187h1v1h-1ZM598 187h1v1h-1ZM601 189h1v1h-1ZM604 186h1v1h-1ZM604 188h1v1h-1ZM603 176h1v1h-1ZM603 188h1v1h-1ZM606 178h1v1h-1ZM609 173h1v1h-1ZM610 184h1v1h-1ZM610 187h1v1h-1ZM611 183h1v1h-1ZM612 184h1v1h-1ZM613 189h1v1h-1ZM613 189h1v1h-1ZM614 188h1v1h-1ZM616 180h1v1h-1ZM618 189h1v1h-1ZM621 183h1v1h-1ZM622 181h1v1h-1ZM623 189h1v1h-1ZM627 182h1v1h-1ZM626 182h1v1h-1ZM629 187h1v1h-1ZM628 189h1v1h-1ZM639 187h1v1h-1ZM641 180h1v1h-1ZM645 182h1v1h-1ZM648 188h1v1h-1ZM649 184h1v1h-1ZM651 182h1v1h-1ZM652 189h1v1h-1ZM657 187h1v1h-1ZM657 189h1v1h-1ZM660 186h1v1h-1ZM661 181h1v1h-1ZM661 187h1v1h-1ZM662 188h1v1h-1ZM663 188h1v1h-1ZM667 188h1v1h-1ZM669 186h1v1h-1ZM670 187h1v1h-1ZM671 188h1v1h-1ZM674 187h1v1h-1ZM677 184h1v1h-1ZM682 189h1v1h-1ZM682 184h1v1h-1ZM684 186h1v1h-1ZM684 187h1v1h-1ZM687 188h1v1h-1ZM688 187h1v1h-1ZM690 188h1v1h-1ZM691 180h1v1h-1ZM693 189h1v1h-1ZM694 189h1v1h-1ZM696 187h1v1h-1ZM697 188h1v1h-1ZM699 184h1v1h-1ZM703 188h1v1h-1ZM708 188h1v1h-1ZM711 189h1v1h-1ZM710 181h1v1h-1ZM712 186h1v1h-1ZM715 188h1v1h-1ZM717 187h1v1h-1ZM720 187h1v1h-1ZM723 187h1v1h-1ZM724 188h1v1h-1ZM724 189h1v1h-1ZM725 188h1v1h-1ZM747 186h1v1h-1ZM750 187h1v1h-1ZM761 186h1v1h-1ZM763 187h1v1h-1ZM763 180h1v1h-1ZM764 188h1v1h-1ZM766 186h1v1h-1ZM767 186h1v1h-1ZM768 189h1v1h-1ZM769 188h1v1h-1ZM770 188h1v1h-1ZM771 186h1v1h-1ZM772 186h1v1h-1ZM773 186h1v1h-1ZM773 188h1v1h-1ZM776 188h1v1h-1ZM776 182h1v1h-1ZM778 187h1v1h-1ZM780 189h1v1h-1ZM782 188h1v1h-1ZM784 186h1v1h-1ZM787 189h1v1h-1ZM791 189h1v1h-1ZM793 188h1v1h-1ZM795 189h1v1h-1ZM796 189h1v1h-1ZM797 188h1v1h-1ZM803 189h1v1h-1ZM805 170h1v1h-1ZM806 189h1v1h-1ZM808 186h1v1h-1ZM812 189h1v1h-1ZM813 186h1v1h-1ZM814 187h1v1h-1ZM818 189h1v1h-1ZM821 187h1v1h-1ZM824 185h1v1h-1ZM824 189h1v1h-1ZM825 180h1v1h-1ZM826 175h1v1h-1ZM827 186h1v1h-1ZM829 186h1v1h-1ZM830 181h1v1h-1ZM832 181h1v1h-1ZM833 175h1v1h-1ZM837 187h1v1h-1ZM837 186h1v1h-1ZM841 187h1v1h-1ZM846 188h1v1h-1ZM849 189h1v1h-1Z" fill="#f8b868" fill-opacity="0.95"/>
<rect x="430" y="96" width="1" height="95" fill="#4a4650" opacity="0.8"/>
<rect x="531" y="96" width="1" height="95" fill="#4a4650" opacity="0.8"/>
<rect x="732" y="96" width="1" height="95" fill="#4a4650" opacity="0.8"/>
<rect x="0" y="189" width="854" height="2" fill="#e86a50" opacity="0.5"/>
<rect x="0" y="95" width="854" height="1" fill="#7a7a7a"/>
<path d="M0 0.5H854M0 94.5H854M0 96.5H854M0 191.5H854" stroke="#000" stroke-width="1" stroke-opacity="0.6"/>
<path d="M0 0.5H854M0 94.5H854M0 96.5H854M0 191.5H854" stroke="#e0e0e0" stroke-width="1" stroke-dasharray="4 1.5"/>
<path d="M853.5 0V192" stroke="#e0e0e0" stroke-width="1" stroke-dasharray="4 1.5"/>
<rect x="0" y="0" width="4" height="4" fill="#d8d0d8"/><rect x="0" y="90" width="4" height="4" fill="#d8d0d8"/><rect x="0" y="97" width="4" height="5" fill="#d8d0d8"/><rect x="0" y="187" width="4" height="4" fill="#d8d0d8"/>
<rect x="850" y="0" width="4" height="4" fill="#d8d0d8"/><rect x="850" y="90" width="4" height="4" fill="#d8d0d8"/><rect x="850" y="97" width="4" height="5" fill="#d8d0d8"/><rect x="850" y="187" width="4" height="4" fill="#d8d0d8"/>
</svg>
<div class="a" style="left:1px;top:567px;width:1365px;height:178px;background:#232323"></div>
<div class="a" style="left:14px;top:581px;font-size:11px;line-height:13px;color:#d2d2d2;">Frequency Analysis</div>
<div class="a" style="left:120px;top:584px;width:9px;height:1px;background:#c8c8c8"></div>
<div class="a" style="left:120px;top:587px;width:9px;height:1px;background:#c8c8c8"></div>
<div class="a" style="left:120px;top:590px;width:9px;height:1px;background:#c8c8c8"></div>
<div class="a" style="left:13px;top:620px;font-size:11px;line-height:13px;color:#a5a5a5;">Scale:</div>
<div class="a" style="left:46px;top:615px;width:100px;height:20px;background:#1c1c1c;border:1px solid #2e2e2e;border-radius:2px"></div>
<div class="a" style="left:54px;top:620px;font-size:11px;line-height:13px;color:#d8d8d8;letter-spacing:0.15px">Logarithmic</div>
<svg style="left:132px;top:622px" width="9" height="6"><path d="M0.5 0.5L4.5 4.5L8.5 0.5" fill="none" stroke="#b0b0b0" stroke-width="1.1"/></svg>
<svg style="left:161px;top:617px" width="17" height="16"><rect x="1.5" y="1.5" width="9" height="9" fill="none" stroke="#b8b8b8" stroke-width="1"/><path d="M12.5 4V15M4 14.5H12" stroke="#b8b8b8" stroke-width="1" stroke-dasharray="1 1"/></svg>
<div class="a" style="left:194px;top:620px;font-size:11px;line-height:13px;color:#a5a5a5;letter-spacing:0.1px">Hold:</div>
<div class="a" style="left:225px;top:615px;width:23px;height:19px;background:#1d1d1d;border:1px solid #2e2e2e;border-radius:2px"></div>
<div class="a" style="left:86.5px;width:300px;text-align:center;top:618px;font-size:11px;line-height:13px;color:#a8a8a8;">1</div>
<div class="a" style="left:225px;top:637px;width:23px;height:4px;background:#e0201e"></div>
<div class="a" style="left:251px;top:615px;width:23px;height:19px;background:#1d1d1d;border:1px solid #2e2e2e;border-radius:2px"></div>
<div class="a" style="left:112.5px;width:300px;text-align:center;top:618px;font-size:11px;line-height:13px;color:#a8a8a8;">2</div>
<div class="a" style="left:251px;top:637px;width:23px;height:4px;background:#f08220"></div>
<div class="a" style="left:277px;top:615px;width:23px;height:19px;background:#1d1d1d;border:1px solid #2e2e2e;border-radius:2px"></div>
<div class="a" style="left:138.5px;width:300px;text-align:center;top:618px;font-size:11px;line-height:13px;color:#a8a8a8;">3</div>
<div class="a" style="left:277px;top:637px;width:23px;height:4px;background:#f0e62a"></div>
<div class="a" style="left:303px;top:615px;width:23px;height:19px;background:#1d1d1d;border:1px solid #2e2e2e;border-radius:2px"></div>
<div class="a" style="left:164.5px;width:300px;text-align:center;top:618px;font-size:11px;line-height:13px;color:#a8a8a8;">4</div>
<div class="a" style="left:303px;top:637px;width:23px;height:4px;background:#70e02a"></div>
<div class="a" style="left:329px;top:615px;width:23px;height:19px;background:#1d1d1d;border:1px solid #2e2e2e;border-radius:2px"></div>
<div class="a" style="left:190.5px;width:300px;text-align:center;top:618px;font-size:11px;line-height:13px;color:#a8a8a8;">5</div>
<div class="a" style="left:329px;top:637px;width:23px;height:4px;background:#48b448"></div>
<div class="a" style="left:355px;top:615px;width:23px;height:19px;background:#1d1d1d;border:1px solid #2e2e2e;border-radius:2px"></div>
<div class="a" style="left:216.5px;width:300px;text-align:center;top:618px;font-size:11px;line-height:13px;color:#a8a8a8;">6</div>
<div class="a" style="left:355px;top:637px;width:23px;height:4px;background:#2ad2f0"></div>
<div class="a" style="left:381px;top:615px;width:23px;height:19px;background:#1d1d1d;border:1px solid #2e2e2e;border-radius:2px"></div>
<div class="a" style="left:242.5px;width:300px;text-align:center;top:618px;font-size:11px;line-height:13px;color:#a8a8a8;">7</div>
<div class="a" style="left:381px;top:637px;width:23px;height:4px;background:#3c8ce0"></div>
<div class="a" style="left:407px;top:615px;width:23px;height:19px;background:#1d1d1d;border:1px solid #2e2e2e;border-radius:2px"></div>
<div class="a" style="left:268.5px;width:300px;text-align:center;top:618px;font-size:11px;line-height:13px;color:#a8a8a8;">8</div>
<div class="a" style="left:407px;top:637px;width:23px;height:4px;background:#e02ad8"></div>
<div class="a" style="left:12px;top:652px;width:1342px;height:93px;border:1px solid #2b2b2b"></div>
<div class="a" style="left:17px;top:657px;width:1297px;height:65px;background:#000"></div>
<svg style="left:17px;top:657px" width="1297" height="65">
<path d="M4.5 0V65M1292.5 0V65M0 7.5H1297M0 34.5H1297M0 61.5H1297" stroke="#174717" stroke-width="1"/>
<path d="M273.2 0V65" stroke="#174717" stroke-width="1"/>
<path d="M701.5 0V65" stroke="#174717" stroke-width="1"/>
<path d="M1129.8 0V65" stroke="#174717" stroke-width="1"/>
<path d="M4 61 V26 V26.1H34 V26.2H54 V26.6H62 V27.0H92 V26.5H100 V26.5H108 V26.3H120 V26.1H150 V25.2H180 V25.0H192 V25.2H204 V25.3H212 V25.3H242 V25.3H250 V25.2H262 V25.4H292 V25.5H312 V25.2H342 V25.3H350 V25.7H358 V25.9H366 V25.7H396 V26.7H408 V27.1H416 V26.3H424 V26.5H436 V26.0H448 V26.3H456 V26.9H464 V27.2H494 V28.7H506 V28.7H536 V28.6H544 V28.2H556 V28.0H564 V28.3H576 V27.8H584 V28.1H614 V27.4H626 V28.5H634 V29.1H642 V29.7H650 V29.8H670 V30.7H700 V31.6H706 V31.7H711 V31.2H715 V31.3H717 V31.4H722 V31.4H724 V31.3H728 V31.2H730 V31.7H736 V31.4H741 V31.5H744 V31.5H746 V31.3H749 V31.5H754 V31.4H760 V31.3H764 V31.2H768 V31.4H771 V31.8H774 V31.3H780 V31.3H782 V31.8H785 V31.7H789 V31.6H793 V31.8H798 V32.1H801 V31.7H807 V31.7H809 V31.7H814 V32.2H820 V32.4H825 V32.7H828 V32.9H832 V32.9H838 V33.2H840 V32.9H844 V33.0H847 V32.6H849 V32.9H852 V32.5H855 V32.7H860 V32.5H866 V32.5H869 V32.7H875 V32.1H881 V32.4H883 V32.5H889 V32.0H895 V32.2H901 V32.6H903 V32.2H909 V31.5H913 V32.3H916 V31.6H918 V32.1H923 V32.7H928 V32.6H930 V32.3H932 V32.2H937 V32.7H943 V32.2H946 V32.3H952 V33.2H954 V33.1H959 V32.8H961 V33.5H967 V32.8H969 V33.5H973 V33.5H979 V34.1H981 V33.8H983 V33.5H987 V34.5H992 V35.3H997 V34.5H1000 V35.4H1004 V35.8H1009 V36.3H1012 V35.5H1014 V35.5H1016 V35.9H1018 V36.1H1020 V35.9H1026 V36.1H1028 V36.8H1032 V36.0H1035 V37.2H1039 V37.3H1041 V37.2H1047 V37.5H1049 V37.5H1054 V37.7H1060 V37.6H1062 V37.2H1065 V38.2H1068 V38.3H1073 V38.7H1077 V37.8H1079 V38.2H1084 V38.6H1090 V39.0H1096 V39.5H1101 V39.6H1103 V40.0H1108 V40.3H1114 V40.4H1119 V40.5H1124 V41.0H1126 V41.0H1132 V42.2H1135 V42.7H1138 V42.1H1140 V43.0H1145 V43.1H1151 V42.9H1156 V43.9H1162 V43.4H1164 V44.0H1170 V45.0H1173 V45.2H1177 V45.2H1183 V46.0H1188 V46.6H1192 V46.0H1195 V47.3H1197 V46.4H1201 V47.1H1204 V47.5H1206 V47.9H1211 V48.0H1216 V48.6H1222 V49.1H1225 V49.1H1229 V49.3H1233 V50.1H1238 V50.8H1244 V51.2H1247 V51.2H1249 V51.3H1251 V52.2H1257 V52.9H1262 V52.6H1264 V53.3H1267 V54.4H1272 V55.3H1275 V56.9H1278 V57.8H1282 V61Z" fill="#64a9a8" stroke="#80cbc2" stroke-width="0.9"/>
</svg>
<div class="a" style="left:23px;top:661px;font-size:11px;line-height:13px;color:#3a3a3a;">Scanned Selection</div>
<div class="a" style="left:17px;top:722px;width:1297px;height:1px;background:#9a9a9a"></div>
<div class="a" style="left:1313px;top:657px;width:1px;height:66px;background:#9a9a9a"></div>
<svg style="left:1313px;top:657px" width="10" height="66">
<rect x="0" y="3" width="6" height="1" fill="#9a9a9a"/>
<rect x="0" y="8" width="6" height="1" fill="#9a9a9a"/>
<rect x="0" y="13" width="6" height="1" fill="#9a9a9a"/>
<rect x="0" y="18" width="6" height="1" fill="#9a9a9a"/>
<rect x="0" y="23" width="6" height="1" fill="#9a9a9a"/>
<rect x="0" y="28" width="6" height="1" fill="#9a9a9a"/>
<rect x="0" y="33" width="6" height="1" fill="#9a9a9a"/>
<rect x="0" y="38" width="6" height="1" fill="#9a9a9a"/>
<rect x="0" y="43" width="6" height="1" fill="#9a9a9a"/>
<rect x="0" y="48" width="6" height="1" fill="#9a9a9a"/>
<rect x="0" y="53" width="6" height="1" fill="#9a9a9a"/>
<rect x="0" y="58" width="6" height="1" fill="#9a9a9a"/>
<rect x="0" y="63" width="6" height="1" fill="#9a9a9a"/>
<rect x="0" y="68" width="6" height="1" fill="#9a9a9a"/>
<rect x="0" y="7" width="9" height="1" fill="#9a9a9a"/>
<rect x="0" y="34" width="9" height="1" fill="#9a9a9a"/>
<rect x="0" y="61" width="9" height="1" fill="#9a9a9a"/>
</svg>
<div class="a" style="left:1326px;top:654px;font-size:11px;line-height:13px;color:#a0a0a0;">dB</div>
<div class="a" style="left:1326px;top:684px;font-size:11px;line-height:13px;color:#a0a0a0;">-50</div>
<div class="a" style="left:1325px;top:711px;font-size:11px;line-height:13px;color:#a0a0a0;">-100</div>
<div class="a" style="left:21px;top:723px;width:1px;height:5px;background:#9a9a9a"></div>
<div class="a" style="left:15px;top:733px;font-size:11px;line-height:13px;color:#c0c0c0;">Hz</div>
<div class="a" style="left:66px;top:723px;width:1px;height:5px;background:#9a9a9a"></div>
<div class="a" style="left:-83.74896660356862px;width:300px;text-align:center;top:733px;font-size:11px;line-height:13px;color:#6e6e6e;">30</div>
<div class="a" style="left:120px;top:723px;width:1px;height:5px;background:#9a9a9a"></div>
<div class="a" style="left:-30.237705714233726px;width:300px;text-align:center;top:733px;font-size:11px;line-height:13px;color:#6e6e6e;">40</div>
<div class="a" style="left:161px;top:723px;width:1px;height:5px;background:#9a9a9a"></div>
<div class="a" style="left:11.268852857116826px;width:300px;text-align:center;top:733px;font-size:11px;line-height:13px;color:#6e6e6e;">50</div>
<div class="a" style="left:195px;top:723px;width:1px;height:5px;background:#9a9a9a"></div>
<div class="a" style="left:45.18218053931457px;width:300px;text-align:center;top:733px;font-size:11px;line-height:13px;color:#6e6e6e;">60</div>
<div class="a" style="left:224px;top:723px;width:1px;height:5px;background:#9a9a9a"></div>
<div class="a" style="left:73.85549053810618px;width:300px;text-align:center;top:733px;font-size:11px;line-height:13px;color:#6e6e6e;">70</div>
<div class="a" style="left:249px;top:723px;width:1px;height:5px;background:#9a9a9a"></div>
<div class="a" style="left:98.69344142864944px;width:300px;text-align:center;top:733px;font-size:11px;line-height:13px;color:#6e6e6e;">80</div>
<div class="a" style="left:271px;top:723px;width:1px;height:5px;background:#9a9a9a"></div>
<div class="a" style="left:120.60206679286284px;width:300px;text-align:center;top:733px;font-size:11px;line-height:13px;color:#6e6e6e;">90</div>
<div class="a" style="left:290px;top:723px;width:1px;height:5px;background:#9a9a9a"></div>
<div class="a" style="left:140.2px;width:300px;text-align:center;top:733px;font-size:11px;line-height:13px;color:#d8d8d8;">100</div>
<div class="a" style="left:419px;top:723px;width:1px;height:5px;background:#9a9a9a"></div>
<div class="a" style="left:269.13114714288315px;width:300px;text-align:center;top:733px;font-size:11px;line-height:13px;color:#6e6e6e;">200</div>
<div class="a" style="left:495px;top:723px;width:1px;height:5px;background:#9a9a9a"></div>
<div class="a" style="left:344.5510333964314px;width:300px;text-align:center;top:733px;font-size:11px;line-height:13px;color:#6e6e6e;">300</div>
<div class="a" style="left:548px;top:723px;width:1px;height:5px;background:#9a9a9a"></div>
<div class="a" style="left:398.06229428576626px;width:300px;text-align:center;top:733px;font-size:11px;line-height:13px;color:#6e6e6e;">400</div>
<div class="a" style="left:590px;top:723px;width:1px;height:5px;background:#9a9a9a"></div>
<div class="a" style="left:439.5688528571169px;width:300px;text-align:center;top:733px;font-size:11px;line-height:13px;color:#6e6e6e;">500</div>
<div class="a" style="left:623px;top:723px;width:1px;height:5px;background:#9a9a9a"></div>
<div class="a" style="left:473.48218053931464px;width:300px;text-align:center;top:733px;font-size:11px;line-height:13px;color:#6e6e6e;">600</div>
<div class="a" style="left:652px;top:723px;width:1px;height:5px;background:#9a9a9a"></div>
<div class="a" style="left:502.15549053810616px;width:300px;text-align:center;top:733px;font-size:11px;line-height:13px;color:#6e6e6e;">700</div>
<div class="a" style="left:677px;top:723px;width:1px;height:5px;background:#9a9a9a"></div>
<div class="a" style="left:526.9934414286495px;width:300px;text-align:center;top:733px;font-size:11px;line-height:13px;color:#6e6e6e;">800</div>
<div class="a" style="left:699px;top:723px;width:1px;height:5px;background:#9a9a9a"></div>
<div class="a" style="left:548.9020667928628px;width:300px;text-align:center;top:733px;font-size:11px;line-height:13px;color:#6e6e6e;">900</div>
<div class="a" style="left:718px;top:723px;width:1px;height:5px;background:#9a9a9a"></div>
<div class="a" style="left:568.5px;width:300px;text-align:center;top:733px;font-size:11px;line-height:13px;color:#d8d8d8;">1k</div>
<div class="a" style="left:847px;top:723px;width:1px;height:5px;background:#9a9a9a"></div>
<div class="a" style="left:697.4311471428832px;width:300px;text-align:center;top:733px;font-size:11px;line-height:13px;color:#6e6e6e;">2k</div>
<div class="a" style="left:923px;top:723px;width:1px;height:5px;background:#9a9a9a"></div>
<div class="a" style="left:772.8510333964314px;width:300px;text-align:center;top:733px;font-size:11px;line-height:13px;color:#6e6e6e;">3k</div>
<div class="a" style="left:976px;top:723px;width:1px;height:5px;background:#9a9a9a"></div>
<div class="a" style="left:826.3622942857664px;width:300px;text-align:center;top:733px;font-size:11px;line-height:13px;color:#6e6e6e;">4k</div>
<div class="a" style="left:1018px;top:723px;width:1px;height:5px;background:#9a9a9a"></div>
<div class="a" style="left:867.8688528571167px;width:300px;text-align:center;top:733px;font-size:11px;line-height:13px;color:#6e6e6e;">5k</div>
<div class="a" style="left:1052px;top:723px;width:1px;height:5px;background:#9a9a9a"></div>
<div class="a" style="left:901.7821805393146px;width:300px;text-align:center;top:733px;font-size:11px;line-height:13px;color:#6e6e6e;">6k</div>
<div class="a" style="left:1080px;top:723px;width:1px;height:5px;background:#9a9a9a"></div>
<div class="a" style="left:930.4554905381062px;width:300px;text-align:center;top:733px;font-size:11px;line-height:13px;color:#6e6e6e;">7k</div>
<div class="a" style="left:1105px;top:723px;width:1px;height:5px;background:#9a9a9a"></div>
<div class="a" style="left:955.2934414286494px;width:300px;text-align:center;top:733px;font-size:11px;line-height:13px;color:#6e6e6e;">8k</div>
<div class="a" style="left:1127px;top:723px;width:1px;height:5px;background:#9a9a9a"></div>
<div class="a" style="left:977.2020667928628px;width:300px;text-align:center;top:733px;font-size:11px;line-height:13px;color:#6e6e6e;">9k</div>
<div class="a" style="left:1147px;top:723px;width:1px;height:5px;background:#9a9a9a"></div>
<div class="a" style="left:996.8px;width:300px;text-align:center;top:733px;font-size:11px;line-height:13px;color:#d8d8d8;">10k</div>
<div class="a" style="left:1276px;top:723px;width:1px;height:5px;background:#9a9a9a"></div>
<div class="a" style="left:1125.7311471428832px;width:300px;text-align:center;top:733px;font-size:11px;line-height:13px;color:#6e6e6e;">20k</div>
<div class="a" style="left:1310px;top:723px;width:1px;height:5px;background:#9a9a9a"></div>
<div class="a" style="left:0px;top:745px;width:1366px;height:2px;background:#1a1a1a"></div>
<div class="a" style="left:0px;top:747px;width:1366px;height:21px;background:#232323"></div>
<div class="a" style="left:9px;top:752px;font-size:11px;line-height:13px;color:#b4b4b4;">Analyze Statistics completed in 25,11 seconds</div>
<div class="a" style="left:763px;top:750px;width:1px;height:16px;background:#383838"></div>
<div class="a" style="left:813px;top:750px;width:1px;height:16px;background:#383838"></div>
<div class="a" style="left:922px;top:750px;width:1px;height:16px;background:#383838"></div>
<div class="a" style="left:1083px;top:750px;width:1px;height:16px;background:#383838"></div>
<div class="a" style="left:1153px;top:750px;width:1px;height:16px;background:#383838"></div>
<div class="a" style="left:1227px;top:750px;width:1px;height:16px;background:#383838"></div>
<div class="a" style="left:1317px;top:750px;width:1px;height:16px;background:#383838"></div>
<div class="a" style="left:932px;top:753px;font-size:11px;line-height:13px;color:#b8b8b8;">48000 Hz ● 24-bit ● Stereo</div>
<div class="a" style="left:1093px;top:753px;font-size:11px;line-height:13px;color:#b8b8b8;">602,97 MB</div>
<div class="a" style="left:1172px;top:753px;font-size:11px;line-height:13px;color:#b8b8b8;">36:35.331</div>
<div class="a" style="left:1237px;top:753px;font-size:11px;line-height:13px;color:#b8b8b8;letter-spacing:-0.2px">174,13 GB free</div>
<div class="a" style="left:1362px;top:565px;width:4px;height:203px;background:#1b1b1b"></div>
<div class="a" style="left:0px;top:766px;width:1366px;height:2px;background:#0e0e0e"></div>
<div class="a" style="left:39px;top:766px;width:160px;height:2px;background:#3a3a3a"></div>
</body></html>
